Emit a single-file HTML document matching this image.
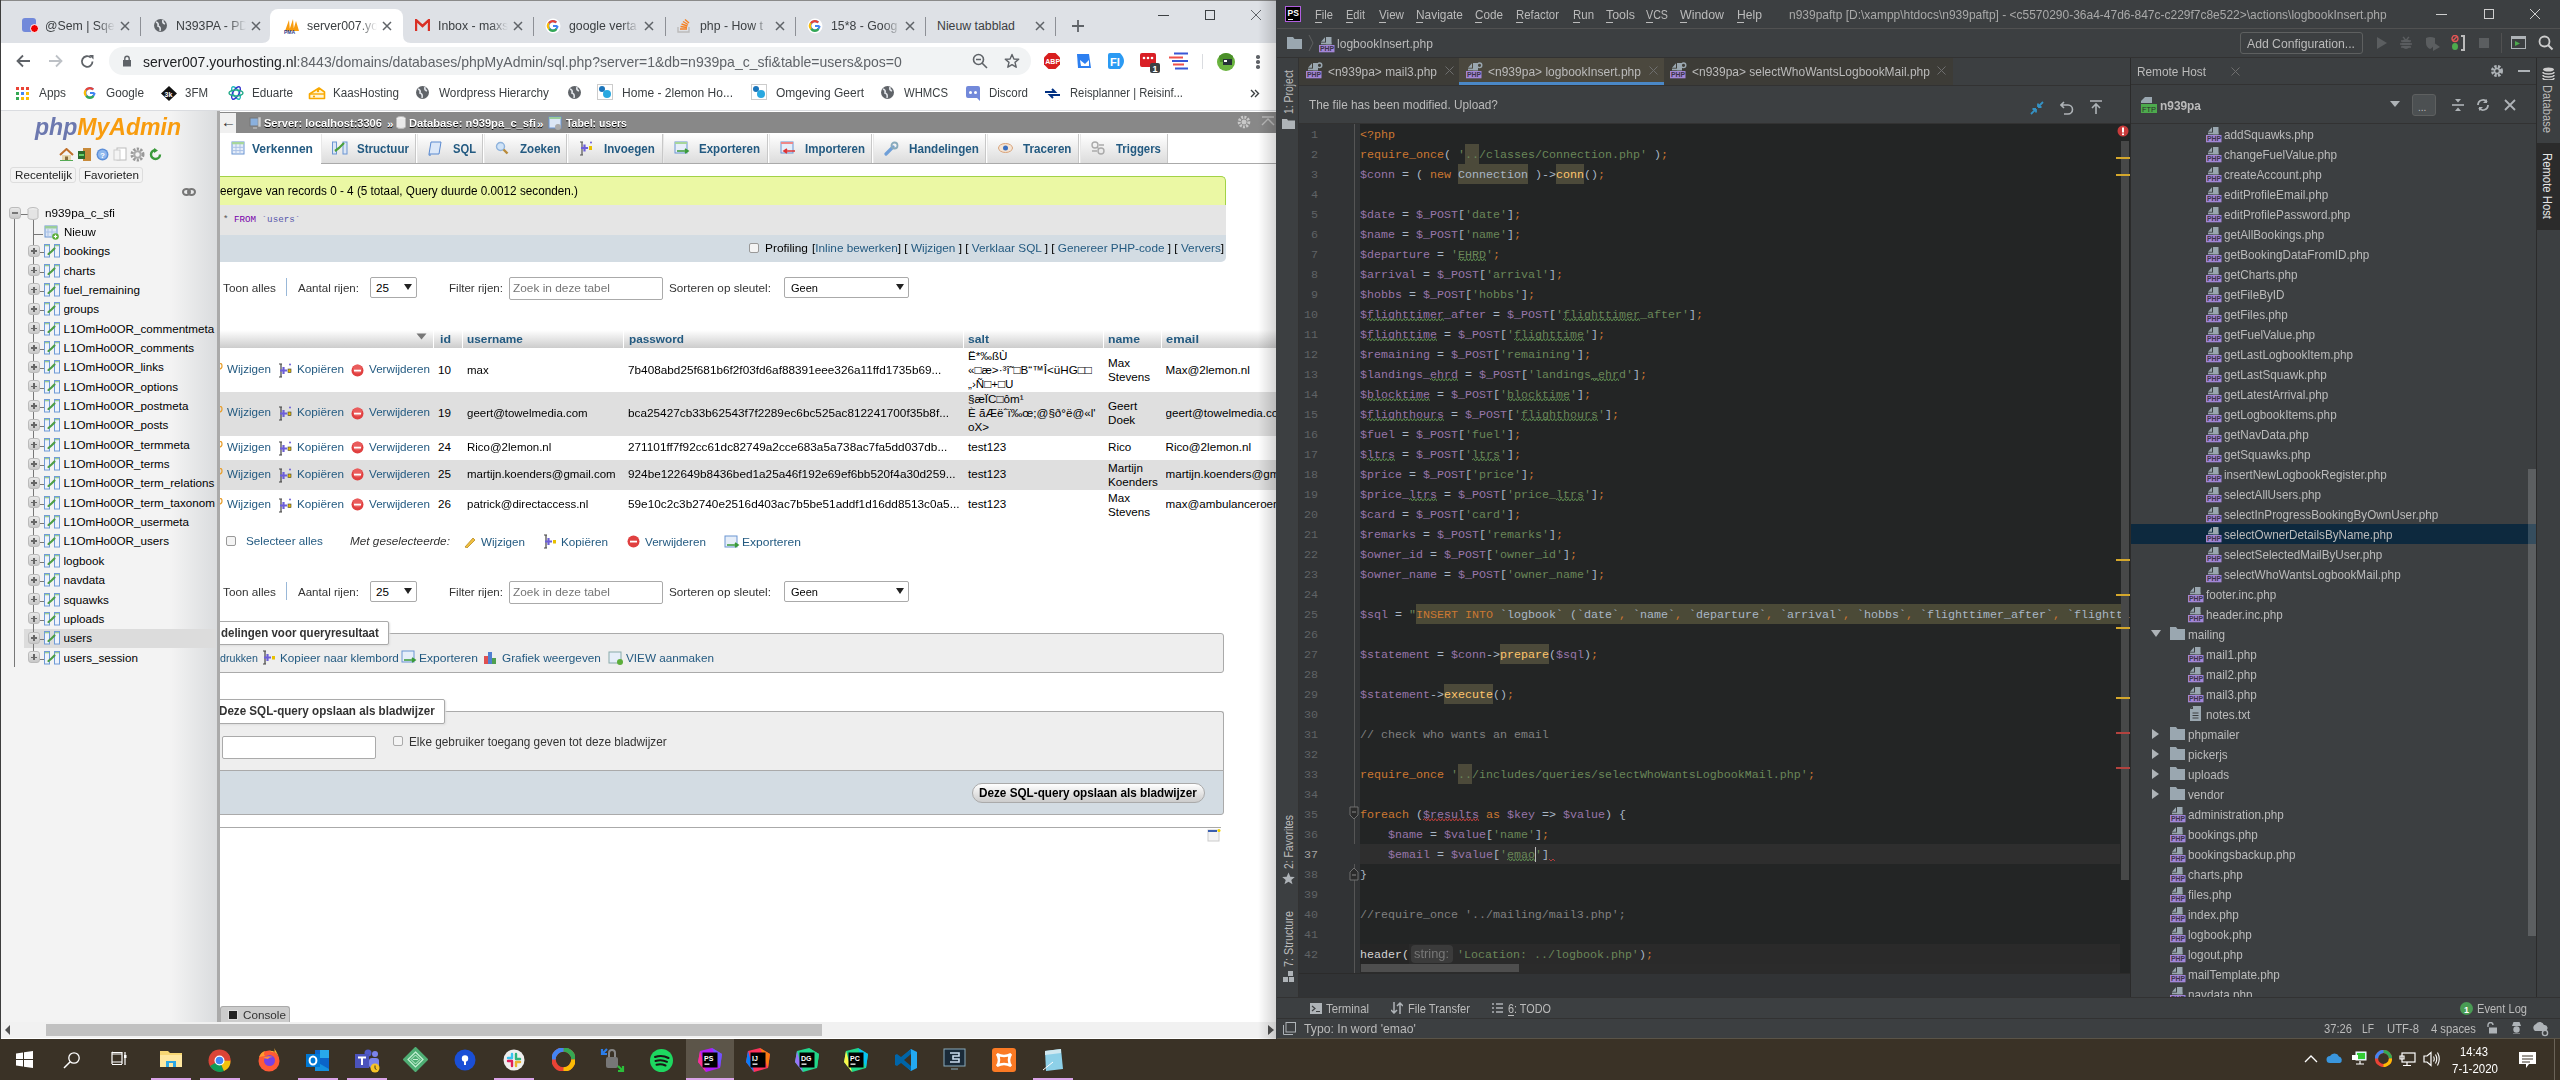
<!DOCTYPE html>
<html><head><meta charset="utf-8"><style>
html,body{margin:0;padding:0;width:2560px;height:1080px;overflow:hidden;background:#fff}
body>div,body>svg{position:absolute}
div>div,div>svg{position:absolute}
body{font-family:"Liberation Sans",sans-serif}
</style></head><body>
<div style="left:220px;top:111px;width:1057px;height:911px;background:#fff;"></div>
<div style="left:220px;top:112px;width:1057px;height:21px;background:#888;"></div>
<div style="left:220px;top:113px;width:16px;height:20px;background:#f0f0f0;"></div>
<div style="left:221px;top:113.00px;font-size:15px;line-height:18px;color:#333;font-family:'Liberation Sans',sans-serif;white-space:pre;">←</div>
<svg style="left:248px;top:116px;" width="14" height="14" viewBox="0 0 14 14"><rect x="2" y="2" width="10" height="8" fill="#8ab0dd" stroke="#777"/><rect x="10" y="1" width="3" height="10" fill="#ccc" stroke="#888" stroke-width="0.6"/><rect x="5" y="11" width="4" height="2" fill="#aaa"/></svg>
<div style="left:264px;top:115.00px;font-size:11.65px;line-height:16px;color:#fff;font-family:'Liberation Sans',sans-serif;white-space:pre;font-weight:700;transform:scaleX(0.9491);transform-origin:0 0;text-shadow:0 1px 0 #000;">Server: localhost:3306</div>
<div style="left:387px;top:116.00px;font-size:11.65px;line-height:16px;color:#fff;font-family:'Liberation Sans',sans-serif;white-space:pre;font-weight:700;text-shadow:0 1px 0 #000;">»</div>
<svg style="left:396px;top:116px;" width="10" height="13" viewBox="0 0 10 13"><ellipse cx="5" cy="2.5" rx="4.5" ry="2" fill="#f4f4f4" stroke="#bbb"/><path d="M0.5 2.5 V10.5 A4.5 2 0 0 0 9.5 10.5 V2.5" fill="#e9e9e9" stroke="#bbb"/></svg>
<div style="left:409px;top:115.00px;font-size:11.65px;line-height:16px;color:#fff;font-family:'Liberation Sans',sans-serif;white-space:pre;font-weight:700;transform:scaleX(0.9613);transform-origin:0 0;text-shadow:0 1px 0 #000;">Database: n939pa_c_sfi</div>
<div style="left:537px;top:116.00px;font-size:11.65px;line-height:16px;color:#fff;font-family:'Liberation Sans',sans-serif;white-space:pre;font-weight:700;text-shadow:0 1px 0 #000;">»</div>
<svg style="left:548px;top:116px;" width="14" height="14" viewBox="0 0 14 14"><rect x="1" y="1" width="12" height="11" fill="#dbe6f5" stroke="#6b95d2"/><rect x="1" y="1" width="12" height="2" fill="#9acd9a"/><circle cx="10" cy="11" r="3" fill="#aaa"/></svg>
<div style="left:566px;top:115.00px;font-size:11.65px;line-height:16px;color:#fff;font-family:'Liberation Sans',sans-serif;white-space:pre;font-weight:700;transform:scaleX(0.9001);transform-origin:0 0;text-shadow:0 1px 0 #000;">Tabel: users</div>
<svg style="left:1237px;top:115px;" width="14" height="14" viewBox="0 0 14 14"><circle cx="7" cy="7" r="4.8" fill="none" stroke="#c8c8c8" stroke-width="3" stroke-dasharray="2 1.2"/><circle cx="7" cy="7" r="2.5" fill="#c8c8c8"/></svg>
<svg style="left:1261px;top:116px;" width="14" height="12" viewBox="0 0 14 12"><path d="M1 1 H13 M1 9 L7 3 L13 9" stroke="#bbb" stroke-width="1.4" fill="none"/></svg>
<div style="left:220px;top:163px;width:1057px;height:1px;background:#aaa;"></div>
<div style="left:220px;top:133px;width:101px;height:31px;background:#fff;"></div>
<div style="left:252px;top:140.50px;font-size:12.2px;line-height:16px;color:#235a81;font-family:'Liberation Sans',sans-serif;white-space:pre;font-weight:700;transform:scaleX(0.9885);transform-origin:0 0;">Verkennen</div>
<svg style="left:231px;top:141px;" width="14" height="14" viewBox="0 0 14 14"><rect x="1" y="1" width="12" height="12" fill="#e6eef9" stroke="#6b95d2"/><rect x="1" y="1" width="12" height="2.3" fill="#a6d69a"/><path d="M5 3 V13 M9 3 V13 M1 6.3 H13 M1 9.6 H13" stroke="#a9c1e6"/></svg>
<div style="left:321px;top:134px;width:95px;height:29px;background:linear-gradient(#ffffff,#dcdcdc);border-right:1px solid #c8c8c8;border-left:1px solid #e8e8e8;box-sizing:border-box"></div>
<div style="left:357px;top:140.50px;font-size:12.2px;line-height:16px;color:#235a81;font-family:'Liberation Sans',sans-serif;white-space:pre;font-weight:700;transform:scaleX(0.9471);transform-origin:0 0;">Structuur</div>
<svg style="left:332px;top:141px;" width="16" height="14" viewBox="0 0 16 14"><rect x="0.5" y="1" width="4" height="12" fill="#dbe6f5" stroke="#6b95d2"/><rect x="11" y="1" width="4" height="12" fill="#dbe6f5" stroke="#6b95d2"/><path d="M3 10 L7 7 L12 2" stroke="#4aa03a" stroke-width="2.2" fill="none"/></svg>
<div style="left:417px;top:134px;width:66px;height:29px;background:linear-gradient(#ffffff,#dcdcdc);border-right:1px solid #c8c8c8;border-left:1px solid #e8e8e8;box-sizing:border-box"></div>
<div style="left:453px;top:140.50px;font-size:12.2px;line-height:16px;color:#235a81;font-family:'Liberation Sans',sans-serif;white-space:pre;font-weight:700;transform:scaleX(0.9171);transform-origin:0 0;">SQL</div>
<svg style="left:428px;top:141px;" width="14" height="15" viewBox="0 0 14 15"><path d="M3 1 H13 L11 13 H1Z" fill="#dce8f8" stroke="#5a8ad0"/><path d="M1 13 Q0 15 3 14" stroke="#5a8ad0" fill="none"/></svg>
<div style="left:484px;top:134px;width:83px;height:29px;background:linear-gradient(#ffffff,#dcdcdc);border-right:1px solid #c8c8c8;border-left:1px solid #e8e8e8;box-sizing:border-box"></div>
<div style="left:520px;top:140.50px;font-size:12.2px;line-height:16px;color:#235a81;font-family:'Liberation Sans',sans-serif;white-space:pre;font-weight:700;transform:scaleX(0.9500);transform-origin:0 0;">Zoeken</div>
<svg style="left:495px;top:141px;" width="14" height="14" viewBox="0 0 14 14"><circle cx="5.5" cy="5.5" r="4" fill="#cfe3f7" stroke="#8fb3dc" stroke-width="1.4"/><path d="M8.5 8.5 L12.5 12.5" stroke="#b88a3a" stroke-width="2.4"/></svg>
<div style="left:568px;top:134px;width:95px;height:29px;background:linear-gradient(#ffffff,#dcdcdc);border-right:1px solid #c8c8c8;border-left:1px solid #e8e8e8;box-sizing:border-box"></div>
<div style="left:604px;top:140.50px;font-size:12.2px;line-height:16px;color:#235a81;font-family:'Liberation Sans',sans-serif;white-space:pre;font-weight:700;transform:scaleX(0.9500);transform-origin:0 0;">Invoegen</div>
<svg style="left:579px;top:141px;" width="14" height="15" viewBox="0 0 14 15"><path d="M3 1 V14 M1 1 H4 M1 14 H4" stroke="#555" stroke-width="1.2"/><path d="M2 7 H9 M5.5 3.5 V10.5" stroke="#6d5fd8" stroke-width="2.2"/><rect x="10" y="5" width="3" height="4" fill="#e8c000"/><circle cx="12" cy="1.5" r="1" fill="#6d5fd8"/></svg>
<div style="left:663px;top:134px;width:105px;height:29px;background:linear-gradient(#ffffff,#dcdcdc);border-right:1px solid #c8c8c8;border-left:1px solid #e8e8e8;box-sizing:border-box"></div>
<div style="left:699px;top:140.50px;font-size:12.2px;line-height:16px;color:#235a81;font-family:'Liberation Sans',sans-serif;white-space:pre;font-weight:700;transform:scaleX(0.9471);transform-origin:0 0;">Exporteren</div>
<svg style="left:674px;top:141px;" width="16" height="14" viewBox="0 0 16 14"><rect x="1" y="1" width="12" height="11" fill="#e6eef9" stroke="#6b95d2"/><rect x="1" y="1" width="12" height="2" fill="#a6d69a"/><path d="M3 10 H13 M11 8 L14 10 L11 12" stroke="#3a9a3a" stroke-width="1.6" fill="none"/></svg>
<div style="left:769px;top:134px;width:103px;height:29px;background:linear-gradient(#ffffff,#dcdcdc);border-right:1px solid #c8c8c8;border-left:1px solid #e8e8e8;box-sizing:border-box"></div>
<div style="left:805px;top:140.50px;font-size:12.2px;line-height:16px;color:#235a81;font-family:'Liberation Sans',sans-serif;white-space:pre;font-weight:700;transform:scaleX(0.9416);transform-origin:0 0;">Importeren</div>
<svg style="left:780px;top:141px;" width="16" height="14" viewBox="0 0 16 14"><rect x="1" y="1" width="12" height="11" fill="#e6eef9" stroke="#6b95d2"/><rect x="1" y="1" width="12" height="2" fill="#e88"/><path d="M15 10 H5 M7 8 L4 10 L7 12" stroke="#d33" stroke-width="1.6" fill="none"/></svg>
<div style="left:873px;top:134px;width:113px;height:29px;background:linear-gradient(#ffffff,#dcdcdc);border-right:1px solid #c8c8c8;border-left:1px solid #e8e8e8;box-sizing:border-box"></div>
<div style="left:909px;top:140.50px;font-size:12.2px;line-height:16px;color:#235a81;font-family:'Liberation Sans',sans-serif;white-space:pre;font-weight:700;transform:scaleX(0.9562);transform-origin:0 0;">Handelingen</div>
<svg style="left:884px;top:141px;" width="15" height="15" viewBox="0 0 15 15"><path d="M2 13 L9 6" stroke="#6f9fd8" stroke-width="3.2" stroke-linecap="round"/><circle cx="10.5" cy="4.5" r="3" fill="none" stroke="#8ab" stroke-width="1.8"/></svg>
<div style="left:987px;top:134px;width:92px;height:29px;background:linear-gradient(#ffffff,#dcdcdc);border-right:1px solid #c8c8c8;border-left:1px solid #e8e8e8;box-sizing:border-box"></div>
<div style="left:1023px;top:140.50px;font-size:12.2px;line-height:16px;color:#235a81;font-family:'Liberation Sans',sans-serif;white-space:pre;font-weight:700;transform:scaleX(0.9534);transform-origin:0 0;">Traceren</div>
<svg style="left:998px;top:143px;" width="15" height="10" viewBox="0 0 15 10"><ellipse cx="7.5" cy="5" rx="7" ry="4.5" fill="#f4e4d4" stroke="#d9a37a"/><circle cx="7.5" cy="5" r="2.5" fill="#3a6fc0"/></svg>
<div style="left:1080px;top:134px;width:88px;height:29px;background:linear-gradient(#ffffff,#dcdcdc);border-right:1px solid #c8c8c8;border-left:1px solid #e8e8e8;box-sizing:border-box"></div>
<div style="left:1116px;top:140.50px;font-size:12.2px;line-height:16px;color:#235a81;font-family:'Liberation Sans',sans-serif;white-space:pre;font-weight:700;transform:scaleX(0.9348);transform-origin:0 0;">Triggers</div>
<svg style="left:1091px;top:141px;" width="14" height="14" viewBox="0 0 14 14"><circle cx="4" cy="4" r="3" fill="none" stroke="#aaa" stroke-width="1.4"/><circle cx="10" cy="10" r="3" fill="none" stroke="#aaa" stroke-width="1.4"/><path d="M6 6 L8 8 M1 10 H6 M8 4 H13" stroke="#aaa" stroke-width="1.4"/></svg>
<div style="left:220px;top:176px;width:1006px;height:29px;background:#ebf8a4;border-top:1px solid #a2d246;border-right:1px solid #a2d246;border-radius:0 5px 0 0;box-sizing:border-box"></div>
<div style="left:220px;top:183.00px;font-size:12.3px;line-height:16px;color:#000;font-family:'Liberation Sans',sans-serif;white-space:pre;transform:scaleX(0.9537);transform-origin:0 0;">eergave van records 0 - 4 (5 totaal, Query duurde 0.0012 seconden.)</div>
<div style="left:220px;top:205px;width:1006px;height:30px;background:#e5e5e5;"></div>
<div style="left:223px;top:214px;font-family:'Liberation Mono',monospace;font-size:9.2px;line-height:12px;white-space:pre"><span style="color:#555">*</span> <span style="color:#70a">FROM</span> <span style="color:#55a">`users`</span></div>
<div style="left:220px;top:235px;width:1006px;height:27px;background:#d3dce3;border-radius:0 0 5px 0"></div>
<div style="left:749px;top:243px;width:10px;height:10px;border:1px solid #999;border-radius:2px;background:#f4f4f4;box-sizing:border-box"></div>
<div style="left:765px;top:240.00px;font-size:11.65px;line-height:16px;color:#000;font-family:'Liberation Sans',sans-serif;white-space:pre;transform:scaleX(1.0216);transform-origin:0 0;">Profiling</div>
<div style="left:812px;top:240px;font-family:'Liberation Sans',sans-serif;font-size:11.65px;line-height:16px;white-space:pre;color:#000;transform:scaleX(1.012);transform-origin:0 0">[<span style="color:#235a81">Inline bewerken</span>] [ <span style="color:#235a81">Wijzigen</span> ] [ <span style="color:#235a81">Verklaar SQL</span> ] [ <span style="color:#235a81">Genereer PHP-code</span> ] [ <span style="color:#235a81">Ververs</span>]</div>
<div style="left:223px;top:280.00px;font-size:11.65px;line-height:16px;color:#333;font-family:'Liberation Sans',sans-serif;white-space:pre;transform:scaleX(1.0103);transform-origin:0 0;">Toon alles</div>
<div style="left:286px;top:278px;width:1px;height:18px;background:#99b8d8;"></div>
<div style="left:298px;top:280.00px;font-size:11.65px;line-height:16px;color:#333;font-family:'Liberation Sans',sans-serif;white-space:pre;transform:scaleX(0.9915);transform-origin:0 0;">Aantal rijen:</div>
<div style="left:370px;top:277px;width:47px;height:21px;border:1px solid #aaa;border-radius:2px;background:#fff;box-sizing:border-box"></div>
<div style="left:376px;top:280.00px;font-size:11.65px;line-height:16px;color:#000;font-family:'Liberation Sans',sans-serif;white-space:pre;">25</div>
<svg style="left:404px;top:284px;" width="8" height="7" viewBox="0 0 8 7"><path d="M0 0 H8 L4 6Z" fill="#222"/></svg>
<div style="left:449px;top:280.00px;font-size:11.65px;line-height:16px;color:#333;font-family:'Liberation Sans',sans-serif;white-space:pre;transform:scaleX(0.9930);transform-origin:0 0;">Filter rijen:</div>
<div style="left:509px;top:277px;width:154px;height:23px;border:1px solid #aaa;border-radius:2px;background:#fff;box-sizing:border-box"></div>
<div style="left:513px;top:280.00px;font-size:11.65px;line-height:16px;color:#757575;font-family:'Liberation Sans',sans-serif;white-space:pre;transform:scaleX(1.0189);transform-origin:0 0;">Zoek in deze tabel</div>
<div style="left:669px;top:280.00px;font-size:11.65px;line-height:16px;color:#333;font-family:'Liberation Sans',sans-serif;white-space:pre;transform:scaleX(1.0096);transform-origin:0 0;">Sorteren op sleutel:</div>
<div style="left:784px;top:277px;width:125px;height:21px;border:1px solid #aaa;border-radius:2px;background:#fff;box-sizing:border-box"></div>
<div style="left:791px;top:280.00px;font-size:11.65px;line-height:16px;color:#000;font-family:'Liberation Sans',sans-serif;white-space:pre;transform:scaleX(0.9474);transform-origin:0 0;">Geen</div>
<svg style="left:896px;top:284px;" width="8" height="7" viewBox="0 0 8 7"><path d="M0 0 H8 L4 6Z" fill="#222"/></svg>
<div style="left:223px;top:584.00px;font-size:11.65px;line-height:16px;color:#333;font-family:'Liberation Sans',sans-serif;white-space:pre;transform:scaleX(1.0103);transform-origin:0 0;">Toon alles</div>
<div style="left:286px;top:582px;width:1px;height:18px;background:#99b8d8;"></div>
<div style="left:298px;top:584.00px;font-size:11.65px;line-height:16px;color:#333;font-family:'Liberation Sans',sans-serif;white-space:pre;transform:scaleX(0.9915);transform-origin:0 0;">Aantal rijen:</div>
<div style="left:370px;top:581px;width:47px;height:21px;border:1px solid #aaa;border-radius:2px;background:#fff;box-sizing:border-box"></div>
<div style="left:376px;top:584.00px;font-size:11.65px;line-height:16px;color:#000;font-family:'Liberation Sans',sans-serif;white-space:pre;">25</div>
<svg style="left:404px;top:588px;" width="8" height="7" viewBox="0 0 8 7"><path d="M0 0 H8 L4 6Z" fill="#222"/></svg>
<div style="left:449px;top:584.00px;font-size:11.65px;line-height:16px;color:#333;font-family:'Liberation Sans',sans-serif;white-space:pre;transform:scaleX(0.9930);transform-origin:0 0;">Filter rijen:</div>
<div style="left:509px;top:581px;width:154px;height:23px;border:1px solid #aaa;border-radius:2px;background:#fff;box-sizing:border-box"></div>
<div style="left:513px;top:584.00px;font-size:11.65px;line-height:16px;color:#757575;font-family:'Liberation Sans',sans-serif;white-space:pre;transform:scaleX(1.0189);transform-origin:0 0;">Zoek in deze tabel</div>
<div style="left:669px;top:584.00px;font-size:11.65px;line-height:16px;color:#333;font-family:'Liberation Sans',sans-serif;white-space:pre;transform:scaleX(1.0096);transform-origin:0 0;">Sorteren op sleutel:</div>
<div style="left:784px;top:581px;width:125px;height:21px;border:1px solid #aaa;border-radius:2px;background:#fff;box-sizing:border-box"></div>
<div style="left:791px;top:584.00px;font-size:11.65px;line-height:16px;color:#000;font-family:'Liberation Sans',sans-serif;white-space:pre;transform:scaleX(0.9474);transform-origin:0 0;">Geen</div>
<svg style="left:896px;top:588px;" width="8" height="7" viewBox="0 0 8 7"><path d="M0 0 H8 L4 6Z" fill="#222"/></svg>
<div style="left:220px;top:330px;width:1057px;height:18px;background:linear-gradient(#ffffff,#cccccc)"></div>
<div style="left:433px;top:330px;width:1px;height:18px;background:#fff;"></div>
<div style="left:462px;top:330px;width:1px;height:18px;background:#fff;"></div>
<div style="left:623px;top:330px;width:1px;height:18px;background:#fff;"></div>
<div style="left:963px;top:330px;width:1px;height:18px;background:#fff;"></div>
<div style="left:1103px;top:330px;width:1px;height:18px;background:#fff;"></div>
<div style="left:1161px;top:330px;width:1px;height:18px;background:#fff;"></div>
<svg style="left:416px;top:333px;" width="11" height="8" viewBox="0 0 11 8"><path d="M0.5 0.5 H10.5 L5.5 6.5Z" fill="#777"/></svg>
<div style="left:440px;top:331.00px;font-size:11.65px;line-height:16px;color:#235a81;font-family:'Liberation Sans',sans-serif;white-space:pre;font-weight:700;transform:scaleX(1.0625);transform-origin:0 0;">id</div>
<div style="left:467px;top:331.00px;font-size:11.65px;line-height:16px;color:#235a81;font-family:'Liberation Sans',sans-serif;white-space:pre;font-weight:700;transform:scaleX(1.0174);transform-origin:0 0;">username</div>
<div style="left:629px;top:331.00px;font-size:11.65px;line-height:16px;color:#235a81;font-family:'Liberation Sans',sans-serif;white-space:pre;font-weight:700;transform:scaleX(1.0114);transform-origin:0 0;">password</div>
<div style="left:968px;top:331.00px;font-size:11.65px;line-height:16px;color:#235a81;font-family:'Liberation Sans',sans-serif;white-space:pre;font-weight:700;transform:scaleX(1.0461);transform-origin:0 0;">salt</div>
<div style="left:1108px;top:331.00px;font-size:11.65px;line-height:16px;color:#235a81;font-family:'Liberation Sans',sans-serif;white-space:pre;font-weight:700;transform:scaleX(1.0515);transform-origin:0 0;">name</div>
<div style="left:1166px;top:331.00px;font-size:11.65px;line-height:16px;color:#235a81;font-family:'Liberation Sans',sans-serif;white-space:pre;font-weight:700;transform:scaleX(1.1077);transform-origin:0 0;">email</div>
<div style="left:220px;top:348px;width:1057px;height:44px;background:#fff;"></div>
<svg style="left:218px;top:363px;" width="6" height="8" viewBox="0 0 6 8"><circle cx="1" cy="3" r="3" fill="none" stroke="#e8a030" stroke-width="1.3"/></svg>
<div style="left:227px;top:361.00px;font-size:11.65px;line-height:16px;color:#235a81;font-family:'Liberation Sans',sans-serif;white-space:pre;transform:scaleX(0.9994);transform-origin:0 0;">Wijzigen</div>
<svg style="left:278px;top:363px;" width="14" height="15" viewBox="0 0 14 15"><path d="M3 1 V14 M1 1 H4 M1 14 H4" stroke="#444" stroke-width="1.2"/><path d="M2 7.5 H9 M5.5 4 V11" stroke="#6d5fd8" stroke-width="2.2"/><rect x="10" y="6" width="3" height="3.5" fill="#e8c000" stroke="#333" stroke-width="0.6"/><circle cx="12" cy="1.5" r="1" fill="#6d5fd8"/></svg>
<div style="left:297px;top:361.00px;font-size:11.65px;line-height:16px;color:#235a81;font-family:'Liberation Sans',sans-serif;white-space:pre;transform:scaleX(1.0078);transform-origin:0 0;">Kopiëren</div>
<svg style="left:351px;top:363.5px;" width="13" height="13" viewBox="0 0 13 13"><circle cx="6.5" cy="6.5" r="6" fill="#e04040"/><circle cx="6.5" cy="5" r="4.5" fill="#f07070" opacity="0.6"/><rect x="3" y="5.7" width="7" height="1.8" fill="#fff"/></svg>
<div style="left:369px;top:361.00px;font-size:11.65px;line-height:16px;color:#235a81;font-family:'Liberation Sans',sans-serif;white-space:pre;transform:scaleX(1.0020);transform-origin:0 0;">Verwijderen</div>
<div style="left:438px;top:361.50px;font-size:11.65px;line-height:16px;color:#000;font-family:'Liberation Sans',sans-serif;white-space:pre;">10</div>
<div style="left:466.5px;top:361.50px;font-size:11.65px;line-height:16px;color:#000;font-family:'Liberation Sans',sans-serif;white-space:pre;transform:scaleX(0.9850);transform-origin:0 0;">max</div>
<div style="left:627.5px;top:361.50px;font-size:11.65px;line-height:16px;color:#000;font-family:'Liberation Sans',sans-serif;white-space:pre;transform:scaleX(1.0120);transform-origin:0 0;">7b408abd25f681b6f2f03fd6af88391eee326a11ffd1735b69...</div>
<div style="left:968px;top:349.00px;font-size:11.65px;line-height:14px;color:#000;font-family:'Liberation Sans',sans-serif;white-space:pre;">Ë*‰ßÙ</div>
<div style="left:968px;top:363.00px;font-size:11.65px;line-height:14px;color:#000;font-family:'Liberation Sans',sans-serif;white-space:pre;">«□æ&gt;·³î˜□B“™Î&lt;üHG□□</div>
<div style="left:968px;top:377.00px;font-size:11.65px;line-height:14px;color:#000;font-family:'Liberation Sans',sans-serif;white-space:pre;">„›Ñ□+□U</div>
<div style="left:1108px;top:356.00px;font-size:11.65px;line-height:14px;color:#000;font-family:'Liberation Sans',sans-serif;white-space:pre;">Max</div>
<div style="left:1108px;top:370.00px;font-size:11.65px;line-height:14px;color:#000;font-family:'Liberation Sans',sans-serif;white-space:pre;">Stevens</div>
<div style="left:1165.5px;top:361.5px;width:111px;overflow:hidden;font-family:'Liberation Sans',sans-serif;font-size:11.65px;line-height:16px;white-space:pre;color:#000">Max@2lemon.nl</div>
<div style="left:220px;top:392px;width:1057px;height:44px;background:#dfdfdf;"></div>
<svg style="left:218px;top:406px;" width="6" height="8" viewBox="0 0 6 8"><circle cx="1" cy="3" r="3" fill="none" stroke="#e8a030" stroke-width="1.3"/></svg>
<div style="left:227px;top:404.00px;font-size:11.65px;line-height:16px;color:#235a81;font-family:'Liberation Sans',sans-serif;white-space:pre;transform:scaleX(0.9994);transform-origin:0 0;">Wijzigen</div>
<svg style="left:278px;top:406px;" width="14" height="15" viewBox="0 0 14 15"><path d="M3 1 V14 M1 1 H4 M1 14 H4" stroke="#444" stroke-width="1.2"/><path d="M2 7.5 H9 M5.5 4 V11" stroke="#6d5fd8" stroke-width="2.2"/><rect x="10" y="6" width="3" height="3.5" fill="#e8c000" stroke="#333" stroke-width="0.6"/><circle cx="12" cy="1.5" r="1" fill="#6d5fd8"/></svg>
<div style="left:297px;top:404.00px;font-size:11.65px;line-height:16px;color:#235a81;font-family:'Liberation Sans',sans-serif;white-space:pre;transform:scaleX(1.0078);transform-origin:0 0;">Kopiëren</div>
<svg style="left:351px;top:406.5px;" width="13" height="13" viewBox="0 0 13 13"><circle cx="6.5" cy="6.5" r="6" fill="#e04040"/><circle cx="6.5" cy="5" r="4.5" fill="#f07070" opacity="0.6"/><rect x="3" y="5.7" width="7" height="1.8" fill="#fff"/></svg>
<div style="left:369px;top:404.00px;font-size:11.65px;line-height:16px;color:#235a81;font-family:'Liberation Sans',sans-serif;white-space:pre;transform:scaleX(1.0020);transform-origin:0 0;">Verwijderen</div>
<div style="left:438px;top:404.50px;font-size:11.65px;line-height:16px;color:#000;font-family:'Liberation Sans',sans-serif;white-space:pre;">19</div>
<div style="left:466.5px;top:404.50px;font-size:11.65px;line-height:16px;color:#000;font-family:'Liberation Sans',sans-serif;white-space:pre;transform:scaleX(0.9850);transform-origin:0 0;">geert@towelmedia.com</div>
<div style="left:627.5px;top:404.50px;font-size:11.65px;line-height:16px;color:#000;font-family:'Liberation Sans',sans-serif;white-space:pre;transform:scaleX(1.0120);transform-origin:0 0;">bca25427cb33b62543f7f2289ec6bc525ac812241700f35b8f...</div>
<div style="left:968px;top:392.00px;font-size:11.65px;line-height:14px;color:#000;font-family:'Liberation Sans',sans-serif;white-space:pre;">§æÏC□ôm¹</div>
<div style="left:968px;top:406.00px;font-size:11.65px;line-height:14px;color:#000;font-family:'Liberation Sans',sans-serif;white-space:pre;">È ãÆëˆï‰œ;@§ð°ë@«l'</div>
<div style="left:968px;top:420.00px;font-size:11.65px;line-height:14px;color:#000;font-family:'Liberation Sans',sans-serif;white-space:pre;">oX&gt;</div>
<div style="left:1108px;top:399.00px;font-size:11.65px;line-height:14px;color:#000;font-family:'Liberation Sans',sans-serif;white-space:pre;">Geert</div>
<div style="left:1108px;top:413.00px;font-size:11.65px;line-height:14px;color:#000;font-family:'Liberation Sans',sans-serif;white-space:pre;">Doek</div>
<div style="left:1165.5px;top:404.5px;width:111px;overflow:hidden;font-family:'Liberation Sans',sans-serif;font-size:11.65px;line-height:16px;white-space:pre;color:#000">geert@towelmedia.com</div>
<div style="left:220px;top:436px;width:1057px;height:24px;background:#fff;"></div>
<svg style="left:218px;top:440.5px;" width="6" height="8" viewBox="0 0 6 8"><circle cx="1" cy="3" r="3" fill="none" stroke="#e8a030" stroke-width="1.3"/></svg>
<div style="left:227px;top:438.50px;font-size:11.65px;line-height:16px;color:#235a81;font-family:'Liberation Sans',sans-serif;white-space:pre;transform:scaleX(0.9994);transform-origin:0 0;">Wijzigen</div>
<svg style="left:278px;top:440.5px;" width="14" height="15" viewBox="0 0 14 15"><path d="M3 1 V14 M1 1 H4 M1 14 H4" stroke="#444" stroke-width="1.2"/><path d="M2 7.5 H9 M5.5 4 V11" stroke="#6d5fd8" stroke-width="2.2"/><rect x="10" y="6" width="3" height="3.5" fill="#e8c000" stroke="#333" stroke-width="0.6"/><circle cx="12" cy="1.5" r="1" fill="#6d5fd8"/></svg>
<div style="left:297px;top:438.50px;font-size:11.65px;line-height:16px;color:#235a81;font-family:'Liberation Sans',sans-serif;white-space:pre;transform:scaleX(1.0078);transform-origin:0 0;">Kopiëren</div>
<svg style="left:351px;top:441.0px;" width="13" height="13" viewBox="0 0 13 13"><circle cx="6.5" cy="6.5" r="6" fill="#e04040"/><circle cx="6.5" cy="5" r="4.5" fill="#f07070" opacity="0.6"/><rect x="3" y="5.7" width="7" height="1.8" fill="#fff"/></svg>
<div style="left:369px;top:438.50px;font-size:11.65px;line-height:16px;color:#235a81;font-family:'Liberation Sans',sans-serif;white-space:pre;transform:scaleX(1.0020);transform-origin:0 0;">Verwijderen</div>
<div style="left:438px;top:439.00px;font-size:11.65px;line-height:16px;color:#000;font-family:'Liberation Sans',sans-serif;white-space:pre;">24</div>
<div style="left:466.5px;top:439.00px;font-size:11.65px;line-height:16px;color:#000;font-family:'Liberation Sans',sans-serif;white-space:pre;transform:scaleX(0.9850);transform-origin:0 0;">Rico@2lemon.nl</div>
<div style="left:627.5px;top:439.00px;font-size:11.65px;line-height:16px;color:#000;font-family:'Liberation Sans',sans-serif;white-space:pre;transform:scaleX(1.0120);transform-origin:0 0;">271101ff7f92cc61dc82749a2cce683a5a738ac7fa5dd037db...</div>
<div style="left:968px;top:439.00px;font-size:11.65px;line-height:16px;color:#000;font-family:'Liberation Sans',sans-serif;white-space:pre;">test123</div>
<div style="left:1108px;top:439.00px;font-size:11.65px;line-height:16px;color:#000;font-family:'Liberation Sans',sans-serif;white-space:pre;">Rico</div>
<div style="left:1165.5px;top:439.0px;width:111px;overflow:hidden;font-family:'Liberation Sans',sans-serif;font-size:11.65px;line-height:16px;white-space:pre;color:#000">Rico@2lemon.nl</div>
<div style="left:220px;top:460px;width:1057px;height:30px;background:#dfdfdf;"></div>
<svg style="left:218px;top:467.5px;" width="6" height="8" viewBox="0 0 6 8"><circle cx="1" cy="3" r="3" fill="none" stroke="#e8a030" stroke-width="1.3"/></svg>
<div style="left:227px;top:465.50px;font-size:11.65px;line-height:16px;color:#235a81;font-family:'Liberation Sans',sans-serif;white-space:pre;transform:scaleX(0.9994);transform-origin:0 0;">Wijzigen</div>
<svg style="left:278px;top:467.5px;" width="14" height="15" viewBox="0 0 14 15"><path d="M3 1 V14 M1 1 H4 M1 14 H4" stroke="#444" stroke-width="1.2"/><path d="M2 7.5 H9 M5.5 4 V11" stroke="#6d5fd8" stroke-width="2.2"/><rect x="10" y="6" width="3" height="3.5" fill="#e8c000" stroke="#333" stroke-width="0.6"/><circle cx="12" cy="1.5" r="1" fill="#6d5fd8"/></svg>
<div style="left:297px;top:465.50px;font-size:11.65px;line-height:16px;color:#235a81;font-family:'Liberation Sans',sans-serif;white-space:pre;transform:scaleX(1.0078);transform-origin:0 0;">Kopiëren</div>
<svg style="left:351px;top:468.0px;" width="13" height="13" viewBox="0 0 13 13"><circle cx="6.5" cy="6.5" r="6" fill="#e04040"/><circle cx="6.5" cy="5" r="4.5" fill="#f07070" opacity="0.6"/><rect x="3" y="5.7" width="7" height="1.8" fill="#fff"/></svg>
<div style="left:369px;top:465.50px;font-size:11.65px;line-height:16px;color:#235a81;font-family:'Liberation Sans',sans-serif;white-space:pre;transform:scaleX(1.0020);transform-origin:0 0;">Verwijderen</div>
<div style="left:438px;top:466.00px;font-size:11.65px;line-height:16px;color:#000;font-family:'Liberation Sans',sans-serif;white-space:pre;">25</div>
<div style="left:466.5px;top:466.00px;font-size:11.65px;line-height:16px;color:#000;font-family:'Liberation Sans',sans-serif;white-space:pre;transform:scaleX(0.9850);transform-origin:0 0;">martijn.koenders@gmail.com</div>
<div style="left:627.5px;top:466.00px;font-size:11.65px;line-height:16px;color:#000;font-family:'Liberation Sans',sans-serif;white-space:pre;transform:scaleX(1.0120);transform-origin:0 0;">924be122649b8436bed1a25a46f192e69ef6bb520f4a30d259...</div>
<div style="left:968px;top:466.00px;font-size:11.65px;line-height:16px;color:#000;font-family:'Liberation Sans',sans-serif;white-space:pre;">test123</div>
<div style="left:1108px;top:460.50px;font-size:11.65px;line-height:14px;color:#000;font-family:'Liberation Sans',sans-serif;white-space:pre;">Martijn</div>
<div style="left:1108px;top:474.50px;font-size:11.65px;line-height:14px;color:#000;font-family:'Liberation Sans',sans-serif;white-space:pre;">Koenders</div>
<div style="left:1165.5px;top:466.0px;width:111px;overflow:hidden;font-family:'Liberation Sans',sans-serif;font-size:11.65px;line-height:16px;white-space:pre;color:#000">martijn.koenders@gmail.com</div>
<div style="left:220px;top:490px;width:1057px;height:29px;background:#fff;"></div>
<svg style="left:218px;top:497.5px;" width="6" height="8" viewBox="0 0 6 8"><circle cx="1" cy="3" r="3" fill="none" stroke="#e8a030" stroke-width="1.3"/></svg>
<div style="left:227px;top:495.50px;font-size:11.65px;line-height:16px;color:#235a81;font-family:'Liberation Sans',sans-serif;white-space:pre;transform:scaleX(0.9994);transform-origin:0 0;">Wijzigen</div>
<svg style="left:278px;top:497.5px;" width="14" height="15" viewBox="0 0 14 15"><path d="M3 1 V14 M1 1 H4 M1 14 H4" stroke="#444" stroke-width="1.2"/><path d="M2 7.5 H9 M5.5 4 V11" stroke="#6d5fd8" stroke-width="2.2"/><rect x="10" y="6" width="3" height="3.5" fill="#e8c000" stroke="#333" stroke-width="0.6"/><circle cx="12" cy="1.5" r="1" fill="#6d5fd8"/></svg>
<div style="left:297px;top:495.50px;font-size:11.65px;line-height:16px;color:#235a81;font-family:'Liberation Sans',sans-serif;white-space:pre;transform:scaleX(1.0078);transform-origin:0 0;">Kopiëren</div>
<svg style="left:351px;top:498.0px;" width="13" height="13" viewBox="0 0 13 13"><circle cx="6.5" cy="6.5" r="6" fill="#e04040"/><circle cx="6.5" cy="5" r="4.5" fill="#f07070" opacity="0.6"/><rect x="3" y="5.7" width="7" height="1.8" fill="#fff"/></svg>
<div style="left:369px;top:495.50px;font-size:11.65px;line-height:16px;color:#235a81;font-family:'Liberation Sans',sans-serif;white-space:pre;transform:scaleX(1.0020);transform-origin:0 0;">Verwijderen</div>
<div style="left:438px;top:496.00px;font-size:11.65px;line-height:16px;color:#000;font-family:'Liberation Sans',sans-serif;white-space:pre;">26</div>
<div style="left:466.5px;top:496.00px;font-size:11.65px;line-height:16px;color:#000;font-family:'Liberation Sans',sans-serif;white-space:pre;transform:scaleX(0.9850);transform-origin:0 0;">patrick@directaccess.nl</div>
<div style="left:627.5px;top:496.00px;font-size:11.65px;line-height:16px;color:#000;font-family:'Liberation Sans',sans-serif;white-space:pre;transform:scaleX(1.0120);transform-origin:0 0;">59e10c2c3b2740e2516d403ac7b5be51addf1d16dd8513c0a5...</div>
<div style="left:968px;top:496.00px;font-size:11.65px;line-height:16px;color:#000;font-family:'Liberation Sans',sans-serif;white-space:pre;">test123</div>
<div style="left:1108px;top:490.50px;font-size:11.65px;line-height:14px;color:#000;font-family:'Liberation Sans',sans-serif;white-space:pre;">Max</div>
<div style="left:1108px;top:504.50px;font-size:11.65px;line-height:14px;color:#000;font-family:'Liberation Sans',sans-serif;white-space:pre;">Stevens</div>
<div style="left:1165.5px;top:496.0px;width:111px;overflow:hidden;font-family:'Liberation Sans',sans-serif;font-size:11.65px;line-height:16px;white-space:pre;color:#000">max@ambulanceroemer.nl</div>
<div style="left:226px;top:536px;width:10px;height:10px;border:1px solid #999;border-radius:2px;background:#f4f4f4;box-sizing:border-box"></div>
<div style="left:246px;top:533.00px;font-size:11.65px;line-height:16px;color:#235a81;font-family:'Liberation Sans',sans-serif;white-space:pre;transform:scaleX(1.0076);transform-origin:0 0;">Selecteer alles</div>
<div style="left:350px;top:533.00px;font-size:11.65px;line-height:16px;color:#333;font-family:'Liberation Sans',sans-serif;white-space:pre;font-style:italic;transform:scaleX(1.0092);transform-origin:0 0;">Met geselecteerde:</div>
<svg style="left:463px;top:535px;" width="14" height="13" viewBox="0 0 14 13"><path d="M2 12 L10 3 L12 5 L4 13Z" fill="#f0c040" stroke="#b88a20" stroke-width="0.8"/></svg>
<div style="left:481px;top:533.50px;font-size:11.65px;line-height:16px;color:#235a81;font-family:'Liberation Sans',sans-serif;white-space:pre;transform:scaleX(0.9994);transform-origin:0 0;">Wijzigen</div>
<svg style="left:543px;top:534px;" width="14" height="15" viewBox="0 0 14 15"><path d="M3 1 V14 M1 1 H4 M1 14 H4" stroke="#444" stroke-width="1.2"/><path d="M2 7.5 H9 M5.5 4 V11" stroke="#6d5fd8" stroke-width="2.2"/><rect x="10" y="6" width="3" height="3.5" fill="#e8c000"/></svg>
<div style="left:561px;top:533.50px;font-size:11.65px;line-height:16px;color:#235a81;font-family:'Liberation Sans',sans-serif;white-space:pre;transform:scaleX(1.0078);transform-origin:0 0;">Kopiëren</div>
<svg style="left:627px;top:535px;" width="13" height="13" viewBox="0 0 13 13"><circle cx="6.5" cy="6.5" r="6" fill="#e04040"/><rect x="3" y="5.7" width="7" height="1.8" fill="#fff"/></svg>
<div style="left:645px;top:533.50px;font-size:11.65px;line-height:16px;color:#235a81;font-family:'Liberation Sans',sans-serif;white-space:pre;transform:scaleX(1.0020);transform-origin:0 0;">Verwijderen</div>
<svg style="left:724px;top:535px;" width="16" height="14" viewBox="0 0 16 14"><rect x="1" y="1" width="12" height="11" fill="#e6eef9" stroke="#6b95d2"/><path d="M3 10 H13 M11 8 L14 10 L11 12" stroke="#3a9a3a" stroke-width="1.6" fill="none"/></svg>
<div style="left:742px;top:533.50px;font-size:11.65px;line-height:16px;color:#235a81;font-family:'Liberation Sans',sans-serif;white-space:pre;transform:scaleX(1.0353);transform-origin:0 0;">Exporteren</div>
<div style="left:214px;top:633px;width:1010px;height:40px;background:#eee;border:1px solid #aaa;border-radius:3px;box-sizing:border-box"></div>
<div style="left:210px;top:621px;width:179px;height:24px;background:#fff;border:1px solid #aaa;border-radius:2px;box-shadow:1px 1px 2px #ddd;box-sizing:border-box"></div>
<div style="left:221px;top:625.00px;font-size:12.2px;line-height:16px;color:#333;font-family:'Liberation Sans',sans-serif;white-space:pre;font-weight:700;transform:scaleX(0.9435);transform-origin:0 0;">delingen voor queryresultaat</div>
<div style="left:220px;top:649.50px;font-size:11.65px;line-height:16px;color:#235a81;font-family:'Liberation Sans',sans-serif;white-space:pre;transform:scaleX(0.9168);transform-origin:0 0;">drukken</div>
<svg style="left:262px;top:650px;" width="14" height="15" viewBox="0 0 14 15"><path d="M3 1 V14 M1 1 H4 M1 14 H4" stroke="#444" stroke-width="1.2"/><path d="M2 7.5 H9 M5.5 4 V11" stroke="#6d5fd8" stroke-width="2.2"/><rect x="10" y="6" width="3" height="3.5" fill="#e8c000"/></svg>
<div style="left:280px;top:649.50px;font-size:11.65px;line-height:16px;color:#235a81;font-family:'Liberation Sans',sans-serif;white-space:pre;transform:scaleX(1.0096);transform-origin:0 0;">Kopieer naar klembord</div>
<svg style="left:401px;top:650px;" width="16" height="14" viewBox="0 0 16 14"><rect x="1" y="1" width="12" height="11" fill="#e6eef9" stroke="#6b95d2"/><path d="M3 10 H13 M11 8 L14 10 L11 12" stroke="#3a9a3a" stroke-width="1.6" fill="none"/></svg>
<div style="left:419px;top:649.50px;font-size:11.65px;line-height:16px;color:#235a81;font-family:'Liberation Sans',sans-serif;white-space:pre;transform:scaleX(1.0353);transform-origin:0 0;">Exporteren</div>
<svg style="left:483px;top:650px;" width="16" height="15" viewBox="0 0 16 15"><rect x="1" y="6" width="4" height="8" fill="#e05050"/><rect x="5" y="2" width="4" height="12" fill="#5080d0"/><rect x="9" y="8" width="4" height="6" fill="#50a050"/></svg>
<div style="left:502px;top:649.50px;font-size:11.65px;line-height:16px;color:#235a81;font-family:'Liberation Sans',sans-serif;white-space:pre;transform:scaleX(1.0125);transform-origin:0 0;">Grafiek weergeven</div>
<svg style="left:608px;top:650px;" width="16" height="15" viewBox="0 0 16 15"><rect x="1" y="2" width="12" height="11" fill="#e6eef9" stroke="#8aa"/><circle cx="12" cy="12" r="3" fill="#5cae3a"/></svg>
<div style="left:626px;top:649.50px;font-size:11.65px;line-height:16px;color:#235a81;font-family:'Liberation Sans',sans-serif;white-space:pre;transform:scaleX(1.0067);transform-origin:0 0;">VIEW aanmaken</div>
<div style="left:214px;top:711px;width:1010px;height:60px;background:#eee;border:1px solid #aaa;border-bottom:none;border-radius:3px 3px 0 0;box-sizing:border-box"></div>
<div style="left:210px;top:699px;width:235px;height:25px;background:#fff;border:1px solid #aaa;border-radius:2px;box-shadow:1px 1px 2px #ddd;box-sizing:border-box"></div>
<div style="left:219px;top:703.00px;font-size:12.2px;line-height:16px;color:#333;font-family:'Liberation Sans',sans-serif;white-space:pre;font-weight:700;transform:scaleX(0.9539);transform-origin:0 0;">Deze SQL-query opslaan als bladwijzer</div>
<div style="left:222px;top:736px;width:154px;height:23px;background:#fff;border:1px solid #aaa;border-radius:2px;box-sizing:border-box"></div>
<div style="left:393px;top:736px;width:10px;height:10px;border:1px solid #aaa;border-radius:2px;background:#f4f4f4;box-sizing:border-box"></div>
<div style="left:409px;top:734.00px;font-size:12.2px;line-height:16px;color:#333;font-family:'Liberation Sans',sans-serif;white-space:pre;transform:scaleX(0.9680);transform-origin:0 0;">Elke gebruiker toegang geven tot deze bladwijzer</div>
<div style="left:214px;top:770px;width:1010px;height:45px;background:#d3dce3;border:1px solid #aaa;border-top:1px solid #aaa;border-radius:0 0 3px 3px;box-sizing:border-box"></div>
<div style="left:972px;top:783px;width:233px;height:20px;background:linear-gradient(#ffffff,#cccccc);border:1px solid #aaa;border-radius:10px;box-sizing:border-box"></div>
<div style="left:979px;top:785.00px;font-size:12.2px;line-height:16px;color:#000;font-family:'Liberation Sans',sans-serif;white-space:pre;font-weight:700;transform:scaleX(0.9627);transform-origin:0 0;">Deze SQL-query opslaan als bladwijzer</div>
<div style="left:220px;top:827px;width:1001px;height:1px;background:#aaa;"></div>
<svg style="left:1207px;top:829px;" width="14" height="13" viewBox="0 0 14 13"><rect x="1" y="1" width="11" height="11" fill="#f4f4f4" stroke="#ccc"/><rect x="1" y="1" width="9" height="2" fill="#3a5fb0"/><circle cx="12" cy="1.5" r="1.5" fill="#f0d000"/></svg>
<div style="left:220px;top:1006px;width:70px;height:16px;background:#ccc;border:1px solid #aaa;border-bottom:none;border-radius:3px 3px 0 0;box-sizing:border-box"></div>
<div style="left:228px;top:1010px;width:10px;height:10px;background:#222;border:1px solid #ddd;box-sizing:border-box"></div>
<div style="left:243px;top:1007.50px;font-size:11.65px;line-height:14px;color:#333;font-family:'Liberation Sans',sans-serif;white-space:pre;transform:scaleX(1.0060);transform-origin:0 0;">Console</div>
<div style="left:1px;top:1022px;width:1276px;height:16px;background:#f1f1f1;"></div>
<div style="left:46px;top:1024px;width:776px;height:12px;background:#c1c1c1;"></div>
<svg style="left:5px;top:1025px;" width="6" height="10" viewBox="0 0 6 10"><path d="M5 0 V10 L0 5Z" fill="#505050"/></svg>
<svg style="left:1268px;top:1025px;" width="6" height="10" viewBox="0 0 6 10"><path d="M0 0 V10 L6 5Z" fill="#505050"/></svg>
<div style="left:1px;top:1038px;width:1276px;height:1px;background:#fff;"></div>
<div style="left:1px;top:111px;width:216px;height:911px;background:linear-gradient(to right,#f3f3f3 0,#f3f3f3 170px,#dadcde 216px)"></div>
<div style="left:217px;top:111px;width:3px;height:911px;background:#aaaaaa;"></div>
<div style="left:35px;top:113px;font-family:'Liberation Sans',sans-serif;font-weight:700;font-style:italic;font-size:24px;line-height:28px;white-space:pre;transform:scaleX(0.9606);transform-origin:0 0"><span style="color:#6c78af">php</span><span style="color:#f89c0e">MyAdmin</span></div>
<svg style="left:59px;top:148px;" width="15" height="13" viewBox="0 0 15 13"><path d="M1 7 L7.5 1 L14 7" stroke="#c0702a" stroke-width="2" fill="none"/><rect x="3" y="7" width="9" height="5" fill="#e8d8b0"/><rect x="6" y="8.5" width="3" height="3.5" fill="#8a6d3b"/><rect x="1" y="12" width="13" height="1" fill="#5a5"/></svg>
<svg style="left:77px;top:147px;" width="15" height="15" viewBox="0 0 15 15"><rect x="6" y="1" width="8" height="13" fill="#c88a3a"/><rect x="1" y="4" width="7" height="8" fill="#2d6b2d"/><path d="M2 8 H7" stroke="#6c6" stroke-width="2"/></svg>
<svg style="left:96px;top:148px;" width="13" height="13" viewBox="0 0 13 13"><circle cx="6.5" cy="6.5" r="6" fill="#5d8fd8"/><circle cx="6.5" cy="6.5" r="4.5" fill="#8fb8ee"/><text x="4" y="10" font-size="8" font-weight="700" font-family="Liberation Sans" fill="#fff">?</text></svg>
<svg style="left:113px;top:147px;" width="14" height="14" viewBox="0 0 14 14"><rect x="4" y="1" width="9" height="12" fill="#fff" stroke="#bbb"/><rect x="1" y="3" width="6" height="10" fill="#f4f4f4" stroke="#ccc"/></svg>
<svg style="left:130px;top:147px;" width="15" height="15" viewBox="0 0 15 15"><circle cx="7.5" cy="7.5" r="5.5" fill="none" stroke="#999" stroke-width="3" stroke-dasharray="2.2 1.3"/><circle cx="7.5" cy="7.5" r="3.2" fill="none" stroke="#aaa" stroke-width="2"/></svg>
<svg style="left:149px;top:148px;" width="13" height="13" viewBox="0 0 13 13"><path d="M11 6.5 A4.5 4.5 0 1 1 6.5 2" stroke="#3a9a3a" stroke-width="2.4" fill="none"/><path d="M5 0 L9 2.5 L5 5Z" fill="#3a9a3a"/></svg>
<div style="left:10px;top:167px;width:66px;height:16px;border:1px solid #ddd;border-radius:3px;box-sizing:border-box;background:#f3f3f3"></div>
<div style="left:15px;top:167.50px;font-size:11.65px;line-height:14px;color:#222;font-family:'Liberation Sans',sans-serif;white-space:pre;transform:scaleX(1.0003);transform-origin:0 0;">Recentelijk</div>
<div style="left:79px;top:167px;width:64px;height:16px;border:1px solid #ddd;border-radius:3px;box-sizing:border-box;background:#f3f3f3"></div>
<div style="left:84px;top:167.50px;font-size:11.65px;line-height:14px;color:#222;font-family:'Liberation Sans',sans-serif;white-space:pre;transform:scaleX(0.9992);transform-origin:0 0;">Favorieten</div>
<svg style="left:182px;top:188px;" width="14" height="8" viewBox="0 0 14 8"><ellipse cx="4.5" cy="4" rx="3.5" ry="3" stroke="#777" stroke-width="2" fill="none"/><ellipse cx="9.5" cy="4" rx="3.5" ry="3" stroke="#777" stroke-width="2" fill="none"/></svg>
<div style="left:24px;top:629px;width:192px;height:19px;background:#dcdcdc;"></div>
<div style="left:14px;top:218px;width:1px;height:449px;background:#777;"></div>
<div style="left:33px;top:218px;width:1px;height:438px;background:#777;"></div>
<div style="left:9px;top:206.5px;width:12px;height:12px;border-radius:3px;background:linear-gradient(#e8e8e8,#c8c8c8);border:1px solid #bbb;box-sizing:border-box"></div>
<div style="left:12px;top:212.0px;width:6px;height:2px;background:#777;"></div>
<div style="left:21px;top:213.5px;width:7px;height:1px;background:#777;"></div>
<svg style="left:27px;top:206.5px;" width="12" height="13" viewBox="0 0 12 13"><ellipse cx="6" cy="2.5" rx="5" ry="2" fill="#eee" stroke="#bbb"/><path d="M1 2.5 V10.5 A5 2 0 0 0 11 10.5 V2.5" fill="#e4e4e4" stroke="#bbb"/></svg>
<div style="left:44.5px;top:204.50px;font-size:11.65px;line-height:16px;color:#000;font-family:'Liberation Sans',sans-serif;white-space:pre;transform:scaleX(1.0100);transform-origin:0 0;">n939pa_c_sfi</div>
<div style="left:34px;top:233.85px;width:9px;height:1px;background:#777;"></div>
<svg style="left:44px;top:224.85px;" width="15" height="15" viewBox="0 0 15 15"><rect x="1" y="1" width="12" height="11" fill="#dbe6f5" stroke="#6b95d2"/><rect x="1" y="1" width="12" height="2.5" fill="#9acd9a"/><path d="M4 4 V12 M8 4 V12 M1 7 H13" stroke="#a9c1e6" stroke-width="1"/><circle cx="11.5" cy="11.5" r="3.3" fill="#5cae3a"/><path d="M11.5 9.8 V13.2 M9.8 11.5 H13.2" stroke="#fff" stroke-width="1.2"/></svg>
<div style="left:63.5px;top:223.85px;font-size:11.65px;line-height:16px;color:#000;font-family:'Liberation Sans',sans-serif;white-space:pre;transform:scaleX(0.9850);transform-origin:0 0;">Nieuw</div>
<div style="left:28px;top:244.7px;width:12px;height:12px;border-radius:3px;background:linear-gradient(#e8e8e8,#c8c8c8);border:1px solid #bbb;box-sizing:border-box"></div>
<div style="left:31px;top:250.2px;width:6px;height:1.6px;background:#666;"></div>
<div style="left:33.2px;top:248.0px;width:1.6px;height:6px;background:#666;"></div>
<div style="left:40px;top:252.2px;width:4px;height:1px;background:#777;"></div>
<svg style="left:44px;top:243.2px;" width="16" height="15" viewBox="0 0 16 15"><rect x="0.5" y="1.5" width="5" height="12.5" fill="#eef3fb" stroke="#6f9ad6" stroke-width="1"/><rect x="10.5" y="1.5" width="5" height="12.5" fill="#eef3fb" stroke="#6f9ad6" stroke-width="1"/><rect x="1" y="2" width="4" height="1.3" fill="#9bd08f"/><rect x="11" y="2" width="4" height="1.3" fill="#9bd08f"/><path d="M4.5 11 L7.5 8.5 L10.5 5.5" stroke="#4e9e45" stroke-width="2.2" fill="none" stroke-linecap="round"/></svg>
<div style="left:63.5px;top:243.20px;width:153px;height:16px;overflow:hidden;font-family:'Liberation Sans',sans-serif;font-size:11.65px;line-height:16px;color:#000;white-space:pre">bookings</div>
<div style="left:28px;top:264.1px;width:12px;height:12px;border-radius:3px;background:linear-gradient(#e8e8e8,#c8c8c8);border:1px solid #bbb;box-sizing:border-box"></div>
<div style="left:31px;top:269.55px;width:6px;height:1.6px;background:#666;"></div>
<div style="left:33.2px;top:267.35px;width:1.6px;height:6px;background:#666;"></div>
<div style="left:40px;top:271.55px;width:4px;height:1px;background:#777;"></div>
<svg style="left:44px;top:262.55px;" width="16" height="15" viewBox="0 0 16 15"><rect x="0.5" y="1.5" width="5" height="12.5" fill="#eef3fb" stroke="#6f9ad6" stroke-width="1"/><rect x="10.5" y="1.5" width="5" height="12.5" fill="#eef3fb" stroke="#6f9ad6" stroke-width="1"/><rect x="1" y="2" width="4" height="1.3" fill="#9bd08f"/><rect x="11" y="2" width="4" height="1.3" fill="#9bd08f"/><path d="M4.5 11 L7.5 8.5 L10.5 5.5" stroke="#4e9e45" stroke-width="2.2" fill="none" stroke-linecap="round"/></svg>
<div style="left:63.5px;top:262.55px;width:153px;height:16px;overflow:hidden;font-family:'Liberation Sans',sans-serif;font-size:11.65px;line-height:16px;color:#000;white-space:pre">charts</div>
<div style="left:28px;top:283.4px;width:12px;height:12px;border-radius:3px;background:linear-gradient(#e8e8e8,#c8c8c8);border:1px solid #bbb;box-sizing:border-box"></div>
<div style="left:31px;top:288.9px;width:6px;height:1.6px;background:#666;"></div>
<div style="left:33.2px;top:286.7px;width:1.6px;height:6px;background:#666;"></div>
<div style="left:40px;top:290.9px;width:4px;height:1px;background:#777;"></div>
<svg style="left:44px;top:281.9px;" width="16" height="15" viewBox="0 0 16 15"><rect x="0.5" y="1.5" width="5" height="12.5" fill="#eef3fb" stroke="#6f9ad6" stroke-width="1"/><rect x="10.5" y="1.5" width="5" height="12.5" fill="#eef3fb" stroke="#6f9ad6" stroke-width="1"/><rect x="1" y="2" width="4" height="1.3" fill="#9bd08f"/><rect x="11" y="2" width="4" height="1.3" fill="#9bd08f"/><path d="M4.5 11 L7.5 8.5 L10.5 5.5" stroke="#4e9e45" stroke-width="2.2" fill="none" stroke-linecap="round"/></svg>
<div style="left:63.5px;top:281.90px;width:153px;height:16px;overflow:hidden;font-family:'Liberation Sans',sans-serif;font-size:11.65px;line-height:16px;color:#000;white-space:pre">fuel_remaining</div>
<div style="left:28px;top:302.8px;width:12px;height:12px;border-radius:3px;background:linear-gradient(#e8e8e8,#c8c8c8);border:1px solid #bbb;box-sizing:border-box"></div>
<div style="left:31px;top:308.25px;width:6px;height:1.6px;background:#666;"></div>
<div style="left:33.2px;top:306.05px;width:1.6px;height:6px;background:#666;"></div>
<div style="left:40px;top:310.25px;width:4px;height:1px;background:#777;"></div>
<svg style="left:44px;top:301.25px;" width="16" height="15" viewBox="0 0 16 15"><rect x="0.5" y="1.5" width="5" height="12.5" fill="#eef3fb" stroke="#6f9ad6" stroke-width="1"/><rect x="10.5" y="1.5" width="5" height="12.5" fill="#eef3fb" stroke="#6f9ad6" stroke-width="1"/><rect x="1" y="2" width="4" height="1.3" fill="#9bd08f"/><rect x="11" y="2" width="4" height="1.3" fill="#9bd08f"/><path d="M4.5 11 L7.5 8.5 L10.5 5.5" stroke="#4e9e45" stroke-width="2.2" fill="none" stroke-linecap="round"/></svg>
<div style="left:63.5px;top:301.25px;width:153px;height:16px;overflow:hidden;font-family:'Liberation Sans',sans-serif;font-size:11.65px;line-height:16px;color:#000;white-space:pre">groups</div>
<div style="left:28px;top:322.1px;width:12px;height:12px;border-radius:3px;background:linear-gradient(#e8e8e8,#c8c8c8);border:1px solid #bbb;box-sizing:border-box"></div>
<div style="left:31px;top:327.6px;width:6px;height:1.6px;background:#666;"></div>
<div style="left:33.2px;top:325.40000000000003px;width:1.6px;height:6px;background:#666;"></div>
<div style="left:40px;top:329.6px;width:4px;height:1px;background:#777;"></div>
<svg style="left:44px;top:320.6px;" width="16" height="15" viewBox="0 0 16 15"><rect x="0.5" y="1.5" width="5" height="12.5" fill="#eef3fb" stroke="#6f9ad6" stroke-width="1"/><rect x="10.5" y="1.5" width="5" height="12.5" fill="#eef3fb" stroke="#6f9ad6" stroke-width="1"/><rect x="1" y="2" width="4" height="1.3" fill="#9bd08f"/><rect x="11" y="2" width="4" height="1.3" fill="#9bd08f"/><path d="M4.5 11 L7.5 8.5 L10.5 5.5" stroke="#4e9e45" stroke-width="2.2" fill="none" stroke-linecap="round"/></svg>
<div style="left:63.5px;top:320.60px;width:153px;height:16px;overflow:hidden;font-family:'Liberation Sans',sans-serif;font-size:11.65px;line-height:16px;color:#000;white-space:pre">L1OmHo0OR_commentmeta</div>
<div style="left:28px;top:341.5px;width:12px;height:12px;border-radius:3px;background:linear-gradient(#e8e8e8,#c8c8c8);border:1px solid #bbb;box-sizing:border-box"></div>
<div style="left:31px;top:346.95000000000005px;width:6px;height:1.6px;background:#666;"></div>
<div style="left:33.2px;top:344.75000000000006px;width:1.6px;height:6px;background:#666;"></div>
<div style="left:40px;top:348.95000000000005px;width:4px;height:1px;background:#777;"></div>
<svg style="left:44px;top:339.95000000000005px;" width="16" height="15" viewBox="0 0 16 15"><rect x="0.5" y="1.5" width="5" height="12.5" fill="#eef3fb" stroke="#6f9ad6" stroke-width="1"/><rect x="10.5" y="1.5" width="5" height="12.5" fill="#eef3fb" stroke="#6f9ad6" stroke-width="1"/><rect x="1" y="2" width="4" height="1.3" fill="#9bd08f"/><rect x="11" y="2" width="4" height="1.3" fill="#9bd08f"/><path d="M4.5 11 L7.5 8.5 L10.5 5.5" stroke="#4e9e45" stroke-width="2.2" fill="none" stroke-linecap="round"/></svg>
<div style="left:63.5px;top:339.95px;width:153px;height:16px;overflow:hidden;font-family:'Liberation Sans',sans-serif;font-size:11.65px;line-height:16px;color:#000;white-space:pre">L1OmHo0OR_comments</div>
<div style="left:28px;top:360.8px;width:12px;height:12px;border-radius:3px;background:linear-gradient(#e8e8e8,#c8c8c8);border:1px solid #bbb;box-sizing:border-box"></div>
<div style="left:31px;top:366.3px;width:6px;height:1.6px;background:#666;"></div>
<div style="left:33.2px;top:364.1px;width:1.6px;height:6px;background:#666;"></div>
<div style="left:40px;top:368.3px;width:4px;height:1px;background:#777;"></div>
<svg style="left:44px;top:359.3px;" width="16" height="15" viewBox="0 0 16 15"><rect x="0.5" y="1.5" width="5" height="12.5" fill="#eef3fb" stroke="#6f9ad6" stroke-width="1"/><rect x="10.5" y="1.5" width="5" height="12.5" fill="#eef3fb" stroke="#6f9ad6" stroke-width="1"/><rect x="1" y="2" width="4" height="1.3" fill="#9bd08f"/><rect x="11" y="2" width="4" height="1.3" fill="#9bd08f"/><path d="M4.5 11 L7.5 8.5 L10.5 5.5" stroke="#4e9e45" stroke-width="2.2" fill="none" stroke-linecap="round"/></svg>
<div style="left:63.5px;top:359.30px;width:153px;height:16px;overflow:hidden;font-family:'Liberation Sans',sans-serif;font-size:11.65px;line-height:16px;color:#000;white-space:pre">L1OmHo0OR_links</div>
<div style="left:28px;top:380.1px;width:12px;height:12px;border-radius:3px;background:linear-gradient(#e8e8e8,#c8c8c8);border:1px solid #bbb;box-sizing:border-box"></div>
<div style="left:31px;top:385.65px;width:6px;height:1.6px;background:#666;"></div>
<div style="left:33.2px;top:383.45px;width:1.6px;height:6px;background:#666;"></div>
<div style="left:40px;top:387.65px;width:4px;height:1px;background:#777;"></div>
<svg style="left:44px;top:378.65px;" width="16" height="15" viewBox="0 0 16 15"><rect x="0.5" y="1.5" width="5" height="12.5" fill="#eef3fb" stroke="#6f9ad6" stroke-width="1"/><rect x="10.5" y="1.5" width="5" height="12.5" fill="#eef3fb" stroke="#6f9ad6" stroke-width="1"/><rect x="1" y="2" width="4" height="1.3" fill="#9bd08f"/><rect x="11" y="2" width="4" height="1.3" fill="#9bd08f"/><path d="M4.5 11 L7.5 8.5 L10.5 5.5" stroke="#4e9e45" stroke-width="2.2" fill="none" stroke-linecap="round"/></svg>
<div style="left:63.5px;top:378.65px;width:153px;height:16px;overflow:hidden;font-family:'Liberation Sans',sans-serif;font-size:11.65px;line-height:16px;color:#000;white-space:pre">L1OmHo0OR_options</div>
<div style="left:28px;top:399.5px;width:12px;height:12px;border-radius:3px;background:linear-gradient(#e8e8e8,#c8c8c8);border:1px solid #bbb;box-sizing:border-box"></div>
<div style="left:31px;top:405.0px;width:6px;height:1.6px;background:#666;"></div>
<div style="left:33.2px;top:402.8px;width:1.6px;height:6px;background:#666;"></div>
<div style="left:40px;top:407.0px;width:4px;height:1px;background:#777;"></div>
<svg style="left:44px;top:398.0px;" width="16" height="15" viewBox="0 0 16 15"><rect x="0.5" y="1.5" width="5" height="12.5" fill="#eef3fb" stroke="#6f9ad6" stroke-width="1"/><rect x="10.5" y="1.5" width="5" height="12.5" fill="#eef3fb" stroke="#6f9ad6" stroke-width="1"/><rect x="1" y="2" width="4" height="1.3" fill="#9bd08f"/><rect x="11" y="2" width="4" height="1.3" fill="#9bd08f"/><path d="M4.5 11 L7.5 8.5 L10.5 5.5" stroke="#4e9e45" stroke-width="2.2" fill="none" stroke-linecap="round"/></svg>
<div style="left:63.5px;top:398.00px;width:153px;height:16px;overflow:hidden;font-family:'Liberation Sans',sans-serif;font-size:11.65px;line-height:16px;color:#000;white-space:pre">L1OmHo0OR_postmeta</div>
<div style="left:28px;top:418.9px;width:12px;height:12px;border-radius:3px;background:linear-gradient(#e8e8e8,#c8c8c8);border:1px solid #bbb;box-sizing:border-box"></div>
<div style="left:31px;top:424.35px;width:6px;height:1.6px;background:#666;"></div>
<div style="left:33.2px;top:422.15000000000003px;width:1.6px;height:6px;background:#666;"></div>
<div style="left:40px;top:426.35px;width:4px;height:1px;background:#777;"></div>
<svg style="left:44px;top:417.35px;" width="16" height="15" viewBox="0 0 16 15"><rect x="0.5" y="1.5" width="5" height="12.5" fill="#eef3fb" stroke="#6f9ad6" stroke-width="1"/><rect x="10.5" y="1.5" width="5" height="12.5" fill="#eef3fb" stroke="#6f9ad6" stroke-width="1"/><rect x="1" y="2" width="4" height="1.3" fill="#9bd08f"/><rect x="11" y="2" width="4" height="1.3" fill="#9bd08f"/><path d="M4.5 11 L7.5 8.5 L10.5 5.5" stroke="#4e9e45" stroke-width="2.2" fill="none" stroke-linecap="round"/></svg>
<div style="left:63.5px;top:417.35px;width:153px;height:16px;overflow:hidden;font-family:'Liberation Sans',sans-serif;font-size:11.65px;line-height:16px;color:#000;white-space:pre">L1OmHo0OR_posts</div>
<div style="left:28px;top:438.2px;width:12px;height:12px;border-radius:3px;background:linear-gradient(#e8e8e8,#c8c8c8);border:1px solid #bbb;box-sizing:border-box"></div>
<div style="left:31px;top:443.70000000000005px;width:6px;height:1.6px;background:#666;"></div>
<div style="left:33.2px;top:441.50000000000006px;width:1.6px;height:6px;background:#666;"></div>
<div style="left:40px;top:445.70000000000005px;width:4px;height:1px;background:#777;"></div>
<svg style="left:44px;top:436.70000000000005px;" width="16" height="15" viewBox="0 0 16 15"><rect x="0.5" y="1.5" width="5" height="12.5" fill="#eef3fb" stroke="#6f9ad6" stroke-width="1"/><rect x="10.5" y="1.5" width="5" height="12.5" fill="#eef3fb" stroke="#6f9ad6" stroke-width="1"/><rect x="1" y="2" width="4" height="1.3" fill="#9bd08f"/><rect x="11" y="2" width="4" height="1.3" fill="#9bd08f"/><path d="M4.5 11 L7.5 8.5 L10.5 5.5" stroke="#4e9e45" stroke-width="2.2" fill="none" stroke-linecap="round"/></svg>
<div style="left:63.5px;top:436.70px;width:153px;height:16px;overflow:hidden;font-family:'Liberation Sans',sans-serif;font-size:11.65px;line-height:16px;color:#000;white-space:pre">L1OmHo0OR_termmeta</div>
<div style="left:28px;top:457.6px;width:12px;height:12px;border-radius:3px;background:linear-gradient(#e8e8e8,#c8c8c8);border:1px solid #bbb;box-sizing:border-box"></div>
<div style="left:31px;top:463.05px;width:6px;height:1.6px;background:#666;"></div>
<div style="left:33.2px;top:460.85px;width:1.6px;height:6px;background:#666;"></div>
<div style="left:40px;top:465.05px;width:4px;height:1px;background:#777;"></div>
<svg style="left:44px;top:456.05px;" width="16" height="15" viewBox="0 0 16 15"><rect x="0.5" y="1.5" width="5" height="12.5" fill="#eef3fb" stroke="#6f9ad6" stroke-width="1"/><rect x="10.5" y="1.5" width="5" height="12.5" fill="#eef3fb" stroke="#6f9ad6" stroke-width="1"/><rect x="1" y="2" width="4" height="1.3" fill="#9bd08f"/><rect x="11" y="2" width="4" height="1.3" fill="#9bd08f"/><path d="M4.5 11 L7.5 8.5 L10.5 5.5" stroke="#4e9e45" stroke-width="2.2" fill="none" stroke-linecap="round"/></svg>
<div style="left:63.5px;top:456.05px;width:153px;height:16px;overflow:hidden;font-family:'Liberation Sans',sans-serif;font-size:11.65px;line-height:16px;color:#000;white-space:pre">L1OmHo0OR_terms</div>
<div style="left:28px;top:476.9px;width:12px;height:12px;border-radius:3px;background:linear-gradient(#e8e8e8,#c8c8c8);border:1px solid #bbb;box-sizing:border-box"></div>
<div style="left:31px;top:482.40000000000003px;width:6px;height:1.6px;background:#666;"></div>
<div style="left:33.2px;top:480.20000000000005px;width:1.6px;height:6px;background:#666;"></div>
<div style="left:40px;top:484.40000000000003px;width:4px;height:1px;background:#777;"></div>
<svg style="left:44px;top:475.40000000000003px;" width="16" height="15" viewBox="0 0 16 15"><rect x="0.5" y="1.5" width="5" height="12.5" fill="#eef3fb" stroke="#6f9ad6" stroke-width="1"/><rect x="10.5" y="1.5" width="5" height="12.5" fill="#eef3fb" stroke="#6f9ad6" stroke-width="1"/><rect x="1" y="2" width="4" height="1.3" fill="#9bd08f"/><rect x="11" y="2" width="4" height="1.3" fill="#9bd08f"/><path d="M4.5 11 L7.5 8.5 L10.5 5.5" stroke="#4e9e45" stroke-width="2.2" fill="none" stroke-linecap="round"/></svg>
<div style="left:63.5px;top:475.40px;width:153px;height:16px;overflow:hidden;font-family:'Liberation Sans',sans-serif;font-size:11.65px;line-height:16px;color:#000;white-space:pre">L1OmHo0OR_term_relations</div>
<div style="left:28px;top:496.2px;width:12px;height:12px;border-radius:3px;background:linear-gradient(#e8e8e8,#c8c8c8);border:1px solid #bbb;box-sizing:border-box"></div>
<div style="left:31px;top:501.75px;width:6px;height:1.6px;background:#666;"></div>
<div style="left:33.2px;top:499.55px;width:1.6px;height:6px;background:#666;"></div>
<div style="left:40px;top:503.75px;width:4px;height:1px;background:#777;"></div>
<svg style="left:44px;top:494.75px;" width="16" height="15" viewBox="0 0 16 15"><rect x="0.5" y="1.5" width="5" height="12.5" fill="#eef3fb" stroke="#6f9ad6" stroke-width="1"/><rect x="10.5" y="1.5" width="5" height="12.5" fill="#eef3fb" stroke="#6f9ad6" stroke-width="1"/><rect x="1" y="2" width="4" height="1.3" fill="#9bd08f"/><rect x="11" y="2" width="4" height="1.3" fill="#9bd08f"/><path d="M4.5 11 L7.5 8.5 L10.5 5.5" stroke="#4e9e45" stroke-width="2.2" fill="none" stroke-linecap="round"/></svg>
<div style="left:63.5px;top:494.75px;width:153px;height:16px;overflow:hidden;font-family:'Liberation Sans',sans-serif;font-size:11.65px;line-height:16px;color:#000;white-space:pre">L1OmHo0OR_term_taxonom</div>
<div style="left:28px;top:515.6px;width:12px;height:12px;border-radius:3px;background:linear-gradient(#e8e8e8,#c8c8c8);border:1px solid #bbb;box-sizing:border-box"></div>
<div style="left:31px;top:521.1px;width:6px;height:1.6px;background:#666;"></div>
<div style="left:33.2px;top:518.9px;width:1.6px;height:6px;background:#666;"></div>
<div style="left:40px;top:523.1px;width:4px;height:1px;background:#777;"></div>
<svg style="left:44px;top:514.1px;" width="16" height="15" viewBox="0 0 16 15"><rect x="0.5" y="1.5" width="5" height="12.5" fill="#eef3fb" stroke="#6f9ad6" stroke-width="1"/><rect x="10.5" y="1.5" width="5" height="12.5" fill="#eef3fb" stroke="#6f9ad6" stroke-width="1"/><rect x="1" y="2" width="4" height="1.3" fill="#9bd08f"/><rect x="11" y="2" width="4" height="1.3" fill="#9bd08f"/><path d="M4.5 11 L7.5 8.5 L10.5 5.5" stroke="#4e9e45" stroke-width="2.2" fill="none" stroke-linecap="round"/></svg>
<div style="left:63.5px;top:514.10px;width:153px;height:16px;overflow:hidden;font-family:'Liberation Sans',sans-serif;font-size:11.65px;line-height:16px;color:#000;white-space:pre">L1OmHo0OR_usermeta</div>
<div style="left:28px;top:535.0px;width:12px;height:12px;border-radius:3px;background:linear-gradient(#e8e8e8,#c8c8c8);border:1px solid #bbb;box-sizing:border-box"></div>
<div style="left:31px;top:540.45px;width:6px;height:1.6px;background:#666;"></div>
<div style="left:33.2px;top:538.25px;width:1.6px;height:6px;background:#666;"></div>
<div style="left:40px;top:542.45px;width:4px;height:1px;background:#777;"></div>
<svg style="left:44px;top:533.45px;" width="16" height="15" viewBox="0 0 16 15"><rect x="0.5" y="1.5" width="5" height="12.5" fill="#eef3fb" stroke="#6f9ad6" stroke-width="1"/><rect x="10.5" y="1.5" width="5" height="12.5" fill="#eef3fb" stroke="#6f9ad6" stroke-width="1"/><rect x="1" y="2" width="4" height="1.3" fill="#9bd08f"/><rect x="11" y="2" width="4" height="1.3" fill="#9bd08f"/><path d="M4.5 11 L7.5 8.5 L10.5 5.5" stroke="#4e9e45" stroke-width="2.2" fill="none" stroke-linecap="round"/></svg>
<div style="left:63.5px;top:533.45px;width:153px;height:16px;overflow:hidden;font-family:'Liberation Sans',sans-serif;font-size:11.65px;line-height:16px;color:#000;white-space:pre">L1OmHo0OR_users</div>
<div style="left:28px;top:554.3px;width:12px;height:12px;border-radius:3px;background:linear-gradient(#e8e8e8,#c8c8c8);border:1px solid #bbb;box-sizing:border-box"></div>
<div style="left:31px;top:559.8px;width:6px;height:1.6px;background:#666;"></div>
<div style="left:33.2px;top:557.5999999999999px;width:1.6px;height:6px;background:#666;"></div>
<div style="left:40px;top:561.8px;width:4px;height:1px;background:#777;"></div>
<svg style="left:44px;top:552.8px;" width="16" height="15" viewBox="0 0 16 15"><rect x="0.5" y="1.5" width="5" height="12.5" fill="#eef3fb" stroke="#6f9ad6" stroke-width="1"/><rect x="10.5" y="1.5" width="5" height="12.5" fill="#eef3fb" stroke="#6f9ad6" stroke-width="1"/><rect x="1" y="2" width="4" height="1.3" fill="#9bd08f"/><rect x="11" y="2" width="4" height="1.3" fill="#9bd08f"/><path d="M4.5 11 L7.5 8.5 L10.5 5.5" stroke="#4e9e45" stroke-width="2.2" fill="none" stroke-linecap="round"/></svg>
<div style="left:63.5px;top:552.80px;width:153px;height:16px;overflow:hidden;font-family:'Liberation Sans',sans-serif;font-size:11.65px;line-height:16px;color:#000;white-space:pre">logbook</div>
<div style="left:28px;top:573.7px;width:12px;height:12px;border-radius:3px;background:linear-gradient(#e8e8e8,#c8c8c8);border:1px solid #bbb;box-sizing:border-box"></div>
<div style="left:31px;top:579.1500000000001px;width:6px;height:1.6px;background:#666;"></div>
<div style="left:33.2px;top:576.95px;width:1.6px;height:6px;background:#666;"></div>
<div style="left:40px;top:581.1500000000001px;width:4px;height:1px;background:#777;"></div>
<svg style="left:44px;top:572.1500000000001px;" width="16" height="15" viewBox="0 0 16 15"><rect x="0.5" y="1.5" width="5" height="12.5" fill="#eef3fb" stroke="#6f9ad6" stroke-width="1"/><rect x="10.5" y="1.5" width="5" height="12.5" fill="#eef3fb" stroke="#6f9ad6" stroke-width="1"/><rect x="1" y="2" width="4" height="1.3" fill="#9bd08f"/><rect x="11" y="2" width="4" height="1.3" fill="#9bd08f"/><path d="M4.5 11 L7.5 8.5 L10.5 5.5" stroke="#4e9e45" stroke-width="2.2" fill="none" stroke-linecap="round"/></svg>
<div style="left:63.5px;top:572.15px;width:153px;height:16px;overflow:hidden;font-family:'Liberation Sans',sans-serif;font-size:11.65px;line-height:16px;color:#000;white-space:pre">navdata</div>
<div style="left:28px;top:593.0px;width:12px;height:12px;border-radius:3px;background:linear-gradient(#e8e8e8,#c8c8c8);border:1px solid #bbb;box-sizing:border-box"></div>
<div style="left:31px;top:598.5px;width:6px;height:1.6px;background:#666;"></div>
<div style="left:33.2px;top:596.3px;width:1.6px;height:6px;background:#666;"></div>
<div style="left:40px;top:600.5px;width:4px;height:1px;background:#777;"></div>
<svg style="left:44px;top:591.5px;" width="16" height="15" viewBox="0 0 16 15"><rect x="0.5" y="1.5" width="5" height="12.5" fill="#eef3fb" stroke="#6f9ad6" stroke-width="1"/><rect x="10.5" y="1.5" width="5" height="12.5" fill="#eef3fb" stroke="#6f9ad6" stroke-width="1"/><rect x="1" y="2" width="4" height="1.3" fill="#9bd08f"/><rect x="11" y="2" width="4" height="1.3" fill="#9bd08f"/><path d="M4.5 11 L7.5 8.5 L10.5 5.5" stroke="#4e9e45" stroke-width="2.2" fill="none" stroke-linecap="round"/></svg>
<div style="left:63.5px;top:591.50px;width:153px;height:16px;overflow:hidden;font-family:'Liberation Sans',sans-serif;font-size:11.65px;line-height:16px;color:#000;white-space:pre">squawks</div>
<div style="left:28px;top:612.4px;width:12px;height:12px;border-radius:3px;background:linear-gradient(#e8e8e8,#c8c8c8);border:1px solid #bbb;box-sizing:border-box"></div>
<div style="left:31px;top:617.85px;width:6px;height:1.6px;background:#666;"></div>
<div style="left:33.2px;top:615.65px;width:1.6px;height:6px;background:#666;"></div>
<div style="left:40px;top:619.85px;width:4px;height:1px;background:#777;"></div>
<svg style="left:44px;top:610.85px;" width="16" height="15" viewBox="0 0 16 15"><rect x="0.5" y="1.5" width="5" height="12.5" fill="#eef3fb" stroke="#6f9ad6" stroke-width="1"/><rect x="10.5" y="1.5" width="5" height="12.5" fill="#eef3fb" stroke="#6f9ad6" stroke-width="1"/><rect x="1" y="2" width="4" height="1.3" fill="#9bd08f"/><rect x="11" y="2" width="4" height="1.3" fill="#9bd08f"/><path d="M4.5 11 L7.5 8.5 L10.5 5.5" stroke="#4e9e45" stroke-width="2.2" fill="none" stroke-linecap="round"/></svg>
<div style="left:63.5px;top:610.85px;width:153px;height:16px;overflow:hidden;font-family:'Liberation Sans',sans-serif;font-size:11.65px;line-height:16px;color:#000;white-space:pre">uploads</div>
<div style="left:28px;top:631.7px;width:12px;height:12px;border-radius:3px;background:linear-gradient(#e8e8e8,#c8c8c8);border:1px solid #bbb;box-sizing:border-box"></div>
<div style="left:31px;top:637.2px;width:6px;height:1.6px;background:#666;"></div>
<div style="left:33.2px;top:635.0px;width:1.6px;height:6px;background:#666;"></div>
<div style="left:40px;top:639.2px;width:4px;height:1px;background:#777;"></div>
<svg style="left:44px;top:630.2px;" width="16" height="15" viewBox="0 0 16 15"><rect x="0.5" y="1.5" width="5" height="12.5" fill="#eef3fb" stroke="#6f9ad6" stroke-width="1"/><rect x="10.5" y="1.5" width="5" height="12.5" fill="#eef3fb" stroke="#6f9ad6" stroke-width="1"/><rect x="1" y="2" width="4" height="1.3" fill="#9bd08f"/><rect x="11" y="2" width="4" height="1.3" fill="#9bd08f"/><path d="M4.5 11 L7.5 8.5 L10.5 5.5" stroke="#4e9e45" stroke-width="2.2" fill="none" stroke-linecap="round"/></svg>
<div style="left:63.5px;top:630.20px;width:153px;height:16px;overflow:hidden;font-family:'Liberation Sans',sans-serif;font-size:11.65px;line-height:16px;color:#000;white-space:pre">users</div>
<div style="left:28px;top:651.0px;width:12px;height:12px;border-radius:3px;background:linear-gradient(#e8e8e8,#c8c8c8);border:1px solid #bbb;box-sizing:border-box"></div>
<div style="left:31px;top:656.55px;width:6px;height:1.6px;background:#666;"></div>
<div style="left:33.2px;top:654.3499999999999px;width:1.6px;height:6px;background:#666;"></div>
<div style="left:40px;top:658.55px;width:4px;height:1px;background:#777;"></div>
<svg style="left:44px;top:649.55px;" width="16" height="15" viewBox="0 0 16 15"><rect x="0.5" y="1.5" width="5" height="12.5" fill="#eef3fb" stroke="#6f9ad6" stroke-width="1"/><rect x="10.5" y="1.5" width="5" height="12.5" fill="#eef3fb" stroke="#6f9ad6" stroke-width="1"/><rect x="1" y="2" width="4" height="1.3" fill="#9bd08f"/><rect x="11" y="2" width="4" height="1.3" fill="#9bd08f"/><path d="M4.5 11 L7.5 8.5 L10.5 5.5" stroke="#4e9e45" stroke-width="2.2" fill="none" stroke-linecap="round"/></svg>
<div style="left:63.5px;top:649.55px;width:153px;height:16px;overflow:hidden;font-family:'Liberation Sans',sans-serif;font-size:11.65px;line-height:16px;color:#000;white-space:pre">users_session</div>
<div style="left:0px;top:0px;width:1277px;height:43px;background:#dee1e6;"></div>
<div style="left:0px;top:0px;width:1277px;height:1px;background:#8a8a8a;"></div>
<div style="left:0px;top:0px;width:1px;height:1040px;background:#3d3d3d;"></div>
<div style="left:270px;top:9px;width:133px;height:34px;background:#fff;border-radius:8px 8px 0 0"></div>
<svg style="left:262px;top:35px;" width="8" height="8" viewBox="0 0 8 8"><path d="M0 8 Q8 8 8 0 L8 8 Z" fill="#fff"/></svg>
<svg style="left:403px;top:35px;" width="8" height="8" viewBox="0 0 8 8"><path d="M8 8 Q0 8 0 0 L0 8 Z" fill="#fff"/></svg>
<div style="left:22px;top:18px;width:14px;height:14px;background:#7289da;border-radius:3px"></div>
<div style="left:30px;top:24px;width:9px;height:9px;border-radius:50%;background:#e00;border:1px solid #fff;box-sizing:border-box"></div>
<div style="left:45px;top:17px;width:70px;height:18px;overflow:hidden;font-family:'Liberation Sans',sans-serif;font-size:12.3px;line-height:18px;color:#3c4043;white-space:pre;-webkit-mask-image:linear-gradient(to right,#000 75%,transparent 100%)">@Sem | Sqe</div>
<svg style="left:119px;top:20px;" width="12" height="12" viewBox="0 0 12 12"><path d="M2 2 L10 10 M10 2 L2 10" stroke="#5f6368" stroke-width="1.5"/></svg>
<div style="left:140px;top:17px;width:1px;height:19px;background:#8d9096;"></div>
<svg style="left:153px;top:18px;" width="15" height="15" viewBox="0 0 15 15"><circle cx="7.5" cy="7.5" r="6.5" fill="#5f6368"/><path d="M3 4 Q6 5 5 8 Q8 9 7 13 M10 2 Q9 5 12 6" stroke="#dee1e6" stroke-width="1.6" fill="none"/></svg>
<div style="left:176px;top:17px;width:70px;height:18px;overflow:hidden;font-family:'Liberation Sans',sans-serif;font-size:12.3px;line-height:18px;color:#3c4043;white-space:pre;-webkit-mask-image:linear-gradient(to right,#000 75%,transparent 100%)">N393PA - PD</div>
<svg style="left:250px;top:20px;" width="12" height="12" viewBox="0 0 12 12"><path d="M2 2 L10 10 M10 2 L2 10" stroke="#5f6368" stroke-width="1.5"/></svg>
<svg style="left:283px;top:18px;" width="17" height="16" viewBox="0 0 17 16"><path d="M2 13 L6 2 L7 13 Z M6 13 L10 1 L11 13Z M10 13 L13 3 L16 13Z" fill="#f89c0e"/><text x="1" y="15.5" font-size="5" font-family="Liberation Sans" font-weight="700" fill="#2d3a8c">PMA</text></svg>
<div style="left:307px;top:17px;width:70px;height:18px;overflow:hidden;font-family:'Liberation Sans',sans-serif;font-size:12.3px;line-height:18px;color:#3c4043;white-space:pre;-webkit-mask-image:linear-gradient(to right,#000 75%,transparent 100%)">server007.yo</div>
<svg style="left:381px;top:20px;" width="12" height="12" viewBox="0 0 12 12"><path d="M2 2 L10 10 M10 2 L2 10" stroke="#5f6368" stroke-width="1.5"/></svg>
<svg style="left:415px;top:19px;" width="15" height="12" viewBox="0 0 15 12"><path d="M1 12 V1 L7.5 7 L14 1 V12" stroke="#d93025" stroke-width="2.4" fill="none"/></svg>
<div style="left:438px;top:17px;width:70px;height:18px;overflow:hidden;font-family:'Liberation Sans',sans-serif;font-size:12.3px;line-height:18px;color:#3c4043;white-space:pre;-webkit-mask-image:linear-gradient(to right,#000 75%,transparent 100%)">Inbox - maxs</div>
<svg style="left:512px;top:20px;" width="12" height="12" viewBox="0 0 12 12"><path d="M2 2 L10 10 M10 2 L2 10" stroke="#5f6368" stroke-width="1.5"/></svg>
<div style="left:533px;top:17px;width:1px;height:19px;background:#8d9096;"></div>
<svg style="left:545px;top:18px;" width="16" height="16" viewBox="0 0 16 16"><circle cx="8" cy="8" r="7.5" fill="#fff"/><path d="M12.5 8 H8 M12.5 8 A4.6 4.6 0 1 1 11.2 4.6" stroke="#4285f4" stroke-width="2.2" fill="none"/><path d="M4 5 A4.6 4.6 0 0 0 4.2 11" stroke="#fbbc05" stroke-width="2.2" fill="none"/><path d="M4.2 11 A4.6 4.6 0 0 0 11.5 11" stroke="#34a853" stroke-width="2.2" fill="none"/><path d="M4 5 A4.6 4.6 0 0 1 11.2 4.6" stroke="#ea4335" stroke-width="2.2" fill="none"/></svg>
<div style="left:569px;top:17px;width:70px;height:18px;overflow:hidden;font-family:'Liberation Sans',sans-serif;font-size:12.3px;line-height:18px;color:#3c4043;white-space:pre;-webkit-mask-image:linear-gradient(to right,#000 75%,transparent 100%)">google verta</div>
<svg style="left:643px;top:20px;" width="12" height="12" viewBox="0 0 12 12"><path d="M2 2 L10 10 M10 2 L2 10" stroke="#5f6368" stroke-width="1.5"/></svg>
<div style="left:665px;top:17px;width:1px;height:19px;background:#8d9096;"></div>
<svg style="left:677px;top:18px;" width="14" height="15" viewBox="0 0 14 15"><path d="M1 9 V14 H12 V9" stroke="#bcbbbb" stroke-width="1.4" fill="none"/><path d="M3 11 H10 M3.5 8.5 L10 9.5 M4.5 6 L10.5 8 M6 3.5 L11 6.5 M8 1.5 L12 5" stroke="#f48024" stroke-width="1.4"/></svg>
<div style="left:700px;top:17px;width:70px;height:18px;overflow:hidden;font-family:'Liberation Sans',sans-serif;font-size:12.3px;line-height:18px;color:#3c4043;white-space:pre;-webkit-mask-image:linear-gradient(to right,#000 75%,transparent 100%)">php - How t</div>
<svg style="left:774px;top:20px;" width="12" height="12" viewBox="0 0 12 12"><path d="M2 2 L10 10 M10 2 L2 10" stroke="#5f6368" stroke-width="1.5"/></svg>
<div style="left:795px;top:17px;width:1px;height:19px;background:#8d9096;"></div>
<svg style="left:807px;top:18px;" width="16" height="16" viewBox="0 0 16 16"><circle cx="8" cy="8" r="7.5" fill="#fff"/><path d="M12.5 8 H8 M12.5 8 A4.6 4.6 0 1 1 11.2 4.6" stroke="#4285f4" stroke-width="2.2" fill="none"/><path d="M4 5 A4.6 4.6 0 0 0 4.2 11" stroke="#fbbc05" stroke-width="2.2" fill="none"/><path d="M4.2 11 A4.6 4.6 0 0 0 11.5 11" stroke="#34a853" stroke-width="2.2" fill="none"/><path d="M4 5 A4.6 4.6 0 0 1 11.2 4.6" stroke="#ea4335" stroke-width="2.2" fill="none"/></svg>
<div style="left:831px;top:17px;width:70px;height:18px;overflow:hidden;font-family:'Liberation Sans',sans-serif;font-size:12.3px;line-height:18px;color:#3c4043;white-space:pre;-webkit-mask-image:linear-gradient(to right,#000 75%,transparent 100%)">15*8 - Goog</div>
<svg style="left:904px;top:20px;" width="12" height="12" viewBox="0 0 12 12"><path d="M2 2 L10 10 M10 2 L2 10" stroke="#5f6368" stroke-width="1.5"/></svg>
<div style="left:925px;top:17px;width:1px;height:19px;background:#8d9096;"></div>
<div style="left:937px;top:17.00px;font-size:12.3px;line-height:18px;color:#3c4043;font-family:'Liberation Sans',sans-serif;white-space:pre;">Nieuw tabblad</div>
<svg style="left:1034px;top:20px;" width="12" height="12" viewBox="0 0 12 12"><path d="M2 2 L10 10 M10 2 L2 10" stroke="#5f6368" stroke-width="1.5"/></svg>
<div style="left:1055px;top:17px;width:1px;height:19px;background:#8d9096;"></div>
<div style="left:140px;top:17px;width:1px;height:19px;background:#8d9096;"></div>
<svg style="left:1071px;top:19px;" width="14" height="14" viewBox="0 0 14 14"><path d="M7 1 V13 M1 7 H13" stroke="#5f6368" stroke-width="1.8"/></svg>
<div style="left:1158px;top:15px;width:11px;height:1px;background:#3c4043;"></div>
<div style="left:1205px;top:10px;width:10px;height:10px;background:transparent;border:1px solid #3c4043;box-sizing:border-box"></div>
<svg style="left:1250px;top:9px;" width="12" height="12" viewBox="0 0 12 12"><path d="M1 1 L11 11 M11 1 L1 11" stroke="#5f6368" stroke-width="1"/></svg>
<div style="left:1px;top:43px;width:1276px;height:68px;background:#fff;"></div>
<svg style="left:16px;top:54px;" width="15" height="14" viewBox="0 0 15 14"><path d="M14 7 H2 M7 1.5 L1.5 7 L7 12.5" stroke="#5f6368" stroke-width="1.8" fill="none"/></svg>
<svg style="left:48px;top:54px;" width="15" height="14" viewBox="0 0 15 14"><path d="M1 7 H13 M8 1.5 L13.5 7 L8 12.5" stroke="#bdc1c6" stroke-width="1.8" fill="none"/></svg>
<svg style="left:80px;top:54px;" width="15" height="15" viewBox="0 0 15 15"><path d="M12.5 7.5 A5.3 5.3 0 1 1 10.8 3.6" stroke="#5f6368" stroke-width="1.8" fill="none"/><path d="M9 1 H13.5 V5.5 Z" fill="#5f6368"/></svg>
<div style="left:109px;top:47px;width:922px;height:28px;background:#f1f3f4;border-radius:14px"></div>
<svg style="left:122px;top:55px;" width="10" height="12" viewBox="0 0 10 12"><rect x="1" y="5" width="8" height="6.5" fill="#5f6368"/><path d="M2.8 5 V3.5 A2.2 2.2 0 0 1 7.2 3.5 V5" stroke="#5f6368" stroke-width="1.4" fill="none"/></svg>
<div style="left:143px;top:53px;font-family:'Liberation Sans',sans-serif;font-size:14.3px;line-height:18px;white-space:pre;transform:scaleX(0.9812);transform-origin:0 0"><span style="color:#202124">server007.yourhosting.nl</span><span style="color:#5f6368">:8443/domains/databases/phpMyAdmin/sql.php?server=1&amp;db=n939pa_c_sfi&amp;table=users&amp;pos=0</span></div>
<svg style="left:972px;top:53px;" width="16" height="16" viewBox="0 0 16 16"><circle cx="6.5" cy="6.5" r="5" stroke="#5f6368" stroke-width="1.6" fill="none"/><path d="M10 10 L15 15 M4 6.5 H9" stroke="#5f6368" stroke-width="1.6"/></svg>
<svg style="left:1004px;top:53px;" width="16" height="16" viewBox="0 0 16 16"><path d="M8 1.5 L9.9 6 L14.7 6.3 L11 9.4 L12.2 14.2 L8 11.6 L3.8 14.2 L5 9.4 L1.3 6.3 L6.1 6 Z" stroke="#5f6368" stroke-width="1.4" fill="none" stroke-linejoin="round"/></svg>
<svg style="left:1043px;top:52px;" width="18" height="18" viewBox="0 0 18 18"><path d="M5.5 1 H12.5 L17 5.5 V12.5 L12.5 17 H5.5 L1 12.5 V5.5 Z" fill="#d81e1e"/><text x="2.3" y="12" font-size="7" font-weight="700" font-family="Liberation Sans" fill="#fff">ABP</text></svg>
<svg style="left:1075px;top:52px;" width="18" height="18" viewBox="0 0 18 18"><path d="M2 2 H14 L16 16 H3 Z" fill="#2d7ff0"/><path d="M5 8 L10 12 L14 8 V14 H6" fill="#fff"/></svg>
<svg style="left:1107px;top:52px;" width="18" height="18" viewBox="0 0 18 18"><path d="M1 3 Q1 1 3 1 H13 Q17 5 17 9 Q17 13 13 17 H3 Q1 17 1 15Z" fill="#2b9af3"/><text x="3" y="14" font-size="11" font-weight="700" font-family="Liberation Sans" fill="#fff">FI</text></svg>
<svg style="left:1139px;top:51px;" width="22" height="22" viewBox="0 0 22 22"><rect x="1" y="2" width="16" height="14" rx="2" fill="#d91f26"/><circle cx="5" cy="7" r="1.3" fill="#fff"/><circle cx="9" cy="7" r="1.3" fill="#fff"/><circle cx="13" cy="7" r="1.3" fill="#fff"/><rect x="11" y="12" width="10" height="10" rx="2" fill="#3c4043"/><text x="13.5" y="20.5" font-size="9" font-weight="700" font-family="Liberation Sans" fill="#fff">1</text></svg>
<svg style="left:1168px;top:52px;" width="22" height="18" viewBox="0 0 22 18"><path d="M6 1.5 H20 M4 9 H20 M7 16.5 H20" stroke="#3a57d6" stroke-width="1.8"/><path d="M1 5.5 H15 M5 12.5 H16" stroke="#f0504a" stroke-width="1.8"/></svg>
<div style="left:1202px;top:54px;width:1px;height:15px;background:#dadce0;"></div>
<svg style="left:1215px;top:50px;" width="22" height="22" viewBox="0 0 22 22"><circle cx="11" cy="12" r="9" fill="#6ab33f"/><path d="M4 6 Q11 0 18 6 L17 12 H5Z" fill="#4b8f2a"/><rect x="8" y="9" width="9" height="6" fill="#263238"/><rect x="9" y="10" width="3" height="2" fill="#fff"/></svg>
<div style="left:1256px;top:55px;width:3.5px;height:3.5px;border-radius:50%;background:#5f6368"></div>
<div style="left:1256px;top:60px;width:3.5px;height:3.5px;border-radius:50%;background:#5f6368"></div>
<div style="left:1256px;top:65px;width:3.5px;height:3.5px;border-radius:50%;background:#5f6368"></div>
<div style="left:16px;top:87px;width:3px;height:3px;background:#ea4335;"></div>
<div style="left:21px;top:87px;width:3px;height:3px;background:#ea4335;"></div>
<div style="left:26px;top:87px;width:3px;height:3px;background:#ea4335;"></div>
<div style="left:16px;top:92px;width:3px;height:3px;background:#34a853;"></div>
<div style="left:21px;top:92px;width:3px;height:3px;background:#4285f4;"></div>
<div style="left:26px;top:92px;width:3px;height:3px;background:#fbbc05;"></div>
<div style="left:16px;top:97px;width:3px;height:3px;background:#34a853;"></div>
<div style="left:21px;top:97px;width:3px;height:3px;background:#fbbc05;"></div>
<div style="left:26px;top:97px;width:3px;height:3px;background:#fbbc05;"></div>
<div style="left:39px;top:84.00px;font-size:12.3px;line-height:18px;color:#3c4043;font-family:'Liberation Sans',sans-serif;white-space:pre;transform:scaleX(0.9630);transform-origin:0 0;">Apps</div>
<div style="left:106px;top:84.00px;font-size:12.3px;line-height:18px;color:#3c4043;font-family:'Liberation Sans',sans-serif;white-space:pre;transform:scaleX(0.9581);transform-origin:0 0;">Google</div>
<div style="left:185px;top:84.00px;font-size:12.3px;line-height:18px;color:#3c4043;font-family:'Liberation Sans',sans-serif;white-space:pre;transform:scaleX(0.9349);transform-origin:0 0;">3FM</div>
<div style="left:252px;top:84.00px;font-size:12.3px;line-height:18px;color:#3c4043;font-family:'Liberation Sans',sans-serif;white-space:pre;transform:scaleX(0.9517);transform-origin:0 0;">Eduarte</div>
<div style="left:333px;top:84.00px;font-size:12.3px;line-height:18px;color:#3c4043;font-family:'Liberation Sans',sans-serif;white-space:pre;transform:scaleX(0.9463);transform-origin:0 0;">KaasHosting</div>
<div style="left:439px;top:84.00px;font-size:12.3px;line-height:18px;color:#3c4043;font-family:'Liberation Sans',sans-serif;white-space:pre;transform:scaleX(0.9541);transform-origin:0 0;">Wordpress Hierarchy</div>
<div style="left:622px;top:84.00px;font-size:12.3px;line-height:18px;color:#3c4043;font-family:'Liberation Sans',sans-serif;white-space:pre;transform:scaleX(0.9782);transform-origin:0 0;">Home - 2lemon Ho...</div>
<div style="left:776px;top:84.00px;font-size:12.3px;line-height:18px;color:#3c4043;font-family:'Liberation Sans',sans-serif;white-space:pre;transform:scaleX(0.9752);transform-origin:0 0;">Omgeving Geert</div>
<div style="left:904px;top:84.00px;font-size:12.3px;line-height:18px;color:#3c4043;font-family:'Liberation Sans',sans-serif;white-space:pre;transform:scaleX(0.9200);transform-origin:0 0;">WHMCS</div>
<div style="left:989px;top:84.00px;font-size:12.3px;line-height:18px;color:#3c4043;font-family:'Liberation Sans',sans-serif;white-space:pre;transform:scaleX(0.9354);transform-origin:0 0;">Discord</div>
<div style="left:1070px;top:84.00px;font-size:12.3px;line-height:18px;color:#3c4043;font-family:'Liberation Sans',sans-serif;white-space:pre;transform:scaleX(0.9148);transform-origin:0 0;">Reisplanner | Reisinf...</div>
<svg style="left:82px;top:85px;" width="16" height="16" viewBox="0 0 16 16"><circle cx="8" cy="8" r="7.5" fill="#fff"/><path d="M12.5 8 H8 M12.5 8 A4.6 4.6 0 1 1 11.2 4.6" stroke="#4285f4" stroke-width="2.2" fill="none"/><path d="M4 5 A4.6 4.6 0 0 0 4.2 11" stroke="#fbbc05" stroke-width="2.2" fill="none"/><path d="M4.2 11 A4.6 4.6 0 0 0 11.5 11" stroke="#34a853" stroke-width="2.2" fill="none"/><path d="M4 5 A4.6 4.6 0 0 1 11.2 4.6" stroke="#ea4335" stroke-width="2.2" fill="none"/></svg>
<svg style="left:160px;top:85px;" width="18" height="17" viewBox="0 0 18 17"><path d="M9 1 L17 8.5 L9 16 L1 8.5Z" fill="#111"/><text x="4.5" y="11.5" font-size="7" font-weight="700" font-family="Liberation Sans" fill="#fff">3k</text></svg>
<svg style="left:228px;top:85px;" width="16" height="16" viewBox="0 0 16 16"><ellipse cx="8" cy="8" rx="7" ry="3" stroke="#2bb" stroke-width="1.4" fill="none" transform="rotate(60 8 8)"/><ellipse cx="8" cy="8" rx="7" ry="3" stroke="#33c" stroke-width="1.4" fill="none" transform="rotate(-60 8 8)"/><ellipse cx="8" cy="8" rx="7" ry="3" stroke="#2a8" stroke-width="1.4" fill="none"/></svg>
<svg style="left:308px;top:86px;" width="18" height="14" viewBox="0 0 18 14"><path d="M1.5 8 L11 2 L16.5 6 V12.5 H1.5Z" fill="#fff5d6" stroke="#f8a800" stroke-width="1.6" stroke-linejoin="round"/><path d="M1.5 8 H16.5" stroke="#f8a800" stroke-width="1.4"/><circle cx="10" cy="5" r="1.2" fill="#f8a800"/><circle cx="6" cy="10.5" r="1.1" fill="#f8a800"/></svg>
<svg style="left:415px;top:85px;" width="15" height="15" viewBox="0 0 15 15"><circle cx="7.5" cy="7.5" r="6.5" fill="#5f6368"/><path d="M3 4 Q6 5 5 8 Q8 9 7 13 M10 2 Q9 5 12 6" stroke="#dee1e6" stroke-width="1.6" fill="none"/></svg>
<svg style="left:567px;top:85px;" width="15" height="15" viewBox="0 0 15 15"><circle cx="7.5" cy="7.5" r="6.5" fill="#5f6368"/><path d="M3 4 Q6 5 5 8 Q8 9 7 13 M10 2 Q9 5 12 6" stroke="#dee1e6" stroke-width="1.6" fill="none"/></svg>
<svg style="left:597px;top:84px;" width="16" height="16" viewBox="0 0 16 16"><rect x="0.5" y="0.5" width="15" height="15" fill="#fff" stroke="#ccc"/><circle cx="5" cy="5" r="3" fill="#1b75bb"/><circle cx="10" cy="10" r="4" fill="#29a8e0"/></svg>
<svg style="left:751px;top:84px;" width="16" height="16" viewBox="0 0 16 16"><rect x="0.5" y="0.5" width="15" height="15" fill="#fff" stroke="#ccc"/><circle cx="5" cy="5" r="3" fill="#1b75bb"/><circle cx="10" cy="10" r="4" fill="#29a8e0"/></svg>
<svg style="left:880px;top:85px;" width="15" height="15" viewBox="0 0 15 15"><circle cx="7.5" cy="7.5" r="6.5" fill="#5f6368"/><path d="M3 4 Q6 5 5 8 Q8 9 7 13 M10 2 Q9 5 12 6" stroke="#dee1e6" stroke-width="1.6" fill="none"/></svg>
<svg style="left:965px;top:86px;" width="16" height="15" viewBox="0 0 16 15"><path d="M1 2 Q1 0 3 0 H13 Q15 0 15 2 V15 L12 12 H3 Q1 12 1 10Z" fill="#7289da"/><circle cx="5.5" cy="6.5" r="1.5" fill="#fff"/><circle cx="10.5" cy="6.5" r="1.5" fill="#fff"/></svg>
<svg style="left:1044px;top:88px;" width="17" height="11" viewBox="0 0 17 11"><path d="M1 4 H11 L8 1 M16 7 H6 L9 10" stroke="#003082" stroke-width="2" fill="none"/></svg>
<svg style="left:1250px;top:89px;" width="10" height="9" viewBox="0 0 10 9"><path d="M1 1 L4.5 4.5 L1 8 M5 1 L8.5 4.5 L5 8" stroke="#3c4043" stroke-width="1.4" fill="none"/></svg>
<div style="left:1px;top:110px;width:1276px;height:1px;background:#dadce0;"></div>
<div style="left:1258px;top:0px;width:18px;height:1039px;background:linear-gradient(to right,rgba(0,0,0,0),rgba(0,0,0,0.16))"></div>
<div style="left:1276px;top:0px;width:1284px;height:1039px;background:#3c3f41;"></div>
<div style="left:1285px;top:6px;width:16px;height:16px;background:#000;border:1px solid #b05ee0;box-sizing:border-box"></div>
<div style="left:1287.5px;top:8.00px;font-size:8.5px;line-height:10px;color:#fff;font-family:'Liberation Sans',sans-serif;white-space:pre;font-weight:700;">PS</div>
<div style="left:1288px;top:18.5px;width:5px;height:1.2px;background:#fff;"></div>
<div style="left:1315px;top:6.00px;font-size:12.6px;line-height:18px;color:#bbbbbb;font-family:'Liberation Sans',sans-serif;white-space:pre;transform:scaleX(0.8865);transform-origin:0 0;">File</div>
<div style="left:1315px;top:21.5px;width:7px;height:1px;background:#bbbbbb;"></div>
<div style="left:1346px;top:6.00px;font-size:12.6px;line-height:18px;color:#bbbbbb;font-family:'Liberation Sans',sans-serif;white-space:pre;transform:scaleX(0.8751);transform-origin:0 0;">Edit</div>
<div style="left:1346px;top:21.5px;width:7px;height:1px;background:#bbbbbb;"></div>
<div style="left:1379px;top:6.00px;font-size:12.6px;line-height:18px;color:#bbbbbb;font-family:'Liberation Sans',sans-serif;white-space:pre;transform:scaleX(0.9231);transform-origin:0 0;">View</div>
<div style="left:1379px;top:21.5px;width:7px;height:1px;background:#bbbbbb;"></div>
<div style="left:1416px;top:6.00px;font-size:12.6px;line-height:18px;color:#bbbbbb;font-family:'Liberation Sans',sans-serif;white-space:pre;transform:scaleX(0.9451);transform-origin:0 0;">Navigate</div>
<div style="left:1416px;top:21.5px;width:7px;height:1px;background:#bbbbbb;"></div>
<div style="left:1475px;top:6.00px;font-size:12.6px;line-height:18px;color:#bbbbbb;font-family:'Liberation Sans',sans-serif;white-space:pre;transform:scaleX(0.9295);transform-origin:0 0;">Code</div>
<div style="left:1475px;top:21.5px;width:7px;height:1px;background:#bbbbbb;"></div>
<div style="left:1516px;top:6.00px;font-size:12.6px;line-height:18px;color:#bbbbbb;font-family:'Liberation Sans',sans-serif;white-space:pre;transform:scaleX(0.9030);transform-origin:0 0;">Refactor</div>
<div style="left:1516px;top:21.5px;width:7px;height:1px;background:#bbbbbb;"></div>
<div style="left:1573px;top:6.00px;font-size:12.6px;line-height:18px;color:#bbbbbb;font-family:'Liberation Sans',sans-serif;white-space:pre;transform:scaleX(0.9085);transform-origin:0 0;">Run</div>
<div style="left:1573px;top:21.5px;width:7px;height:1px;background:#bbbbbb;"></div>
<div style="left:1606px;top:6.00px;font-size:12.6px;line-height:18px;color:#bbbbbb;font-family:'Liberation Sans',sans-serif;white-space:pre;transform:scaleX(0.9859);transform-origin:0 0;">Tools</div>
<div style="left:1606px;top:21.5px;width:7px;height:1px;background:#bbbbbb;"></div>
<div style="left:1646px;top:6.00px;font-size:12.6px;line-height:18px;color:#bbbbbb;font-family:'Liberation Sans',sans-serif;white-space:pre;transform:scaleX(0.8491);transform-origin:0 0;">VCS</div>
<div style="left:1646px;top:21.5px;width:7px;height:1px;background:#bbbbbb;"></div>
<div style="left:1680px;top:6.00px;font-size:12.6px;line-height:18px;color:#bbbbbb;font-family:'Liberation Sans',sans-serif;white-space:pre;transform:scaleX(0.9818);transform-origin:0 0;">Window</div>
<div style="left:1680px;top:21.5px;width:7px;height:1px;background:#bbbbbb;"></div>
<div style="left:1737px;top:6.00px;font-size:12.6px;line-height:18px;color:#bbbbbb;font-family:'Liberation Sans',sans-serif;white-space:pre;transform:scaleX(0.9647);transform-origin:0 0;">Help</div>
<div style="left:1737px;top:21.5px;width:7px;height:1px;background:#bbbbbb;"></div>
<div style="left:1789px;top:6.00px;font-size:12.6px;line-height:18px;color:#a9a9a9;font-family:'Liberation Sans',sans-serif;white-space:pre;transform:scaleX(0.9517);transform-origin:0 0;">n939paftp [D:\xampp\htdocs\n939paftp] - &lt;c5570290-36a4-47d6-847c-c229f7c8e522&gt;\actions\logbookInsert.php</div>
<div style="left:2436px;top:14px;width:11px;height:1px;background:#cfcfcf;"></div>
<div style="left:2484px;top:9px;width:10px;height:10px;background:transparent;border:1px solid #cfcfcf;box-sizing:border-box"></div>
<svg style="left:2529px;top:8px;" width="12" height="12" viewBox="0 0 12 12"><path d="M1 1 L11 11 M11 1 L1 11" stroke="#cfcfcf" stroke-width="1"/></svg>
<div style="left:1277px;top:28px;width:1283px;height:1px;background:#515151;"></div>
<svg style="left:1287px;top:37px;" width="15" height="12" viewBox="0 0 15 12"><path d="M0 0 H6 L7.5 2 H15 V12 H0Z" fill="#9aa7b0"/></svg>
<svg style="left:1308px;top:34px;" width="6" height="18" viewBox="0 0 6 18"><path d="M1 1 L5 9 L1 17" stroke="#5e6060" stroke-width="1" fill="none"/></svg>
<svg style="left:1319px;top:36px;" width="16" height="17" viewBox="0 0 16 17"><path d="M2 5.8 L6 1.2 V5.8Z" fill="#9aa7b0"/><rect x="7" y="1" width="5.5" height="7.3" fill="#9aa7b0"/><rect x="2" y="6.6" width="10.5" height="1.7" fill="#9aa7b0"/><rect x="0" y="9" width="15.5" height="7.3" fill="#a386d6"/><text x="1" y="15.3" font-size="7" font-family="Liberation Sans" font-weight="700" fill="#3b3348" textLength="14" lengthAdjust="spacingAndGlyphs">PHP</text></svg>
<div style="left:1337px;top:35.00px;font-size:12.6px;line-height:18px;color:#bbbbbb;font-family:'Liberation Sans',sans-serif;white-space:pre;transform:scaleX(0.9583);transform-origin:0 0;">logbookInsert.php</div>
<div style="left:1277px;top:57px;width:1283px;height:1px;background:#323232;"></div>
<div style="left:2240px;top:32px;width:123px;height:22px;border:1px solid #5e6060;border-radius:3px;box-sizing:border-box"></div>
<div style="left:2247px;top:34.50px;font-size:12.6px;line-height:18px;color:#bbbbbb;font-family:'Liberation Sans',sans-serif;white-space:pre;transform:scaleX(0.9697);transform-origin:0 0;">Add Configuration...</div>
<svg style="left:2377px;top:37px;" width="10" height="12" viewBox="0 0 10 12"><path d="M0 0 L10 6 L0 12Z" fill="#5b5e60"/></svg>
<svg style="left:2400px;top:36px;" width="12" height="14" viewBox="0 0 12 14"><ellipse cx="6" cy="8" rx="4.5" ry="5" fill="#5b5e60"/><path d="M1 5 H11 M0 8 H12 M1 11 H11 M3 1 L5 3 M9 1 L7 3" stroke="#5b5e60" stroke-width="1.4"/><path d="M1 6.5 H11 M1 9.5 H11" stroke="#3c3f41" stroke-width="0.8"/></svg>
<svg style="left:2425px;top:36px;" width="16" height="15" viewBox="0 0 16 15"><path d="M1 2 Q5 0 10 2 V7 Q8 12 5 13 Q1 11 1 7Z" fill="#5b5e60"/><path d="M8 6 L15 11 L8 15Z" fill="#5b5e60"/></svg>
<svg style="left:2451px;top:35px;" width="16" height="16" viewBox="0 0 16 16"><circle cx="4" cy="3.5" r="3" fill="none" stroke="#e05555" stroke-width="1.4"/><path d="M2 5.5 L6 1.5" stroke="#e05555" stroke-width="1.2"/><ellipse cx="4" cy="11.5" rx="3" ry="3.5" fill="#4daa4d"/><path d="M10 1 H13 V15 H10" stroke="#bbb" stroke-width="2" fill="none"/></svg>
<div style="left:2479px;top:38px;width:10px;height:10px;background:#5b5e60;"></div>
<div style="left:2501px;top:33px;width:1px;height:20px;background:#515151;"></div>
<svg style="left:2511px;top:36px;" width="15" height="13" viewBox="0 0 15 13"><rect x="0.5" y="0.5" width="14" height="12" fill="none" stroke="#aeb3b7"/><rect x="0.5" y="0.5" width="14" height="2.5" fill="#aeb3b7"/><path d="M4 5 L9 7.5 L4 10Z" fill="#4daa4d"/></svg>
<svg style="left:2538px;top:35px;" width="16" height="16" viewBox="0 0 16 16"><circle cx="6.5" cy="6.5" r="5" fill="none" stroke="#cdcdcd" stroke-width="1.8"/><path d="M10 10 L14.5 14.5" stroke="#cdcdcd" stroke-width="2"/></svg>
<div style="left:1276px;top:58px;width:22px;height:939px;background:#3c3f41;"></div>
<div style="left:1298px;top:58px;width:1px;height:939px;background:#323232;"></div>
<div style="left:1280px;top:114px;font-family:'Liberation Sans',sans-serif;font-size:12.6px;line-height:18px;color:#bbbbbb;white-space:pre;transform:rotate(-90deg) scaleX(0.8267);transform-origin:0 0">1: Project</div>
<svg style="left:1282px;top:119px;" width="13" height="10" viewBox="0 0 13 10"><path d="M0 0 H5 L6 1.5 H13 V10 H0Z" fill="#aeb3b7"/></svg>
<div style="left:1280px;top:869px;font-family:'Liberation Sans',sans-serif;font-size:12.6px;line-height:18px;color:#bbbbbb;white-space:pre;transform:rotate(-90deg) scaleX(0.8204);transform-origin:0 0">2: Favorites</div>
<svg style="left:1282px;top:872px;" width="13" height="13" viewBox="0 0 13 13"><path d="M6.5 0.5 L8.3 4.7 L12.8 5 L9.3 7.9 L10.5 12.3 L6.5 9.8 L2.5 12.3 L3.7 7.9 L0.2 5 L4.7 4.7Z" fill="#aeb3b7"/></svg>
<div style="left:1280px;top:967px;font-family:'Liberation Sans',sans-serif;font-size:12.6px;line-height:18px;color:#bbbbbb;white-space:pre;transform:rotate(-90deg) scaleX(0.8598);transform-origin:0 0">7: Structure</div>
<svg style="left:1283px;top:971px;" width="11" height="11" viewBox="0 0 11 11"><rect x="5" y="0" width="5" height="5" fill="#aeb3b7"/><rect x="0" y="6" width="5" height="5" fill="#aeb3b7"/><rect x="6" y="6" width="5" height="5" fill="#aeb3b7"/></svg>
<div style="left:2537px;top:58px;width:23px;height:939px;background:#3c3f41;"></div>
<div style="left:2536px;top:58px;width:1px;height:939px;background:#323232;"></div>
<svg style="left:2542px;top:67px;" width="13" height="13" viewBox="0 0 13 13"><ellipse cx="6.5" cy="2.5" rx="5.5" ry="2" fill="#cdcdcd"/><path d="M1 5 A5.5 2 0 0 0 12 5 M1 8 A5.5 2 0 0 0 12 8 M1 11 A5.5 2 0 0 0 12 11" stroke="#cdcdcd" stroke-width="1.6" fill="none"/></svg>
<div style="left:2556px;top:85px;font-family:'Liberation Sans',sans-serif;font-size:12.6px;line-height:18px;color:#bbbbbb;white-space:pre;transform:rotate(90deg) scaleX(0.8899);transform-origin:0 0">Database</div>
<div style="left:2537px;top:143px;width:23px;height:87px;background:#2b2b2b;"></div>
<div style="left:2556px;top:153px;font-family:'Liberation Sans',sans-serif;font-size:12.6px;line-height:18px;color:#e6e6e6;white-space:pre;transform:rotate(90deg) scaleX(0.8976);transform-origin:0 0">Remote Host</div>
<div style="left:1299px;top:58px;width:831px;height:27px;background:#3c3f41;"></div>
<div style="left:1299px;top:58px;width:160px;height:27px;background:#3d3c37;"></div>
<div style="left:1459px;top:58px;width:205px;height:27px;background:#4b483e;"></div>
<div style="left:1459px;top:82px;width:205px;height:3px;background:#4a88c7;"></div>
<div style="left:1664px;top:58px;width:289px;height:27px;background:#3d3c37;"></div>
<div style="left:1299px;top:85px;width:831px;height:1px;background:#323232;"></div>
<svg style="left:1306px;top:62px;" width="17" height="17" viewBox="0 0 17 17"><path d="M2 5.8 L6 1.2 V5.8Z" fill="#9aa7b0"/><rect x="7" y="1" width="5" height="7.3" fill="#9aa7b0"/><rect x="2" y="6.6" width="10" height="1.7" fill="#9aa7b0"/><circle cx="13.5" cy="3.3" r="2.3" fill="none" stroke="#9aa7b0" stroke-width="1.4"/><rect x="0" y="9" width="15.5" height="7.3" fill="#a386d6"/><text x="1" y="15.3" font-size="7" font-family="Liberation Sans" font-weight="700" fill="#3b3348" textLength="14" lengthAdjust="spacingAndGlyphs">PHP</text></svg>
<div style="left:1328px;top:62.50px;font-size:12.6px;line-height:18px;color:#bbbbbb;font-family:'Liberation Sans',sans-serif;white-space:pre;transform:scaleX(0.9487);transform-origin:0 0;">&lt;n939pa&gt; mail3.php</div>
<svg style="left:1445px;top:66px;" width="9" height="9" viewBox="0 0 9 9"><path d="M0.5 0.5 L8.5 8.5 M8.5 0.5 L0.5 8.5" stroke="#6e6e6e" stroke-width="1"/></svg>
<svg style="left:1466px;top:62px;" width="17" height="17" viewBox="0 0 17 17"><path d="M2 5.8 L6 1.2 V5.8Z" fill="#9aa7b0"/><rect x="7" y="1" width="5" height="7.3" fill="#9aa7b0"/><rect x="2" y="6.6" width="10" height="1.7" fill="#9aa7b0"/><circle cx="13.5" cy="3.3" r="2.3" fill="none" stroke="#9aa7b0" stroke-width="1.4"/><rect x="0" y="9" width="15.5" height="7.3" fill="#a386d6"/><text x="1" y="15.3" font-size="7" font-family="Liberation Sans" font-weight="700" fill="#3b3348" textLength="14" lengthAdjust="spacingAndGlyphs">PHP</text></svg>
<div style="left:1488px;top:62.50px;font-size:12.6px;line-height:18px;color:#bbbbbb;font-family:'Liberation Sans',sans-serif;white-space:pre;transform:scaleX(0.9536);transform-origin:0 0;">&lt;n939pa&gt; logbookInsert.php</div>
<svg style="left:1649px;top:66px;" width="9" height="9" viewBox="0 0 9 9"><path d="M0.5 0.5 L8.5 8.5 M8.5 0.5 L0.5 8.5" stroke="#6e6e6e" stroke-width="1"/></svg>
<svg style="left:1670px;top:62px;" width="17" height="17" viewBox="0 0 17 17"><path d="M2 5.8 L6 1.2 V5.8Z" fill="#9aa7b0"/><rect x="7" y="1" width="5" height="7.3" fill="#9aa7b0"/><rect x="2" y="6.6" width="10" height="1.7" fill="#9aa7b0"/><circle cx="13.5" cy="3.3" r="2.3" fill="none" stroke="#9aa7b0" stroke-width="1.4"/><rect x="0" y="9" width="15.5" height="7.3" fill="#a386d6"/><text x="1" y="15.3" font-size="7" font-family="Liberation Sans" font-weight="700" fill="#3b3348" textLength="14" lengthAdjust="spacingAndGlyphs">PHP</text></svg>
<div style="left:1692px;top:62.50px;font-size:12.6px;line-height:18px;color:#bbbbbb;font-family:'Liberation Sans',sans-serif;white-space:pre;transform:scaleX(0.9509);transform-origin:0 0;">&lt;n939pa&gt; selectWhoWantsLogbookMail.php</div>
<svg style="left:1937px;top:66px;" width="9" height="9" viewBox="0 0 9 9"><path d="M0.5 0.5 L8.5 8.5 M8.5 0.5 L0.5 8.5" stroke="#6e6e6e" stroke-width="1"/></svg>
<div style="left:1299px;top:86px;width:831px;height:38px;background:#3c3f41;"></div>
<div style="left:1309px;top:96.00px;font-size:12.6px;line-height:18px;color:#bbbbbb;font-family:'Liberation Sans',sans-serif;white-space:pre;transform:scaleX(0.9369);transform-origin:0 0;">The file has been modified. Upload?</div>
<svg style="left:2030px;top:101px;" width="14" height="14" viewBox="0 0 14 14"><path d="M1 13 L6 8 M13 1 L8 6 M6 8 H2.5 M6 8 V11.5 M8 6 H11.5 M8 6 V2.5" stroke="#3592c4" stroke-width="1.8" fill="none"/></svg>
<svg style="left:2060px;top:101px;" width="14" height="14" viewBox="0 0 14 14"><path d="M4 1 L1 4 L4 7 M1 4 H8 A4.5 4.5 0 0 1 8 13 H4" stroke="#aeb3b7" stroke-width="1.6" fill="none"/></svg>
<svg style="left:2089px;top:100px;" width="14" height="15" viewBox="0 0 14 15"><path d="M1 1 H13 M7 14 V4 M3 8 L7 4 L11 8" stroke="#aeb3b7" stroke-width="1.6" fill="none"/></svg>
<div style="left:1299px;top:123px;width:831px;height:1px;background:#323232;"></div>
<div style="left:1299px;top:124px;width:61px;height:849px;background:#313335;"></div>
<div style="left:1354px;top:124px;width:1px;height:849px;background:#555555;"></div>
<div style="left:1360px;top:124px;width:770px;height:849px;background:#232525;"></div>
<div style="left:1360px;top:844px;width:760px;height:20px;background:#2e2e2e;"></div>
<div style="left:1299px;top:844px;width:56px;height:20px;background:#313335;"></div>
<div style="left:1300px;top:124.5px;width:18px;text-align:right;font-family:'Liberation Mono',monospace;font-size:11.67px;line-height:20px;color:#606366">1</div>
<div style="left:1300px;top:144.5px;width:18px;text-align:right;font-family:'Liberation Mono',monospace;font-size:11.67px;line-height:20px;color:#606366">2</div>
<div style="left:1300px;top:164.5px;width:18px;text-align:right;font-family:'Liberation Mono',monospace;font-size:11.67px;line-height:20px;color:#606366">3</div>
<div style="left:1300px;top:184.5px;width:18px;text-align:right;font-family:'Liberation Mono',monospace;font-size:11.67px;line-height:20px;color:#606366">4</div>
<div style="left:1300px;top:204.5px;width:18px;text-align:right;font-family:'Liberation Mono',monospace;font-size:11.67px;line-height:20px;color:#606366">5</div>
<div style="left:1300px;top:224.5px;width:18px;text-align:right;font-family:'Liberation Mono',monospace;font-size:11.67px;line-height:20px;color:#606366">6</div>
<div style="left:1300px;top:244.5px;width:18px;text-align:right;font-family:'Liberation Mono',monospace;font-size:11.67px;line-height:20px;color:#606366">7</div>
<div style="left:1300px;top:264.5px;width:18px;text-align:right;font-family:'Liberation Mono',monospace;font-size:11.67px;line-height:20px;color:#606366">8</div>
<div style="left:1300px;top:284.5px;width:18px;text-align:right;font-family:'Liberation Mono',monospace;font-size:11.67px;line-height:20px;color:#606366">9</div>
<div style="left:1300px;top:304.5px;width:18px;text-align:right;font-family:'Liberation Mono',monospace;font-size:11.67px;line-height:20px;color:#606366">10</div>
<div style="left:1300px;top:324.5px;width:18px;text-align:right;font-family:'Liberation Mono',monospace;font-size:11.67px;line-height:20px;color:#606366">11</div>
<div style="left:1300px;top:344.5px;width:18px;text-align:right;font-family:'Liberation Mono',monospace;font-size:11.67px;line-height:20px;color:#606366">12</div>
<div style="left:1300px;top:364.5px;width:18px;text-align:right;font-family:'Liberation Mono',monospace;font-size:11.67px;line-height:20px;color:#606366">13</div>
<div style="left:1300px;top:384.5px;width:18px;text-align:right;font-family:'Liberation Mono',monospace;font-size:11.67px;line-height:20px;color:#606366">14</div>
<div style="left:1300px;top:404.5px;width:18px;text-align:right;font-family:'Liberation Mono',monospace;font-size:11.67px;line-height:20px;color:#606366">15</div>
<div style="left:1300px;top:424.5px;width:18px;text-align:right;font-family:'Liberation Mono',monospace;font-size:11.67px;line-height:20px;color:#606366">16</div>
<div style="left:1300px;top:444.5px;width:18px;text-align:right;font-family:'Liberation Mono',monospace;font-size:11.67px;line-height:20px;color:#606366">17</div>
<div style="left:1300px;top:464.5px;width:18px;text-align:right;font-family:'Liberation Mono',monospace;font-size:11.67px;line-height:20px;color:#606366">18</div>
<div style="left:1300px;top:484.5px;width:18px;text-align:right;font-family:'Liberation Mono',monospace;font-size:11.67px;line-height:20px;color:#606366">19</div>
<div style="left:1300px;top:504.5px;width:18px;text-align:right;font-family:'Liberation Mono',monospace;font-size:11.67px;line-height:20px;color:#606366">20</div>
<div style="left:1300px;top:524.5px;width:18px;text-align:right;font-family:'Liberation Mono',monospace;font-size:11.67px;line-height:20px;color:#606366">21</div>
<div style="left:1300px;top:544.5px;width:18px;text-align:right;font-family:'Liberation Mono',monospace;font-size:11.67px;line-height:20px;color:#606366">22</div>
<div style="left:1300px;top:564.5px;width:18px;text-align:right;font-family:'Liberation Mono',monospace;font-size:11.67px;line-height:20px;color:#606366">23</div>
<div style="left:1300px;top:584.5px;width:18px;text-align:right;font-family:'Liberation Mono',monospace;font-size:11.67px;line-height:20px;color:#606366">24</div>
<div style="left:1300px;top:604.5px;width:18px;text-align:right;font-family:'Liberation Mono',monospace;font-size:11.67px;line-height:20px;color:#606366">25</div>
<div style="left:1300px;top:624.5px;width:18px;text-align:right;font-family:'Liberation Mono',monospace;font-size:11.67px;line-height:20px;color:#606366">26</div>
<div style="left:1300px;top:644.5px;width:18px;text-align:right;font-family:'Liberation Mono',monospace;font-size:11.67px;line-height:20px;color:#606366">27</div>
<div style="left:1300px;top:664.5px;width:18px;text-align:right;font-family:'Liberation Mono',monospace;font-size:11.67px;line-height:20px;color:#606366">28</div>
<div style="left:1300px;top:684.5px;width:18px;text-align:right;font-family:'Liberation Mono',monospace;font-size:11.67px;line-height:20px;color:#606366">29</div>
<div style="left:1300px;top:704.5px;width:18px;text-align:right;font-family:'Liberation Mono',monospace;font-size:11.67px;line-height:20px;color:#606366">30</div>
<div style="left:1300px;top:724.5px;width:18px;text-align:right;font-family:'Liberation Mono',monospace;font-size:11.67px;line-height:20px;color:#606366">31</div>
<div style="left:1300px;top:744.5px;width:18px;text-align:right;font-family:'Liberation Mono',monospace;font-size:11.67px;line-height:20px;color:#606366">32</div>
<div style="left:1300px;top:764.5px;width:18px;text-align:right;font-family:'Liberation Mono',monospace;font-size:11.67px;line-height:20px;color:#606366">33</div>
<div style="left:1300px;top:784.5px;width:18px;text-align:right;font-family:'Liberation Mono',monospace;font-size:11.67px;line-height:20px;color:#606366">34</div>
<div style="left:1300px;top:804.5px;width:18px;text-align:right;font-family:'Liberation Mono',monospace;font-size:11.67px;line-height:20px;color:#606366">35</div>
<div style="left:1300px;top:824.5px;width:18px;text-align:right;font-family:'Liberation Mono',monospace;font-size:11.67px;line-height:20px;color:#606366">36</div>
<div style="left:1300px;top:844.5px;width:18px;text-align:right;font-family:'Liberation Mono',monospace;font-size:11.67px;line-height:20px;color:#a4a3a3">37</div>
<div style="left:1300px;top:864.5px;width:18px;text-align:right;font-family:'Liberation Mono',monospace;font-size:11.67px;line-height:20px;color:#606366">38</div>
<div style="left:1300px;top:884.5px;width:18px;text-align:right;font-family:'Liberation Mono',monospace;font-size:11.67px;line-height:20px;color:#606366">39</div>
<div style="left:1300px;top:904.5px;width:18px;text-align:right;font-family:'Liberation Mono',monospace;font-size:11.67px;line-height:20px;color:#606366">40</div>
<div style="left:1300px;top:924.5px;width:18px;text-align:right;font-family:'Liberation Mono',monospace;font-size:11.67px;line-height:20px;color:#606366">41</div>
<div style="left:1300px;top:944.5px;width:18px;text-align:right;font-family:'Liberation Mono',monospace;font-size:11.67px;line-height:20px;color:#606366">42</div>
<div style="left:1416px;top:604px;width:712px;height:20px;background:#4b4a37;"></div>
<div style="left:1360px;top:125px;font-family:'Liberation Mono',monospace;font-size:11.67px;line-height:20px;color:#cc7832;white-space:pre">&lt;?php</div>
<div style="left:1360px;top:145px;font-family:'Liberation Mono',monospace;font-size:11.67px;line-height:20px;color:#cc7832;white-space:pre">require_once</div>
<div style="left:1444.0px;top:145px;font-family:'Liberation Mono',monospace;font-size:11.67px;line-height:20px;color:#a9b7c6;white-space:pre">( </div>
<div style="left:1458.0px;top:145px;font-family:'Liberation Mono',monospace;font-size:11.67px;line-height:20px;color:#6a8759;white-space:pre">'</div>
<div style="left:1465.0px;top:144px;width:14.0px;height:20px;background:#4c4a3a;"></div>
<div style="left:1465.0px;top:145px;font-family:'Liberation Mono',monospace;font-size:11.67px;line-height:20px;color:#6a8759;white-space:pre">..</div>
<div style="left:1479.0px;top:145px;font-family:'Liberation Mono',monospace;font-size:11.67px;line-height:20px;color:#6a8759;white-space:pre">/classes/Connection.php'</div>
<div style="left:1647.0px;top:145px;font-family:'Liberation Mono',monospace;font-size:11.67px;line-height:20px;color:#a9b7c6;white-space:pre"> )</div>
<div style="left:1661.0px;top:145px;font-family:'Liberation Mono',monospace;font-size:11.67px;line-height:20px;color:#cc7832;white-space:pre">;</div>
<div style="left:1360px;top:165px;font-family:'Liberation Mono',monospace;font-size:11.67px;line-height:20px;color:#9876aa;white-space:pre">$conn</div>
<div style="left:1395.0px;top:165px;font-family:'Liberation Mono',monospace;font-size:11.67px;line-height:20px;color:#a9b7c6;white-space:pre"> = ( </div>
<div style="left:1430.0px;top:165px;font-family:'Liberation Mono',monospace;font-size:11.67px;line-height:20px;color:#cc7832;white-space:pre">new </div>
<div style="left:1458.0px;top:164px;width:70.0px;height:20px;background:#4c4a3a;"></div>
<div style="left:1458.0px;top:165px;font-family:'Liberation Mono',monospace;font-size:11.67px;line-height:20px;color:#a9b7c6;white-space:pre">Connection</div>
<div style="left:1528.0px;top:165px;font-family:'Liberation Mono',monospace;font-size:11.67px;line-height:20px;color:#a9b7c6;white-space:pre"> )-&gt;</div>
<div style="left:1556.0px;top:164px;width:28.0px;height:20px;background:#4c4a3a;"></div>
<div style="left:1556.0px;top:165px;font-family:'Liberation Mono',monospace;font-size:11.67px;line-height:20px;color:#ffc66d;white-space:pre">conn</div>
<div style="left:1584.0px;top:165px;font-family:'Liberation Mono',monospace;font-size:11.67px;line-height:20px;color:#a9b7c6;white-space:pre">()</div>
<div style="left:1598.0px;top:165px;font-family:'Liberation Mono',monospace;font-size:11.67px;line-height:20px;color:#cc7832;white-space:pre">;</div>
<div style="left:1360px;top:905px;font-family:'Liberation Mono',monospace;font-size:11.67px;line-height:20px;color:#808080;white-space:pre">//require_once '../mailing/mail3.php';</div>
<div style="left:1360px;top:725px;font-family:'Liberation Mono',monospace;font-size:11.67px;line-height:20px;color:#808080;white-space:pre">// check who wants an email</div>
<div style="left:1360px;top:645px;font-family:'Liberation Mono',monospace;font-size:11.67px;line-height:20px;color:#9876aa;white-space:pre">$statement</div>
<div style="left:1430.0px;top:645px;font-family:'Liberation Mono',monospace;font-size:11.67px;line-height:20px;color:#a9b7c6;white-space:pre"> = </div>
<div style="left:1451.0px;top:645px;font-family:'Liberation Mono',monospace;font-size:11.67px;line-height:20px;color:#9876aa;white-space:pre">$conn</div>
<div style="left:1486.0px;top:645px;font-family:'Liberation Mono',monospace;font-size:11.67px;line-height:20px;color:#a9b7c6;white-space:pre">-&gt;</div>
<div style="left:1500.0px;top:644px;width:49.0px;height:20px;background:#4c4a3a;"></div>
<div style="left:1500.0px;top:645px;font-family:'Liberation Mono',monospace;font-size:11.67px;line-height:20px;color:#ffc66d;white-space:pre">prepare</div>
<div style="left:1549.0px;top:645px;font-family:'Liberation Mono',monospace;font-size:11.67px;line-height:20px;color:#a9b7c6;white-space:pre">(</div>
<div style="left:1556.0px;top:645px;font-family:'Liberation Mono',monospace;font-size:11.67px;line-height:20px;color:#9876aa;white-space:pre">$sql</div>
<div style="left:1584.0px;top:645px;font-family:'Liberation Mono',monospace;font-size:11.67px;line-height:20px;color:#a9b7c6;white-space:pre">)</div>
<div style="left:1591.0px;top:645px;font-family:'Liberation Mono',monospace;font-size:11.67px;line-height:20px;color:#cc7832;white-space:pre">;</div>
<div style="left:1360px;top:685px;font-family:'Liberation Mono',monospace;font-size:11.67px;line-height:20px;color:#9876aa;white-space:pre">$statement</div>
<div style="left:1430.0px;top:685px;font-family:'Liberation Mono',monospace;font-size:11.67px;line-height:20px;color:#a9b7c6;white-space:pre">-&gt;</div>
<div style="left:1444.0px;top:684px;width:49.0px;height:20px;background:#4c4a3a;"></div>
<div style="left:1444.0px;top:685px;font-family:'Liberation Mono',monospace;font-size:11.67px;line-height:20px;color:#ffc66d;white-space:pre">execute</div>
<div style="left:1493.0px;top:685px;font-family:'Liberation Mono',monospace;font-size:11.67px;line-height:20px;color:#a9b7c6;white-space:pre">()</div>
<div style="left:1507.0px;top:685px;font-family:'Liberation Mono',monospace;font-size:11.67px;line-height:20px;color:#cc7832;white-space:pre">;</div>
<div style="left:1360px;top:765px;font-family:'Liberation Mono',monospace;font-size:11.67px;line-height:20px;color:#cc7832;white-space:pre">require_once </div>
<div style="left:1451.0px;top:765px;font-family:'Liberation Mono',monospace;font-size:11.67px;line-height:20px;color:#6a8759;white-space:pre">'</div>
<div style="left:1458.0px;top:764px;width:14.0px;height:20px;background:#4c4a3a;"></div>
<div style="left:1458.0px;top:765px;font-family:'Liberation Mono',monospace;font-size:11.67px;line-height:20px;color:#6a8759;white-space:pre">..</div>
<div style="left:1472.0px;top:765px;font-family:'Liberation Mono',monospace;font-size:11.67px;line-height:20px;color:#6a8759;white-space:pre">/includes/queries/selectWhoWantsLogbookMail.php'</div>
<div style="left:1808.0px;top:765px;font-family:'Liberation Mono',monospace;font-size:11.67px;line-height:20px;color:#cc7832;white-space:pre">;</div>
<div style="left:1360px;top:805px;font-family:'Liberation Mono',monospace;font-size:11.67px;line-height:20px;color:#cc7832;white-space:pre">foreach</div>
<div style="left:1409.0px;top:805px;font-family:'Liberation Mono',monospace;font-size:11.67px;line-height:20px;color:#a9b7c6;white-space:pre"> (</div>
<div style="left:1423.0px;top:805px;font-family:'Liberation Mono',monospace;font-size:11.67px;line-height:20px;color:#9876aa;white-space:pre">$results</div>
<div style="left:1479.0px;top:805px;font-family:'Liberation Mono',monospace;font-size:11.67px;line-height:20px;color:#cc7832;white-space:pre"> as </div>
<div style="left:1507.0px;top:805px;font-family:'Liberation Mono',monospace;font-size:11.67px;line-height:20px;color:#9876aa;white-space:pre">$key</div>
<div style="left:1535.0px;top:805px;font-family:'Liberation Mono',monospace;font-size:11.67px;line-height:20px;color:#a9b7c6;white-space:pre"> =&gt; </div>
<div style="left:1563.0px;top:805px;font-family:'Liberation Mono',monospace;font-size:11.67px;line-height:20px;color:#9876aa;white-space:pre">$value</div>
<div style="left:1605.0px;top:805px;font-family:'Liberation Mono',monospace;font-size:11.67px;line-height:20px;color:#a9b7c6;white-space:pre">) {</div>
<div style="left:1360px;top:825px;font-family:'Liberation Mono',monospace;font-size:11.67px;line-height:20px;color:#a9b7c6;white-space:pre">    </div>
<div style="left:1388.0px;top:825px;font-family:'Liberation Mono',monospace;font-size:11.67px;line-height:20px;color:#9876aa;white-space:pre">$name</div>
<div style="left:1423.0px;top:825px;font-family:'Liberation Mono',monospace;font-size:11.67px;line-height:20px;color:#a9b7c6;white-space:pre"> = </div>
<div style="left:1444.0px;top:825px;font-family:'Liberation Mono',monospace;font-size:11.67px;line-height:20px;color:#9876aa;white-space:pre">$value</div>
<div style="left:1486.0px;top:825px;font-family:'Liberation Mono',monospace;font-size:11.67px;line-height:20px;color:#a9b7c6;white-space:pre">[</div>
<div style="left:1493.0px;top:825px;font-family:'Liberation Mono',monospace;font-size:11.67px;line-height:20px;color:#6a8759;white-space:pre">'name'</div>
<div style="left:1535.0px;top:825px;font-family:'Liberation Mono',monospace;font-size:11.67px;line-height:20px;color:#a9b7c6;white-space:pre">]</div>
<div style="left:1542.0px;top:825px;font-family:'Liberation Mono',monospace;font-size:11.67px;line-height:20px;color:#cc7832;white-space:pre">;</div>
<div style="left:1360px;top:845px;font-family:'Liberation Mono',monospace;font-size:11.67px;line-height:20px;color:#a9b7c6;white-space:pre">    </div>
<div style="left:1388.0px;top:845px;font-family:'Liberation Mono',monospace;font-size:11.67px;line-height:20px;color:#9876aa;white-space:pre">$email</div>
<div style="left:1430.0px;top:845px;font-family:'Liberation Mono',monospace;font-size:11.67px;line-height:20px;color:#a9b7c6;white-space:pre"> = </div>
<div style="left:1451.0px;top:845px;font-family:'Liberation Mono',monospace;font-size:11.67px;line-height:20px;color:#9876aa;white-space:pre">$value</div>
<div style="left:1493.0px;top:845px;font-family:'Liberation Mono',monospace;font-size:11.67px;line-height:20px;color:#a9b7c6;white-space:pre">[</div>
<div style="left:1500.0px;top:845px;font-family:'Liberation Mono',monospace;font-size:11.67px;line-height:20px;color:#6a8759;white-space:pre">'emao'</div>
<div style="left:1542.0px;top:845px;font-family:'Liberation Mono',monospace;font-size:11.67px;line-height:20px;color:#a9b7c6;white-space:pre">]</div>
<div style="left:1360px;top:865px;font-family:'Liberation Mono',monospace;font-size:11.67px;line-height:20px;color:#a9b7c6;white-space:pre">}</div>
<div style="left:1360px;top:245px;font-family:'Liberation Mono',monospace;font-size:11.67px;line-height:20px;color:#9876aa;white-space:pre">$departure</div>
<div style="left:1430.0px;top:245px;font-family:'Liberation Mono',monospace;font-size:11.67px;line-height:20px;color:#a9b7c6;white-space:pre"> = </div>
<div style="left:1451.0px;top:245px;font-family:'Liberation Mono',monospace;font-size:11.67px;line-height:20px;color:#6a8759;white-space:pre">'EHRD'</div>
<div style="left:1493.0px;top:245px;font-family:'Liberation Mono',monospace;font-size:11.67px;line-height:20px;color:#cc7832;white-space:pre">;</div>
<div style="left:1360px;top:205px;font-family:'Liberation Mono',monospace;font-size:11.67px;line-height:20px;color:#9876aa;white-space:pre">$date</div>
<div style="left:1395.0px;top:205px;font-family:'Liberation Mono',monospace;font-size:11.67px;line-height:20px;color:#a9b7c6;white-space:pre"> = </div>
<div style="left:1416.0px;top:205px;font-family:'Liberation Mono',monospace;font-size:11.67px;line-height:20px;color:#9876aa;white-space:pre">$_POST</div>
<div style="left:1458.0px;top:205px;font-family:'Liberation Mono',monospace;font-size:11.67px;line-height:20px;color:#a9b7c6;white-space:pre">[</div>
<div style="left:1465.0px;top:205px;font-family:'Liberation Mono',monospace;font-size:11.67px;line-height:20px;color:#6a8759;white-space:pre">'date'</div>
<div style="left:1507.0px;top:205px;font-family:'Liberation Mono',monospace;font-size:11.67px;line-height:20px;color:#a9b7c6;white-space:pre">]</div>
<div style="left:1514.0px;top:205px;font-family:'Liberation Mono',monospace;font-size:11.67px;line-height:20px;color:#cc7832;white-space:pre">;</div>
<div style="left:1360px;top:225px;font-family:'Liberation Mono',monospace;font-size:11.67px;line-height:20px;color:#9876aa;white-space:pre">$name</div>
<div style="left:1395.0px;top:225px;font-family:'Liberation Mono',monospace;font-size:11.67px;line-height:20px;color:#a9b7c6;white-space:pre"> = </div>
<div style="left:1416.0px;top:225px;font-family:'Liberation Mono',monospace;font-size:11.67px;line-height:20px;color:#9876aa;white-space:pre">$_POST</div>
<div style="left:1458.0px;top:225px;font-family:'Liberation Mono',monospace;font-size:11.67px;line-height:20px;color:#a9b7c6;white-space:pre">[</div>
<div style="left:1465.0px;top:225px;font-family:'Liberation Mono',monospace;font-size:11.67px;line-height:20px;color:#6a8759;white-space:pre">'name'</div>
<div style="left:1507.0px;top:225px;font-family:'Liberation Mono',monospace;font-size:11.67px;line-height:20px;color:#a9b7c6;white-space:pre">]</div>
<div style="left:1514.0px;top:225px;font-family:'Liberation Mono',monospace;font-size:11.67px;line-height:20px;color:#cc7832;white-space:pre">;</div>
<div style="left:1360px;top:265px;font-family:'Liberation Mono',monospace;font-size:11.67px;line-height:20px;color:#9876aa;white-space:pre">$arrival</div>
<div style="left:1416.0px;top:265px;font-family:'Liberation Mono',monospace;font-size:11.67px;line-height:20px;color:#a9b7c6;white-space:pre"> = </div>
<div style="left:1437.0px;top:265px;font-family:'Liberation Mono',monospace;font-size:11.67px;line-height:20px;color:#9876aa;white-space:pre">$_POST</div>
<div style="left:1479.0px;top:265px;font-family:'Liberation Mono',monospace;font-size:11.67px;line-height:20px;color:#a9b7c6;white-space:pre">[</div>
<div style="left:1486.0px;top:265px;font-family:'Liberation Mono',monospace;font-size:11.67px;line-height:20px;color:#6a8759;white-space:pre">'arrival'</div>
<div style="left:1549.0px;top:265px;font-family:'Liberation Mono',monospace;font-size:11.67px;line-height:20px;color:#a9b7c6;white-space:pre">]</div>
<div style="left:1556.0px;top:265px;font-family:'Liberation Mono',monospace;font-size:11.67px;line-height:20px;color:#cc7832;white-space:pre">;</div>
<div style="left:1360px;top:285px;font-family:'Liberation Mono',monospace;font-size:11.67px;line-height:20px;color:#9876aa;white-space:pre">$hobbs</div>
<div style="left:1402.0px;top:285px;font-family:'Liberation Mono',monospace;font-size:11.67px;line-height:20px;color:#a9b7c6;white-space:pre"> = </div>
<div style="left:1423.0px;top:285px;font-family:'Liberation Mono',monospace;font-size:11.67px;line-height:20px;color:#9876aa;white-space:pre">$_POST</div>
<div style="left:1465.0px;top:285px;font-family:'Liberation Mono',monospace;font-size:11.67px;line-height:20px;color:#a9b7c6;white-space:pre">[</div>
<div style="left:1472.0px;top:285px;font-family:'Liberation Mono',monospace;font-size:11.67px;line-height:20px;color:#6a8759;white-space:pre">'hobbs'</div>
<div style="left:1521.0px;top:285px;font-family:'Liberation Mono',monospace;font-size:11.67px;line-height:20px;color:#a9b7c6;white-space:pre">]</div>
<div style="left:1528.0px;top:285px;font-family:'Liberation Mono',monospace;font-size:11.67px;line-height:20px;color:#cc7832;white-space:pre">;</div>
<div style="left:1360px;top:305px;font-family:'Liberation Mono',monospace;font-size:11.67px;line-height:20px;color:#9876aa;white-space:pre">$flighttimer_after</div>
<div style="left:1486.0px;top:305px;font-family:'Liberation Mono',monospace;font-size:11.67px;line-height:20px;color:#a9b7c6;white-space:pre"> = </div>
<div style="left:1507.0px;top:305px;font-family:'Liberation Mono',monospace;font-size:11.67px;line-height:20px;color:#9876aa;white-space:pre">$_POST</div>
<div style="left:1549.0px;top:305px;font-family:'Liberation Mono',monospace;font-size:11.67px;line-height:20px;color:#a9b7c6;white-space:pre">[</div>
<div style="left:1556.0px;top:305px;font-family:'Liberation Mono',monospace;font-size:11.67px;line-height:20px;color:#6a8759;white-space:pre">'flighttimer_after'</div>
<div style="left:1689.0px;top:305px;font-family:'Liberation Mono',monospace;font-size:11.67px;line-height:20px;color:#a9b7c6;white-space:pre">]</div>
<div style="left:1696.0px;top:305px;font-family:'Liberation Mono',monospace;font-size:11.67px;line-height:20px;color:#cc7832;white-space:pre">;</div>
<div style="left:1360px;top:325px;font-family:'Liberation Mono',monospace;font-size:11.67px;line-height:20px;color:#9876aa;white-space:pre">$flighttime</div>
<div style="left:1437.0px;top:325px;font-family:'Liberation Mono',monospace;font-size:11.67px;line-height:20px;color:#a9b7c6;white-space:pre"> = </div>
<div style="left:1458.0px;top:325px;font-family:'Liberation Mono',monospace;font-size:11.67px;line-height:20px;color:#9876aa;white-space:pre">$_POST</div>
<div style="left:1500.0px;top:325px;font-family:'Liberation Mono',monospace;font-size:11.67px;line-height:20px;color:#a9b7c6;white-space:pre">[</div>
<div style="left:1507.0px;top:325px;font-family:'Liberation Mono',monospace;font-size:11.67px;line-height:20px;color:#6a8759;white-space:pre">'flighttime'</div>
<div style="left:1591.0px;top:325px;font-family:'Liberation Mono',monospace;font-size:11.67px;line-height:20px;color:#a9b7c6;white-space:pre">]</div>
<div style="left:1598.0px;top:325px;font-family:'Liberation Mono',monospace;font-size:11.67px;line-height:20px;color:#cc7832;white-space:pre">;</div>
<div style="left:1360px;top:345px;font-family:'Liberation Mono',monospace;font-size:11.67px;line-height:20px;color:#9876aa;white-space:pre">$remaining</div>
<div style="left:1430.0px;top:345px;font-family:'Liberation Mono',monospace;font-size:11.67px;line-height:20px;color:#a9b7c6;white-space:pre"> = </div>
<div style="left:1451.0px;top:345px;font-family:'Liberation Mono',monospace;font-size:11.67px;line-height:20px;color:#9876aa;white-space:pre">$_POST</div>
<div style="left:1493.0px;top:345px;font-family:'Liberation Mono',monospace;font-size:11.67px;line-height:20px;color:#a9b7c6;white-space:pre">[</div>
<div style="left:1500.0px;top:345px;font-family:'Liberation Mono',monospace;font-size:11.67px;line-height:20px;color:#6a8759;white-space:pre">'remaining'</div>
<div style="left:1577.0px;top:345px;font-family:'Liberation Mono',monospace;font-size:11.67px;line-height:20px;color:#a9b7c6;white-space:pre">]</div>
<div style="left:1584.0px;top:345px;font-family:'Liberation Mono',monospace;font-size:11.67px;line-height:20px;color:#cc7832;white-space:pre">;</div>
<div style="left:1360px;top:365px;font-family:'Liberation Mono',monospace;font-size:11.67px;line-height:20px;color:#9876aa;white-space:pre">$landings_ehrd</div>
<div style="left:1458.0px;top:365px;font-family:'Liberation Mono',monospace;font-size:11.67px;line-height:20px;color:#a9b7c6;white-space:pre"> = </div>
<div style="left:1479.0px;top:365px;font-family:'Liberation Mono',monospace;font-size:11.67px;line-height:20px;color:#9876aa;white-space:pre">$_POST</div>
<div style="left:1521.0px;top:365px;font-family:'Liberation Mono',monospace;font-size:11.67px;line-height:20px;color:#a9b7c6;white-space:pre">[</div>
<div style="left:1528.0px;top:365px;font-family:'Liberation Mono',monospace;font-size:11.67px;line-height:20px;color:#6a8759;white-space:pre">'landings_ehrd'</div>
<div style="left:1633.0px;top:365px;font-family:'Liberation Mono',monospace;font-size:11.67px;line-height:20px;color:#a9b7c6;white-space:pre">]</div>
<div style="left:1640.0px;top:365px;font-family:'Liberation Mono',monospace;font-size:11.67px;line-height:20px;color:#cc7832;white-space:pre">;</div>
<div style="left:1360px;top:385px;font-family:'Liberation Mono',monospace;font-size:11.67px;line-height:20px;color:#9876aa;white-space:pre">$blocktime</div>
<div style="left:1430.0px;top:385px;font-family:'Liberation Mono',monospace;font-size:11.67px;line-height:20px;color:#a9b7c6;white-space:pre"> = </div>
<div style="left:1451.0px;top:385px;font-family:'Liberation Mono',monospace;font-size:11.67px;line-height:20px;color:#9876aa;white-space:pre">$_POST</div>
<div style="left:1493.0px;top:385px;font-family:'Liberation Mono',monospace;font-size:11.67px;line-height:20px;color:#a9b7c6;white-space:pre">[</div>
<div style="left:1500.0px;top:385px;font-family:'Liberation Mono',monospace;font-size:11.67px;line-height:20px;color:#6a8759;white-space:pre">'blocktime'</div>
<div style="left:1577.0px;top:385px;font-family:'Liberation Mono',monospace;font-size:11.67px;line-height:20px;color:#a9b7c6;white-space:pre">]</div>
<div style="left:1584.0px;top:385px;font-family:'Liberation Mono',monospace;font-size:11.67px;line-height:20px;color:#cc7832;white-space:pre">;</div>
<div style="left:1360px;top:405px;font-family:'Liberation Mono',monospace;font-size:11.67px;line-height:20px;color:#9876aa;white-space:pre">$flighthours</div>
<div style="left:1444.0px;top:405px;font-family:'Liberation Mono',monospace;font-size:11.67px;line-height:20px;color:#a9b7c6;white-space:pre"> = </div>
<div style="left:1465.0px;top:405px;font-family:'Liberation Mono',monospace;font-size:11.67px;line-height:20px;color:#9876aa;white-space:pre">$_POST</div>
<div style="left:1507.0px;top:405px;font-family:'Liberation Mono',monospace;font-size:11.67px;line-height:20px;color:#a9b7c6;white-space:pre">[</div>
<div style="left:1514.0px;top:405px;font-family:'Liberation Mono',monospace;font-size:11.67px;line-height:20px;color:#6a8759;white-space:pre">'flighthours'</div>
<div style="left:1605.0px;top:405px;font-family:'Liberation Mono',monospace;font-size:11.67px;line-height:20px;color:#a9b7c6;white-space:pre">]</div>
<div style="left:1612.0px;top:405px;font-family:'Liberation Mono',monospace;font-size:11.67px;line-height:20px;color:#cc7832;white-space:pre">;</div>
<div style="left:1360px;top:425px;font-family:'Liberation Mono',monospace;font-size:11.67px;line-height:20px;color:#9876aa;white-space:pre">$fuel</div>
<div style="left:1395.0px;top:425px;font-family:'Liberation Mono',monospace;font-size:11.67px;line-height:20px;color:#a9b7c6;white-space:pre"> = </div>
<div style="left:1416.0px;top:425px;font-family:'Liberation Mono',monospace;font-size:11.67px;line-height:20px;color:#9876aa;white-space:pre">$_POST</div>
<div style="left:1458.0px;top:425px;font-family:'Liberation Mono',monospace;font-size:11.67px;line-height:20px;color:#a9b7c6;white-space:pre">[</div>
<div style="left:1465.0px;top:425px;font-family:'Liberation Mono',monospace;font-size:11.67px;line-height:20px;color:#6a8759;white-space:pre">'fuel'</div>
<div style="left:1507.0px;top:425px;font-family:'Liberation Mono',monospace;font-size:11.67px;line-height:20px;color:#a9b7c6;white-space:pre">]</div>
<div style="left:1514.0px;top:425px;font-family:'Liberation Mono',monospace;font-size:11.67px;line-height:20px;color:#cc7832;white-space:pre">;</div>
<div style="left:1360px;top:445px;font-family:'Liberation Mono',monospace;font-size:11.67px;line-height:20px;color:#9876aa;white-space:pre">$ltrs</div>
<div style="left:1395.0px;top:445px;font-family:'Liberation Mono',monospace;font-size:11.67px;line-height:20px;color:#a9b7c6;white-space:pre"> = </div>
<div style="left:1416.0px;top:445px;font-family:'Liberation Mono',monospace;font-size:11.67px;line-height:20px;color:#9876aa;white-space:pre">$_POST</div>
<div style="left:1458.0px;top:445px;font-family:'Liberation Mono',monospace;font-size:11.67px;line-height:20px;color:#a9b7c6;white-space:pre">[</div>
<div style="left:1465.0px;top:445px;font-family:'Liberation Mono',monospace;font-size:11.67px;line-height:20px;color:#6a8759;white-space:pre">'ltrs'</div>
<div style="left:1507.0px;top:445px;font-family:'Liberation Mono',monospace;font-size:11.67px;line-height:20px;color:#a9b7c6;white-space:pre">]</div>
<div style="left:1514.0px;top:445px;font-family:'Liberation Mono',monospace;font-size:11.67px;line-height:20px;color:#cc7832;white-space:pre">;</div>
<div style="left:1360px;top:465px;font-family:'Liberation Mono',monospace;font-size:11.67px;line-height:20px;color:#9876aa;white-space:pre">$price</div>
<div style="left:1402.0px;top:465px;font-family:'Liberation Mono',monospace;font-size:11.67px;line-height:20px;color:#a9b7c6;white-space:pre"> = </div>
<div style="left:1423.0px;top:465px;font-family:'Liberation Mono',monospace;font-size:11.67px;line-height:20px;color:#9876aa;white-space:pre">$_POST</div>
<div style="left:1465.0px;top:465px;font-family:'Liberation Mono',monospace;font-size:11.67px;line-height:20px;color:#a9b7c6;white-space:pre">[</div>
<div style="left:1472.0px;top:465px;font-family:'Liberation Mono',monospace;font-size:11.67px;line-height:20px;color:#6a8759;white-space:pre">'price'</div>
<div style="left:1521.0px;top:465px;font-family:'Liberation Mono',monospace;font-size:11.67px;line-height:20px;color:#a9b7c6;white-space:pre">]</div>
<div style="left:1528.0px;top:465px;font-family:'Liberation Mono',monospace;font-size:11.67px;line-height:20px;color:#cc7832;white-space:pre">;</div>
<div style="left:1360px;top:485px;font-family:'Liberation Mono',monospace;font-size:11.67px;line-height:20px;color:#9876aa;white-space:pre">$price_ltrs</div>
<div style="left:1437.0px;top:485px;font-family:'Liberation Mono',monospace;font-size:11.67px;line-height:20px;color:#a9b7c6;white-space:pre"> = </div>
<div style="left:1458.0px;top:485px;font-family:'Liberation Mono',monospace;font-size:11.67px;line-height:20px;color:#9876aa;white-space:pre">$_POST</div>
<div style="left:1500.0px;top:485px;font-family:'Liberation Mono',monospace;font-size:11.67px;line-height:20px;color:#a9b7c6;white-space:pre">[</div>
<div style="left:1507.0px;top:485px;font-family:'Liberation Mono',monospace;font-size:11.67px;line-height:20px;color:#6a8759;white-space:pre">'price_ltrs'</div>
<div style="left:1591.0px;top:485px;font-family:'Liberation Mono',monospace;font-size:11.67px;line-height:20px;color:#a9b7c6;white-space:pre">]</div>
<div style="left:1598.0px;top:485px;font-family:'Liberation Mono',monospace;font-size:11.67px;line-height:20px;color:#cc7832;white-space:pre">;</div>
<div style="left:1360px;top:505px;font-family:'Liberation Mono',monospace;font-size:11.67px;line-height:20px;color:#9876aa;white-space:pre">$card</div>
<div style="left:1395.0px;top:505px;font-family:'Liberation Mono',monospace;font-size:11.67px;line-height:20px;color:#a9b7c6;white-space:pre"> = </div>
<div style="left:1416.0px;top:505px;font-family:'Liberation Mono',monospace;font-size:11.67px;line-height:20px;color:#9876aa;white-space:pre">$_POST</div>
<div style="left:1458.0px;top:505px;font-family:'Liberation Mono',monospace;font-size:11.67px;line-height:20px;color:#a9b7c6;white-space:pre">[</div>
<div style="left:1465.0px;top:505px;font-family:'Liberation Mono',monospace;font-size:11.67px;line-height:20px;color:#6a8759;white-space:pre">'card'</div>
<div style="left:1507.0px;top:505px;font-family:'Liberation Mono',monospace;font-size:11.67px;line-height:20px;color:#a9b7c6;white-space:pre">]</div>
<div style="left:1514.0px;top:505px;font-family:'Liberation Mono',monospace;font-size:11.67px;line-height:20px;color:#cc7832;white-space:pre">;</div>
<div style="left:1360px;top:525px;font-family:'Liberation Mono',monospace;font-size:11.67px;line-height:20px;color:#9876aa;white-space:pre">$remarks</div>
<div style="left:1416.0px;top:525px;font-family:'Liberation Mono',monospace;font-size:11.67px;line-height:20px;color:#a9b7c6;white-space:pre"> = </div>
<div style="left:1437.0px;top:525px;font-family:'Liberation Mono',monospace;font-size:11.67px;line-height:20px;color:#9876aa;white-space:pre">$_POST</div>
<div style="left:1479.0px;top:525px;font-family:'Liberation Mono',monospace;font-size:11.67px;line-height:20px;color:#a9b7c6;white-space:pre">[</div>
<div style="left:1486.0px;top:525px;font-family:'Liberation Mono',monospace;font-size:11.67px;line-height:20px;color:#6a8759;white-space:pre">'remarks'</div>
<div style="left:1549.0px;top:525px;font-family:'Liberation Mono',monospace;font-size:11.67px;line-height:20px;color:#a9b7c6;white-space:pre">]</div>
<div style="left:1556.0px;top:525px;font-family:'Liberation Mono',monospace;font-size:11.67px;line-height:20px;color:#cc7832;white-space:pre">;</div>
<div style="left:1360px;top:545px;font-family:'Liberation Mono',monospace;font-size:11.67px;line-height:20px;color:#9876aa;white-space:pre">$owner_id</div>
<div style="left:1423.0px;top:545px;font-family:'Liberation Mono',monospace;font-size:11.67px;line-height:20px;color:#a9b7c6;white-space:pre"> = </div>
<div style="left:1444.0px;top:545px;font-family:'Liberation Mono',monospace;font-size:11.67px;line-height:20px;color:#9876aa;white-space:pre">$_POST</div>
<div style="left:1486.0px;top:545px;font-family:'Liberation Mono',monospace;font-size:11.67px;line-height:20px;color:#a9b7c6;white-space:pre">[</div>
<div style="left:1493.0px;top:545px;font-family:'Liberation Mono',monospace;font-size:11.67px;line-height:20px;color:#6a8759;white-space:pre">'owner_id'</div>
<div style="left:1563.0px;top:545px;font-family:'Liberation Mono',monospace;font-size:11.67px;line-height:20px;color:#a9b7c6;white-space:pre">]</div>
<div style="left:1570.0px;top:545px;font-family:'Liberation Mono',monospace;font-size:11.67px;line-height:20px;color:#cc7832;white-space:pre">;</div>
<div style="left:1360px;top:565px;font-family:'Liberation Mono',monospace;font-size:11.67px;line-height:20px;color:#9876aa;white-space:pre">$owner_name</div>
<div style="left:1437.0px;top:565px;font-family:'Liberation Mono',monospace;font-size:11.67px;line-height:20px;color:#a9b7c6;white-space:pre"> = </div>
<div style="left:1458.0px;top:565px;font-family:'Liberation Mono',monospace;font-size:11.67px;line-height:20px;color:#9876aa;white-space:pre">$_POST</div>
<div style="left:1500.0px;top:565px;font-family:'Liberation Mono',monospace;font-size:11.67px;line-height:20px;color:#a9b7c6;white-space:pre">[</div>
<div style="left:1507.0px;top:565px;font-family:'Liberation Mono',monospace;font-size:11.67px;line-height:20px;color:#6a8759;white-space:pre">'owner_name'</div>
<div style="left:1591.0px;top:565px;font-family:'Liberation Mono',monospace;font-size:11.67px;line-height:20px;color:#a9b7c6;white-space:pre">]</div>
<div style="left:1598.0px;top:565px;font-family:'Liberation Mono',monospace;font-size:11.67px;line-height:20px;color:#cc7832;white-space:pre">;</div>
<div style="left:1360px;top:605px;font-family:'Liberation Mono',monospace;font-size:11.67px;line-height:20px;color:#9876aa;white-space:pre">$sql</div>
<div style="left:1388.0px;top:605px;font-family:'Liberation Mono',monospace;font-size:11.67px;line-height:20px;color:#a9b7c6;white-space:pre"> = </div>
<div style="left:1409.0px;top:605px;font-family:'Liberation Mono',monospace;font-size:11.67px;line-height:20px;color:#6a8759;white-space:pre">"</div>
<div style="left:1416.0px;top:605px;font-family:'Liberation Mono',monospace;font-size:11.67px;line-height:20px;color:#cc7832;white-space:pre">INSERT INTO </div>
<div style="left:1500.0px;top:605px;font-family:'Liberation Mono',monospace;font-size:11.67px;line-height:20px;color:#a9b7c6;white-space:pre">`logbook` (`date`</div>
<div style="left:1619.0px;top:605px;font-family:'Liberation Mono',monospace;font-size:11.67px;line-height:20px;color:#cc7832;white-space:pre">, </div>
<div style="left:1633.0px;top:605px;font-family:'Liberation Mono',monospace;font-size:11.67px;line-height:20px;color:#a9b7c6;white-space:pre">`name`</div>
<div style="left:1675.0px;top:605px;font-family:'Liberation Mono',monospace;font-size:11.67px;line-height:20px;color:#cc7832;white-space:pre">, </div>
<div style="left:1689.0px;top:605px;font-family:'Liberation Mono',monospace;font-size:11.67px;line-height:20px;color:#a9b7c6;white-space:pre">`departure`</div>
<div style="left:1766.0px;top:605px;font-family:'Liberation Mono',monospace;font-size:11.67px;line-height:20px;color:#cc7832;white-space:pre">, </div>
<div style="left:1780.0px;top:605px;font-family:'Liberation Mono',monospace;font-size:11.67px;line-height:20px;color:#a9b7c6;white-space:pre">`arrival`</div>
<div style="left:1843.0px;top:605px;font-family:'Liberation Mono',monospace;font-size:11.67px;line-height:20px;color:#cc7832;white-space:pre">, </div>
<div style="left:1857.0px;top:605px;font-family:'Liberation Mono',monospace;font-size:11.67px;line-height:20px;color:#a9b7c6;white-space:pre">`hobbs`</div>
<div style="left:1906.0px;top:605px;font-family:'Liberation Mono',monospace;font-size:11.67px;line-height:20px;color:#cc7832;white-space:pre">, </div>
<div style="left:1920.0px;top:605px;font-family:'Liberation Mono',monospace;font-size:11.67px;line-height:20px;color:#a9b7c6;white-space:pre">`flighttimer_after`</div>
<div style="left:2053.0px;top:605px;font-family:'Liberation Mono',monospace;font-size:11.67px;line-height:20px;color:#cc7832;white-space:pre">, </div>
<div style="left:2067.0px;top:605px;font-family:'Liberation Mono',monospace;font-size:11.67px;line-height:20px;color:#a9b7c6;white-space:pre">`flightti</div>
<div style="left:1360px;top:944px;width:49px;height:20px;background:#262626;"></div>
<div style="left:1409px;top:944px;width:711px;height:20px;background:#2a2a2a;"></div>
<div style="left:1360px;top:945px;font-family:'Liberation Mono',monospace;font-size:11.67px;line-height:20px;color:#d4d4d4;white-space:pre">header(</div>
<div style="left:1411px;top:945px;width:42px;height:18px;background:#3b3b3b;border-radius:4px"></div>
<div style="left:1414px;top:945.00px;font-size:12px;line-height:18px;color:#787878;font-family:'Liberation Sans',sans-serif;white-space:pre;transform:scaleX(1.0710);transform-origin:0 0;">string:</div>
<div style="left:1457px;top:945px;font-family:'Liberation Mono',monospace;font-size:11.67px;line-height:20px;white-space:pre"><span style="color:#6a8759">'Location: ../logbook.php'</span><span style="color:#a9b7c6">)</span><span style="color:#cc7832">;</span></div>
<div style="left:1535px;top:847px;width:1px;height:15px;background:#bbbbbb;"></div>
<svg style="left:1367.0px;top:318px;" width="77.0" height="4" viewBox="0 0 77.0 4"><path d="M0 2 L1.75 0.5 L3.50 3 L5.25 0.5 L7.00 3 L8.75 0.5 L10.50 3 L12.25 0.5 L14.00 3 L15.75 0.5 L17.50 3 L19.25 0.5 L21.00 3 L22.75 0.5 L24.50 3 L26.25 0.5 L28.00 3 L29.75 0.5 L31.50 3 L33.25 0.5 L35.00 3 L36.75 0.5 L38.50 3 L40.25 0.5 L42.00 3 L43.75 0.5 L45.50 3 L47.25 0.5 L49.00 3 L50.75 0.5 L52.50 3 L54.25 0.5 L56.00 3 L57.75 0.5 L59.50 3 L61.25 0.5 L63.00 3 L64.75 0.5 L66.50 3 L68.25 0.5 L70.00 3 L71.75 0.5 L73.50 3 L75.25 0.5 L77.00 3" stroke="#5d8a50" stroke-width="1" fill="none"/></svg>
<svg style="left:1563.0px;top:318px;" width="77.0" height="4" viewBox="0 0 77.0 4"><path d="M0 2 L1.75 0.5 L3.50 3 L5.25 0.5 L7.00 3 L8.75 0.5 L10.50 3 L12.25 0.5 L14.00 3 L15.75 0.5 L17.50 3 L19.25 0.5 L21.00 3 L22.75 0.5 L24.50 3 L26.25 0.5 L28.00 3 L29.75 0.5 L31.50 3 L33.25 0.5 L35.00 3 L36.75 0.5 L38.50 3 L40.25 0.5 L42.00 3 L43.75 0.5 L45.50 3 L47.25 0.5 L49.00 3 L50.75 0.5 L52.50 3 L54.25 0.5 L56.00 3 L57.75 0.5 L59.50 3 L61.25 0.5 L63.00 3 L64.75 0.5 L66.50 3 L68.25 0.5 L70.00 3 L71.75 0.5 L73.50 3 L75.25 0.5 L77.00 3" stroke="#5d8a50" stroke-width="1" fill="none"/></svg>
<svg style="left:1367.0px;top:338px;" width="70.0" height="4" viewBox="0 0 70.0 4"><path d="M0 2 L1.75 0.5 L3.50 3 L5.25 0.5 L7.00 3 L8.75 0.5 L10.50 3 L12.25 0.5 L14.00 3 L15.75 0.5 L17.50 3 L19.25 0.5 L21.00 3 L22.75 0.5 L24.50 3 L26.25 0.5 L28.00 3 L29.75 0.5 L31.50 3 L33.25 0.5 L35.00 3 L36.75 0.5 L38.50 3 L40.25 0.5 L42.00 3 L43.75 0.5 L45.50 3 L47.25 0.5 L49.00 3 L50.75 0.5 L52.50 3 L54.25 0.5 L56.00 3 L57.75 0.5 L59.50 3 L61.25 0.5 L63.00 3 L64.75 0.5 L66.50 3 L68.25 0.5 L70.00 3" stroke="#5d8a50" stroke-width="1" fill="none"/></svg>
<svg style="left:1514.0px;top:338px;" width="70.0" height="4" viewBox="0 0 70.0 4"><path d="M0 2 L1.75 0.5 L3.50 3 L5.25 0.5 L7.00 3 L8.75 0.5 L10.50 3 L12.25 0.5 L14.00 3 L15.75 0.5 L17.50 3 L19.25 0.5 L21.00 3 L22.75 0.5 L24.50 3 L26.25 0.5 L28.00 3 L29.75 0.5 L31.50 3 L33.25 0.5 L35.00 3 L36.75 0.5 L38.50 3 L40.25 0.5 L42.00 3 L43.75 0.5 L45.50 3 L47.25 0.5 L49.00 3 L50.75 0.5 L52.50 3 L54.25 0.5 L56.00 3 L57.75 0.5 L59.50 3 L61.25 0.5 L63.00 3 L64.75 0.5 L66.50 3 L68.25 0.5 L70.00 3" stroke="#5d8a50" stroke-width="1" fill="none"/></svg>
<svg style="left:1430.0px;top:378px;" width="28.0" height="4" viewBox="0 0 28.0 4"><path d="M0 2 L1.75 0.5 L3.50 3 L5.25 0.5 L7.00 3 L8.75 0.5 L10.50 3 L12.25 0.5 L14.00 3 L15.75 0.5 L17.50 3 L19.25 0.5 L21.00 3 L22.75 0.5 L24.50 3 L26.25 0.5 L28.00 3" stroke="#5d8a50" stroke-width="1" fill="none"/></svg>
<svg style="left:1591.0px;top:378px;" width="28.0" height="4" viewBox="0 0 28.0 4"><path d="M0 2 L1.75 0.5 L3.50 3 L5.25 0.5 L7.00 3 L8.75 0.5 L10.50 3 L12.25 0.5 L14.00 3 L15.75 0.5 L17.50 3 L19.25 0.5 L21.00 3 L22.75 0.5 L24.50 3 L26.25 0.5 L28.00 3" stroke="#5d8a50" stroke-width="1" fill="none"/></svg>
<svg style="left:1367.0px;top:398px;" width="63.0" height="4" viewBox="0 0 63.0 4"><path d="M0 2 L1.75 0.5 L3.50 3 L5.25 0.5 L7.00 3 L8.75 0.5 L10.50 3 L12.25 0.5 L14.00 3 L15.75 0.5 L17.50 3 L19.25 0.5 L21.00 3 L22.75 0.5 L24.50 3 L26.25 0.5 L28.00 3 L29.75 0.5 L31.50 3 L33.25 0.5 L35.00 3 L36.75 0.5 L38.50 3 L40.25 0.5 L42.00 3 L43.75 0.5 L45.50 3 L47.25 0.5 L49.00 3 L50.75 0.5 L52.50 3 L54.25 0.5 L56.00 3 L57.75 0.5 L59.50 3 L61.25 0.5 L63.00 3" stroke="#5d8a50" stroke-width="1" fill="none"/></svg>
<svg style="left:1507.0px;top:398px;" width="63.0" height="4" viewBox="0 0 63.0 4"><path d="M0 2 L1.75 0.5 L3.50 3 L5.25 0.5 L7.00 3 L8.75 0.5 L10.50 3 L12.25 0.5 L14.00 3 L15.75 0.5 L17.50 3 L19.25 0.5 L21.00 3 L22.75 0.5 L24.50 3 L26.25 0.5 L28.00 3 L29.75 0.5 L31.50 3 L33.25 0.5 L35.00 3 L36.75 0.5 L38.50 3 L40.25 0.5 L42.00 3 L43.75 0.5 L45.50 3 L47.25 0.5 L49.00 3 L50.75 0.5 L52.50 3 L54.25 0.5 L56.00 3 L57.75 0.5 L59.50 3 L61.25 0.5 L63.00 3" stroke="#5d8a50" stroke-width="1" fill="none"/></svg>
<svg style="left:1367.0px;top:418px;" width="77.0" height="4" viewBox="0 0 77.0 4"><path d="M0 2 L1.75 0.5 L3.50 3 L5.25 0.5 L7.00 3 L8.75 0.5 L10.50 3 L12.25 0.5 L14.00 3 L15.75 0.5 L17.50 3 L19.25 0.5 L21.00 3 L22.75 0.5 L24.50 3 L26.25 0.5 L28.00 3 L29.75 0.5 L31.50 3 L33.25 0.5 L35.00 3 L36.75 0.5 L38.50 3 L40.25 0.5 L42.00 3 L43.75 0.5 L45.50 3 L47.25 0.5 L49.00 3 L50.75 0.5 L52.50 3 L54.25 0.5 L56.00 3 L57.75 0.5 L59.50 3 L61.25 0.5 L63.00 3 L64.75 0.5 L66.50 3 L68.25 0.5 L70.00 3 L71.75 0.5 L73.50 3 L75.25 0.5 L77.00 3" stroke="#5d8a50" stroke-width="1" fill="none"/></svg>
<svg style="left:1521.0px;top:418px;" width="77.0" height="4" viewBox="0 0 77.0 4"><path d="M0 2 L1.75 0.5 L3.50 3 L5.25 0.5 L7.00 3 L8.75 0.5 L10.50 3 L12.25 0.5 L14.00 3 L15.75 0.5 L17.50 3 L19.25 0.5 L21.00 3 L22.75 0.5 L24.50 3 L26.25 0.5 L28.00 3 L29.75 0.5 L31.50 3 L33.25 0.5 L35.00 3 L36.75 0.5 L38.50 3 L40.25 0.5 L42.00 3 L43.75 0.5 L45.50 3 L47.25 0.5 L49.00 3 L50.75 0.5 L52.50 3 L54.25 0.5 L56.00 3 L57.75 0.5 L59.50 3 L61.25 0.5 L63.00 3 L64.75 0.5 L66.50 3 L68.25 0.5 L70.00 3 L71.75 0.5 L73.50 3 L75.25 0.5 L77.00 3" stroke="#5d8a50" stroke-width="1" fill="none"/></svg>
<svg style="left:1367.0px;top:458px;" width="28.0" height="4" viewBox="0 0 28.0 4"><path d="M0 2 L1.75 0.5 L3.50 3 L5.25 0.5 L7.00 3 L8.75 0.5 L10.50 3 L12.25 0.5 L14.00 3 L15.75 0.5 L17.50 3 L19.25 0.5 L21.00 3 L22.75 0.5 L24.50 3 L26.25 0.5 L28.00 3" stroke="#5d8a50" stroke-width="1" fill="none"/></svg>
<svg style="left:1472.0px;top:458px;" width="28.0" height="4" viewBox="0 0 28.0 4"><path d="M0 2 L1.75 0.5 L3.50 3 L5.25 0.5 L7.00 3 L8.75 0.5 L10.50 3 L12.25 0.5 L14.00 3 L15.75 0.5 L17.50 3 L19.25 0.5 L21.00 3 L22.75 0.5 L24.50 3 L26.25 0.5 L28.00 3" stroke="#5d8a50" stroke-width="1" fill="none"/></svg>
<svg style="left:1409.0px;top:498px;" width="28.0" height="4" viewBox="0 0 28.0 4"><path d="M0 2 L1.75 0.5 L3.50 3 L5.25 0.5 L7.00 3 L8.75 0.5 L10.50 3 L12.25 0.5 L14.00 3 L15.75 0.5 L17.50 3 L19.25 0.5 L21.00 3 L22.75 0.5 L24.50 3 L26.25 0.5 L28.00 3" stroke="#5d8a50" stroke-width="1" fill="none"/></svg>
<svg style="left:1556.0px;top:498px;" width="28.0" height="4" viewBox="0 0 28.0 4"><path d="M0 2 L1.75 0.5 L3.50 3 L5.25 0.5 L7.00 3 L8.75 0.5 L10.50 3 L12.25 0.5 L14.00 3 L15.75 0.5 L17.50 3 L19.25 0.5 L21.00 3 L22.75 0.5 L24.50 3 L26.25 0.5 L28.00 3" stroke="#5d8a50" stroke-width="1" fill="none"/></svg>
<svg style="left:1458.0px;top:258px;" width="28.0" height="4" viewBox="0 0 28.0 4"><path d="M0 2 L1.75 0.5 L3.50 3 L5.25 0.5 L7.00 3 L8.75 0.5 L10.50 3 L12.25 0.5 L14.00 3 L15.75 0.5 L17.50 3 L19.25 0.5 L21.00 3 L22.75 0.5 L24.50 3 L26.25 0.5 L28.00 3" stroke="#5d8a50" stroke-width="1" fill="none"/></svg>
<svg style="left:1423.0px;top:818px;" width="56.0" height="4" viewBox="0 0 56.0 4"><path d="M0 2 L1.75 0.5 L3.50 3 L5.25 0.5 L7.00 3 L8.75 0.5 L10.50 3 L12.25 0.5 L14.00 3 L15.75 0.5 L17.50 3 L19.25 0.5 L21.00 3 L22.75 0.5 L24.50 3 L26.25 0.5 L28.00 3 L29.75 0.5 L31.50 3 L33.25 0.5 L35.00 3 L36.75 0.5 L38.50 3 L40.25 0.5 L42.00 3 L43.75 0.5 L45.50 3 L47.25 0.5 L49.00 3 L50.75 0.5 L52.50 3 L54.25 0.5 L56.00 3" stroke="#bc3f3c" stroke-width="1" fill="none"/></svg>
<svg style="left:1507.0px;top:858px;" width="28.0" height="4" viewBox="0 0 28.0 4"><path d="M0 2 L1.75 0.5 L3.50 3 L5.25 0.5 L7.00 3 L8.75 0.5 L10.50 3 L12.25 0.5 L14.00 3 L15.75 0.5 L17.50 3 L19.25 0.5 L21.00 3 L22.75 0.5 L24.50 3 L26.25 0.5 L28.00 3" stroke="#5d8a50" stroke-width="1" fill="none"/></svg>
<svg style="left:1549px;top:858px;" width="6" height="4" viewBox="0 0 6 4"><path d="M0 1 L2 3 L4 1 L6 3" stroke="#bc3f3c" stroke-width="0.9" fill="none"/></svg>
<svg style="left:1349px;top:806px;" width="10" height="14" viewBox="0 0 10 14"><path d="M1 1 H9 V9 L5 13 L1 9Z" fill="#2b2b2b" stroke="#777" stroke-width="0.9"/><path d="M3 6 H7" stroke="#888"/></svg>
<svg style="left:1349px;top:867px;" width="10" height="14" viewBox="0 0 10 14"><path d="M1 13 H9 V5 L5 1 L1 5Z" fill="#2b2b2b" stroke="#777" stroke-width="0.9"/><path d="M3 8 H7" stroke="#888"/></svg>
<div style="left:1360px;top:964px;width:760px;height:9px;background:#2b2b2b;"></div>
<div style="left:1361px;top:964px;width:158px;height:8px;background:#4e4e4e;"></div>
<div style="left:1299px;top:973px;width:831px;height:24px;background:#313335;"></div>
<div style="left:1299px;top:973px;width:831px;height:1px;background:#2b2b2b;"></div>
<div style="left:2121px;top:141px;width:8px;height:739px;background:#474848;"></div>
<svg style="left:2117px;top:125px;" width="12" height="12" viewBox="0 0 12 12"><circle cx="6" cy="6" r="5.5" fill="#c93b3b"/><rect x="5" y="2.5" width="2" height="5" fill="#fff"/><rect x="5" y="8.5" width="2" height="1.6" fill="#fff"/></svg>
<div style="left:2116px;top:157px;width:14px;height:2px;background:#d4a72c;"></div>
<div style="left:2116px;top:174px;width:14px;height:2px;background:#d4a72c;"></div>
<div style="left:2116px;top:559px;width:14px;height:2px;background:#d4a72c;"></div>
<div style="left:2116px;top:594px;width:14px;height:2px;background:#d4a72c;"></div>
<div style="left:2116px;top:627px;width:14px;height:2px;background:#d4a72c;"></div>
<div style="left:2116px;top:697px;width:14px;height:2px;background:#d4a72c;"></div>
<div style="left:2116px;top:732px;width:14px;height:2px;background:#b3433f;"></div>
<div style="left:2116px;top:767px;width:14px;height:2px;background:#b3433f;"></div>
<div style="left:2130px;top:58px;width:1px;height:939px;background:#2b2b2b;"></div>
<div style="left:2131px;top:58px;width:406px;height:939px;background:#3c3f41;"></div>
<div style="left:2137px;top:62.50px;font-size:12.6px;line-height:18px;color:#bbbbbb;font-family:'Liberation Sans',sans-serif;white-space:pre;transform:scaleX(0.9384);transform-origin:0 0;">Remote Host</div>
<svg style="left:2231px;top:67px;" width="9" height="9" viewBox="0 0 9 9"><path d="M0.5 0.5 L8.5 8.5 M8.5 0.5 L0.5 8.5" stroke="#6e6e6e" stroke-width="1"/></svg>
<svg style="left:2490px;top:64px;" width="14" height="14" viewBox="0 0 14 14"><circle cx="7" cy="7" r="4.5" fill="none" stroke="#aeb3b7" stroke-width="3" stroke-dasharray="2.3 1.3"/><circle cx="7" cy="7" r="2.5" fill="none" stroke="#aeb3b7" stroke-width="1.5"/></svg>
<div style="left:2518px;top:70px;width:12px;height:2px;background:#aeb3b7;"></div>
<div style="left:2131px;top:84px;width:406px;height:1px;background:#323232;"></div>
<svg style="left:2141px;top:97px;" width="16" height="16" viewBox="0 0 16 16"><path d="M4 0 H11 V6 H0 V4Z" fill="#9aa7b0"/><rect x="0" y="7" width="16" height="9" fill="#4daa4d"/><text x="1" y="14.8" font-size="7.4" font-family="Liberation Sans" fill="#2b2b2b" textLength="14">FTP</text></svg>
<div style="left:2160px;top:96.50px;font-size:12.6px;line-height:18px;color:#bbbbbb;font-family:'Liberation Sans',sans-serif;white-space:pre;font-weight:700;transform:scaleX(0.9442);transform-origin:0 0;">n939pa</div>
<svg style="left:2390px;top:101px;" width="10" height="7" viewBox="0 0 10 7"><path d="M0 0 H10 L5 6Z" fill="#aeb3b7"/></svg>
<div style="left:2412px;top:94px;width:24px;height:22px;background:#4c5052;border:1px solid #5e6060;border-radius:3px;box-sizing:border-box"></div>
<div style="left:2418px;top:102.00px;font-size:10px;line-height:12px;color:#bbbbbb;font-family:'Liberation Sans',sans-serif;white-space:pre;">...</div>
<svg style="left:2451px;top:98px;" width="14" height="14" viewBox="0 0 14 14"><path d="M1 7 H13" stroke="#aeb3b7" stroke-width="1.6"/><path d="M4 1 H10 L7 4.5Z M4 13 H10 L7 9.5Z" fill="#aeb3b7"/></svg>
<svg style="left:2476px;top:98px;" width="14" height="14" viewBox="0 0 14 14"><path d="M12 7 A5 5 0 0 1 3 10 M2 7 A5 5 0 0 1 11 4" stroke="#aeb3b7" stroke-width="1.8" fill="none"/><path d="M11 1 V5 H7Z M3 13 V9 H7Z" fill="#aeb3b7"/></svg>
<svg style="left:2504px;top:99px;" width="12" height="12" viewBox="0 0 12 12"><path d="M1 1 L11 11 M11 1 L1 11" stroke="#aeb3b7" stroke-width="1.8"/></svg>
<div style="left:2131px;top:123px;width:406px;height:1px;background:#323232;"></div>
<div style="left:2131px;top:124px;width:406px;height:873px;overflow:hidden">
</div>
<svg style="left:2206px;top:126px;" width="16" height="17" viewBox="0 0 16 17"><path d="M2 5.8 L6 1.2 V5.8Z" fill="#9aa7b0"/><rect x="7" y="1" width="5.5" height="7.3" fill="#9aa7b0"/><rect x="2" y="6.6" width="10.5" height="1.7" fill="#9aa7b0"/><rect x="0" y="9" width="15.5" height="7.3" fill="#a386d6"/><text x="1" y="15.3" font-size="7" font-family="Liberation Sans" font-weight="700" fill="#3b3348" textLength="14" lengthAdjust="spacingAndGlyphs">PHP</text></svg>
<div style="left:2224px;top:126.00px;font-size:12.6px;line-height:18px;color:#bbbbbb;font-family:'Liberation Sans',sans-serif;white-space:pre;transform:scaleX(0.9300);transform-origin:0 0;">addSquawks.php</div>
<svg style="left:2206px;top:146px;" width="16" height="17" viewBox="0 0 16 17"><path d="M2 5.8 L6 1.2 V5.8Z" fill="#9aa7b0"/><rect x="7" y="1" width="5.5" height="7.3" fill="#9aa7b0"/><rect x="2" y="6.6" width="10.5" height="1.7" fill="#9aa7b0"/><rect x="0" y="9" width="15.5" height="7.3" fill="#a386d6"/><text x="1" y="15.3" font-size="7" font-family="Liberation Sans" font-weight="700" fill="#3b3348" textLength="14" lengthAdjust="spacingAndGlyphs">PHP</text></svg>
<div style="left:2224px;top:146.00px;font-size:12.6px;line-height:18px;color:#bbbbbb;font-family:'Liberation Sans',sans-serif;white-space:pre;transform:scaleX(0.9300);transform-origin:0 0;">changeFuelValue.php</div>
<svg style="left:2206px;top:166px;" width="16" height="17" viewBox="0 0 16 17"><path d="M2 5.8 L6 1.2 V5.8Z" fill="#9aa7b0"/><rect x="7" y="1" width="5.5" height="7.3" fill="#9aa7b0"/><rect x="2" y="6.6" width="10.5" height="1.7" fill="#9aa7b0"/><rect x="0" y="9" width="15.5" height="7.3" fill="#a386d6"/><text x="1" y="15.3" font-size="7" font-family="Liberation Sans" font-weight="700" fill="#3b3348" textLength="14" lengthAdjust="spacingAndGlyphs">PHP</text></svg>
<div style="left:2224px;top:166.00px;font-size:12.6px;line-height:18px;color:#bbbbbb;font-family:'Liberation Sans',sans-serif;white-space:pre;transform:scaleX(0.9300);transform-origin:0 0;">createAccount.php</div>
<svg style="left:2206px;top:186px;" width="16" height="17" viewBox="0 0 16 17"><path d="M2 5.8 L6 1.2 V5.8Z" fill="#9aa7b0"/><rect x="7" y="1" width="5.5" height="7.3" fill="#9aa7b0"/><rect x="2" y="6.6" width="10.5" height="1.7" fill="#9aa7b0"/><rect x="0" y="9" width="15.5" height="7.3" fill="#a386d6"/><text x="1" y="15.3" font-size="7" font-family="Liberation Sans" font-weight="700" fill="#3b3348" textLength="14" lengthAdjust="spacingAndGlyphs">PHP</text></svg>
<div style="left:2224px;top:186.00px;font-size:12.6px;line-height:18px;color:#bbbbbb;font-family:'Liberation Sans',sans-serif;white-space:pre;transform:scaleX(0.9300);transform-origin:0 0;">editProfileEmail.php</div>
<svg style="left:2206px;top:206px;" width="16" height="17" viewBox="0 0 16 17"><path d="M2 5.8 L6 1.2 V5.8Z" fill="#9aa7b0"/><rect x="7" y="1" width="5.5" height="7.3" fill="#9aa7b0"/><rect x="2" y="6.6" width="10.5" height="1.7" fill="#9aa7b0"/><rect x="0" y="9" width="15.5" height="7.3" fill="#a386d6"/><text x="1" y="15.3" font-size="7" font-family="Liberation Sans" font-weight="700" fill="#3b3348" textLength="14" lengthAdjust="spacingAndGlyphs">PHP</text></svg>
<div style="left:2224px;top:206.00px;font-size:12.6px;line-height:18px;color:#bbbbbb;font-family:'Liberation Sans',sans-serif;white-space:pre;transform:scaleX(0.9300);transform-origin:0 0;">editProfilePassword.php</div>
<svg style="left:2206px;top:226px;" width="16" height="17" viewBox="0 0 16 17"><path d="M2 5.8 L6 1.2 V5.8Z" fill="#9aa7b0"/><rect x="7" y="1" width="5.5" height="7.3" fill="#9aa7b0"/><rect x="2" y="6.6" width="10.5" height="1.7" fill="#9aa7b0"/><rect x="0" y="9" width="15.5" height="7.3" fill="#a386d6"/><text x="1" y="15.3" font-size="7" font-family="Liberation Sans" font-weight="700" fill="#3b3348" textLength="14" lengthAdjust="spacingAndGlyphs">PHP</text></svg>
<div style="left:2224px;top:226.00px;font-size:12.6px;line-height:18px;color:#bbbbbb;font-family:'Liberation Sans',sans-serif;white-space:pre;transform:scaleX(0.9300);transform-origin:0 0;">getAllBookings.php</div>
<svg style="left:2206px;top:246px;" width="16" height="17" viewBox="0 0 16 17"><path d="M2 5.8 L6 1.2 V5.8Z" fill="#9aa7b0"/><rect x="7" y="1" width="5.5" height="7.3" fill="#9aa7b0"/><rect x="2" y="6.6" width="10.5" height="1.7" fill="#9aa7b0"/><rect x="0" y="9" width="15.5" height="7.3" fill="#a386d6"/><text x="1" y="15.3" font-size="7" font-family="Liberation Sans" font-weight="700" fill="#3b3348" textLength="14" lengthAdjust="spacingAndGlyphs">PHP</text></svg>
<div style="left:2224px;top:246.00px;font-size:12.6px;line-height:18px;color:#bbbbbb;font-family:'Liberation Sans',sans-serif;white-space:pre;transform:scaleX(0.9300);transform-origin:0 0;">getBookingDataFromID.php</div>
<svg style="left:2206px;top:266px;" width="16" height="17" viewBox="0 0 16 17"><path d="M2 5.8 L6 1.2 V5.8Z" fill="#9aa7b0"/><rect x="7" y="1" width="5.5" height="7.3" fill="#9aa7b0"/><rect x="2" y="6.6" width="10.5" height="1.7" fill="#9aa7b0"/><rect x="0" y="9" width="15.5" height="7.3" fill="#a386d6"/><text x="1" y="15.3" font-size="7" font-family="Liberation Sans" font-weight="700" fill="#3b3348" textLength="14" lengthAdjust="spacingAndGlyphs">PHP</text></svg>
<div style="left:2224px;top:266.00px;font-size:12.6px;line-height:18px;color:#bbbbbb;font-family:'Liberation Sans',sans-serif;white-space:pre;transform:scaleX(0.9300);transform-origin:0 0;">getCharts.php</div>
<svg style="left:2206px;top:286px;" width="16" height="17" viewBox="0 0 16 17"><path d="M2 5.8 L6 1.2 V5.8Z" fill="#9aa7b0"/><rect x="7" y="1" width="5.5" height="7.3" fill="#9aa7b0"/><rect x="2" y="6.6" width="10.5" height="1.7" fill="#9aa7b0"/><rect x="0" y="9" width="15.5" height="7.3" fill="#a386d6"/><text x="1" y="15.3" font-size="7" font-family="Liberation Sans" font-weight="700" fill="#3b3348" textLength="14" lengthAdjust="spacingAndGlyphs">PHP</text></svg>
<div style="left:2224px;top:286.00px;font-size:12.6px;line-height:18px;color:#bbbbbb;font-family:'Liberation Sans',sans-serif;white-space:pre;transform:scaleX(0.9300);transform-origin:0 0;">getFileByID</div>
<svg style="left:2206px;top:306px;" width="16" height="17" viewBox="0 0 16 17"><path d="M2 5.8 L6 1.2 V5.8Z" fill="#9aa7b0"/><rect x="7" y="1" width="5.5" height="7.3" fill="#9aa7b0"/><rect x="2" y="6.6" width="10.5" height="1.7" fill="#9aa7b0"/><rect x="0" y="9" width="15.5" height="7.3" fill="#a386d6"/><text x="1" y="15.3" font-size="7" font-family="Liberation Sans" font-weight="700" fill="#3b3348" textLength="14" lengthAdjust="spacingAndGlyphs">PHP</text></svg>
<div style="left:2224px;top:306.00px;font-size:12.6px;line-height:18px;color:#bbbbbb;font-family:'Liberation Sans',sans-serif;white-space:pre;transform:scaleX(0.9300);transform-origin:0 0;">getFiles.php</div>
<svg style="left:2206px;top:326px;" width="16" height="17" viewBox="0 0 16 17"><path d="M2 5.8 L6 1.2 V5.8Z" fill="#9aa7b0"/><rect x="7" y="1" width="5.5" height="7.3" fill="#9aa7b0"/><rect x="2" y="6.6" width="10.5" height="1.7" fill="#9aa7b0"/><rect x="0" y="9" width="15.5" height="7.3" fill="#a386d6"/><text x="1" y="15.3" font-size="7" font-family="Liberation Sans" font-weight="700" fill="#3b3348" textLength="14" lengthAdjust="spacingAndGlyphs">PHP</text></svg>
<div style="left:2224px;top:326.00px;font-size:12.6px;line-height:18px;color:#bbbbbb;font-family:'Liberation Sans',sans-serif;white-space:pre;transform:scaleX(0.9300);transform-origin:0 0;">getFuelValue.php</div>
<svg style="left:2206px;top:346px;" width="16" height="17" viewBox="0 0 16 17"><path d="M2 5.8 L6 1.2 V5.8Z" fill="#9aa7b0"/><rect x="7" y="1" width="5.5" height="7.3" fill="#9aa7b0"/><rect x="2" y="6.6" width="10.5" height="1.7" fill="#9aa7b0"/><rect x="0" y="9" width="15.5" height="7.3" fill="#a386d6"/><text x="1" y="15.3" font-size="7" font-family="Liberation Sans" font-weight="700" fill="#3b3348" textLength="14" lengthAdjust="spacingAndGlyphs">PHP</text></svg>
<div style="left:2224px;top:346.00px;font-size:12.6px;line-height:18px;color:#bbbbbb;font-family:'Liberation Sans',sans-serif;white-space:pre;transform:scaleX(0.9300);transform-origin:0 0;">getLastLogbookItem.php</div>
<svg style="left:2206px;top:366px;" width="16" height="17" viewBox="0 0 16 17"><path d="M2 5.8 L6 1.2 V5.8Z" fill="#9aa7b0"/><rect x="7" y="1" width="5.5" height="7.3" fill="#9aa7b0"/><rect x="2" y="6.6" width="10.5" height="1.7" fill="#9aa7b0"/><rect x="0" y="9" width="15.5" height="7.3" fill="#a386d6"/><text x="1" y="15.3" font-size="7" font-family="Liberation Sans" font-weight="700" fill="#3b3348" textLength="14" lengthAdjust="spacingAndGlyphs">PHP</text></svg>
<div style="left:2224px;top:366.00px;font-size:12.6px;line-height:18px;color:#bbbbbb;font-family:'Liberation Sans',sans-serif;white-space:pre;transform:scaleX(0.9300);transform-origin:0 0;">getLastSquawk.php</div>
<svg style="left:2206px;top:386px;" width="16" height="17" viewBox="0 0 16 17"><path d="M2 5.8 L6 1.2 V5.8Z" fill="#9aa7b0"/><rect x="7" y="1" width="5.5" height="7.3" fill="#9aa7b0"/><rect x="2" y="6.6" width="10.5" height="1.7" fill="#9aa7b0"/><rect x="0" y="9" width="15.5" height="7.3" fill="#a386d6"/><text x="1" y="15.3" font-size="7" font-family="Liberation Sans" font-weight="700" fill="#3b3348" textLength="14" lengthAdjust="spacingAndGlyphs">PHP</text></svg>
<div style="left:2224px;top:386.00px;font-size:12.6px;line-height:18px;color:#bbbbbb;font-family:'Liberation Sans',sans-serif;white-space:pre;transform:scaleX(0.9300);transform-origin:0 0;">getLatestArrival.php</div>
<svg style="left:2206px;top:406px;" width="16" height="17" viewBox="0 0 16 17"><path d="M2 5.8 L6 1.2 V5.8Z" fill="#9aa7b0"/><rect x="7" y="1" width="5.5" height="7.3" fill="#9aa7b0"/><rect x="2" y="6.6" width="10.5" height="1.7" fill="#9aa7b0"/><rect x="0" y="9" width="15.5" height="7.3" fill="#a386d6"/><text x="1" y="15.3" font-size="7" font-family="Liberation Sans" font-weight="700" fill="#3b3348" textLength="14" lengthAdjust="spacingAndGlyphs">PHP</text></svg>
<div style="left:2224px;top:406.00px;font-size:12.6px;line-height:18px;color:#bbbbbb;font-family:'Liberation Sans',sans-serif;white-space:pre;transform:scaleX(0.9300);transform-origin:0 0;">getLogbookItems.php</div>
<svg style="left:2206px;top:426px;" width="16" height="17" viewBox="0 0 16 17"><path d="M2 5.8 L6 1.2 V5.8Z" fill="#9aa7b0"/><rect x="7" y="1" width="5.5" height="7.3" fill="#9aa7b0"/><rect x="2" y="6.6" width="10.5" height="1.7" fill="#9aa7b0"/><rect x="0" y="9" width="15.5" height="7.3" fill="#a386d6"/><text x="1" y="15.3" font-size="7" font-family="Liberation Sans" font-weight="700" fill="#3b3348" textLength="14" lengthAdjust="spacingAndGlyphs">PHP</text></svg>
<div style="left:2224px;top:426.00px;font-size:12.6px;line-height:18px;color:#bbbbbb;font-family:'Liberation Sans',sans-serif;white-space:pre;transform:scaleX(0.9300);transform-origin:0 0;">getNavData.php</div>
<svg style="left:2206px;top:446px;" width="16" height="17" viewBox="0 0 16 17"><path d="M2 5.8 L6 1.2 V5.8Z" fill="#9aa7b0"/><rect x="7" y="1" width="5.5" height="7.3" fill="#9aa7b0"/><rect x="2" y="6.6" width="10.5" height="1.7" fill="#9aa7b0"/><rect x="0" y="9" width="15.5" height="7.3" fill="#a386d6"/><text x="1" y="15.3" font-size="7" font-family="Liberation Sans" font-weight="700" fill="#3b3348" textLength="14" lengthAdjust="spacingAndGlyphs">PHP</text></svg>
<div style="left:2224px;top:446.00px;font-size:12.6px;line-height:18px;color:#bbbbbb;font-family:'Liberation Sans',sans-serif;white-space:pre;transform:scaleX(0.9300);transform-origin:0 0;">getSquawks.php</div>
<svg style="left:2206px;top:466px;" width="16" height="17" viewBox="0 0 16 17"><path d="M2 5.8 L6 1.2 V5.8Z" fill="#9aa7b0"/><rect x="7" y="1" width="5.5" height="7.3" fill="#9aa7b0"/><rect x="2" y="6.6" width="10.5" height="1.7" fill="#9aa7b0"/><rect x="0" y="9" width="15.5" height="7.3" fill="#a386d6"/><text x="1" y="15.3" font-size="7" font-family="Liberation Sans" font-weight="700" fill="#3b3348" textLength="14" lengthAdjust="spacingAndGlyphs">PHP</text></svg>
<div style="left:2224px;top:466.00px;font-size:12.6px;line-height:18px;color:#bbbbbb;font-family:'Liberation Sans',sans-serif;white-space:pre;transform:scaleX(0.9300);transform-origin:0 0;">insertNewLogbookRegister.php</div>
<svg style="left:2206px;top:486px;" width="16" height="17" viewBox="0 0 16 17"><path d="M2 5.8 L6 1.2 V5.8Z" fill="#9aa7b0"/><rect x="7" y="1" width="5.5" height="7.3" fill="#9aa7b0"/><rect x="2" y="6.6" width="10.5" height="1.7" fill="#9aa7b0"/><rect x="0" y="9" width="15.5" height="7.3" fill="#a386d6"/><text x="1" y="15.3" font-size="7" font-family="Liberation Sans" font-weight="700" fill="#3b3348" textLength="14" lengthAdjust="spacingAndGlyphs">PHP</text></svg>
<div style="left:2224px;top:486.00px;font-size:12.6px;line-height:18px;color:#bbbbbb;font-family:'Liberation Sans',sans-serif;white-space:pre;transform:scaleX(0.9300);transform-origin:0 0;">selectAllUsers.php</div>
<svg style="left:2206px;top:506px;" width="16" height="17" viewBox="0 0 16 17"><path d="M2 5.8 L6 1.2 V5.8Z" fill="#9aa7b0"/><rect x="7" y="1" width="5.5" height="7.3" fill="#9aa7b0"/><rect x="2" y="6.6" width="10.5" height="1.7" fill="#9aa7b0"/><rect x="0" y="9" width="15.5" height="7.3" fill="#a386d6"/><text x="1" y="15.3" font-size="7" font-family="Liberation Sans" font-weight="700" fill="#3b3348" textLength="14" lengthAdjust="spacingAndGlyphs">PHP</text></svg>
<div style="left:2224px;top:506.00px;font-size:12.6px;line-height:18px;color:#bbbbbb;font-family:'Liberation Sans',sans-serif;white-space:pre;transform:scaleX(0.9300);transform-origin:0 0;">selectInProgressBookingByOwnUser.php</div>
<div style="left:2131px;top:524px;width:406px;height:20px;background:#0d293e;"></div>
<svg style="left:2206px;top:526px;" width="16" height="17" viewBox="0 0 16 17"><path d="M2 5.8 L6 1.2 V5.8Z" fill="#9aa7b0"/><rect x="7" y="1" width="5.5" height="7.3" fill="#9aa7b0"/><rect x="2" y="6.6" width="10.5" height="1.7" fill="#9aa7b0"/><rect x="0" y="9" width="15.5" height="7.3" fill="#a386d6"/><text x="1" y="15.3" font-size="7" font-family="Liberation Sans" font-weight="700" fill="#3b3348" textLength="14" lengthAdjust="spacingAndGlyphs">PHP</text></svg>
<div style="left:2224px;top:526.00px;font-size:12.6px;line-height:18px;color:#bbbbbb;font-family:'Liberation Sans',sans-serif;white-space:pre;transform:scaleX(0.9300);transform-origin:0 0;">selectOwnerDetailsByName.php</div>
<svg style="left:2206px;top:546px;" width="16" height="17" viewBox="0 0 16 17"><path d="M2 5.8 L6 1.2 V5.8Z" fill="#9aa7b0"/><rect x="7" y="1" width="5.5" height="7.3" fill="#9aa7b0"/><rect x="2" y="6.6" width="10.5" height="1.7" fill="#9aa7b0"/><rect x="0" y="9" width="15.5" height="7.3" fill="#a386d6"/><text x="1" y="15.3" font-size="7" font-family="Liberation Sans" font-weight="700" fill="#3b3348" textLength="14" lengthAdjust="spacingAndGlyphs">PHP</text></svg>
<div style="left:2224px;top:546.00px;font-size:12.6px;line-height:18px;color:#bbbbbb;font-family:'Liberation Sans',sans-serif;white-space:pre;transform:scaleX(0.9300);transform-origin:0 0;">selectSelectedMailByUser.php</div>
<svg style="left:2206px;top:566px;" width="16" height="17" viewBox="0 0 16 17"><path d="M2 5.8 L6 1.2 V5.8Z" fill="#9aa7b0"/><rect x="7" y="1" width="5.5" height="7.3" fill="#9aa7b0"/><rect x="2" y="6.6" width="10.5" height="1.7" fill="#9aa7b0"/><rect x="0" y="9" width="15.5" height="7.3" fill="#a386d6"/><text x="1" y="15.3" font-size="7" font-family="Liberation Sans" font-weight="700" fill="#3b3348" textLength="14" lengthAdjust="spacingAndGlyphs">PHP</text></svg>
<div style="left:2224px;top:566.00px;font-size:12.6px;line-height:18px;color:#bbbbbb;font-family:'Liberation Sans',sans-serif;white-space:pre;transform:scaleX(0.9300);transform-origin:0 0;">selectWhoWantsLogbookMail.php</div>
<svg style="left:2188px;top:586px;" width="16" height="17" viewBox="0 0 16 17"><path d="M2 5.8 L6 1.2 V5.8Z" fill="#9aa7b0"/><rect x="7" y="1" width="5.5" height="7.3" fill="#9aa7b0"/><rect x="2" y="6.6" width="10.5" height="1.7" fill="#9aa7b0"/><rect x="0" y="9" width="15.5" height="7.3" fill="#a386d6"/><text x="1" y="15.3" font-size="7" font-family="Liberation Sans" font-weight="700" fill="#3b3348" textLength="14" lengthAdjust="spacingAndGlyphs">PHP</text></svg>
<div style="left:2206px;top:586.00px;font-size:12.6px;line-height:18px;color:#bbbbbb;font-family:'Liberation Sans',sans-serif;white-space:pre;transform:scaleX(0.9300);transform-origin:0 0;">footer.inc.php</div>
<svg style="left:2188px;top:606px;" width="16" height="17" viewBox="0 0 16 17"><path d="M2 5.8 L6 1.2 V5.8Z" fill="#9aa7b0"/><rect x="7" y="1" width="5.5" height="7.3" fill="#9aa7b0"/><rect x="2" y="6.6" width="10.5" height="1.7" fill="#9aa7b0"/><rect x="0" y="9" width="15.5" height="7.3" fill="#a386d6"/><text x="1" y="15.3" font-size="7" font-family="Liberation Sans" font-weight="700" fill="#3b3348" textLength="14" lengthAdjust="spacingAndGlyphs">PHP</text></svg>
<div style="left:2206px;top:606.00px;font-size:12.6px;line-height:18px;color:#bbbbbb;font-family:'Liberation Sans',sans-serif;white-space:pre;transform:scaleX(0.9300);transform-origin:0 0;">header.inc.php</div>
<svg style="left:2151px;top:630px;" width="10" height="8" viewBox="0 0 10 8"><path d="M0 0 H10 L5 7Z" fill="#aeb3b7"/></svg>
<svg style="left:2170px;top:627px;" width="15" height="13" viewBox="0 0 15 13"><path d="M0 0 H6 L7.5 2 H15 V13 H0Z" fill="#9aa7b0"/></svg>
<div style="left:2188px;top:626.00px;font-size:12.6px;line-height:18px;color:#bbbbbb;font-family:'Liberation Sans',sans-serif;white-space:pre;transform:scaleX(0.9300);transform-origin:0 0;">mailing</div>
<svg style="left:2188px;top:646px;" width="16" height="17" viewBox="0 0 16 17"><path d="M2 5.8 L6 1.2 V5.8Z" fill="#9aa7b0"/><rect x="7" y="1" width="5.5" height="7.3" fill="#9aa7b0"/><rect x="2" y="6.6" width="10.5" height="1.7" fill="#9aa7b0"/><rect x="0" y="9" width="15.5" height="7.3" fill="#a386d6"/><text x="1" y="15.3" font-size="7" font-family="Liberation Sans" font-weight="700" fill="#3b3348" textLength="14" lengthAdjust="spacingAndGlyphs">PHP</text></svg>
<div style="left:2206px;top:646.00px;font-size:12.6px;line-height:18px;color:#bbbbbb;font-family:'Liberation Sans',sans-serif;white-space:pre;transform:scaleX(0.9300);transform-origin:0 0;">mail1.php</div>
<svg style="left:2188px;top:666px;" width="16" height="17" viewBox="0 0 16 17"><path d="M2 5.8 L6 1.2 V5.8Z" fill="#9aa7b0"/><rect x="7" y="1" width="5.5" height="7.3" fill="#9aa7b0"/><rect x="2" y="6.6" width="10.5" height="1.7" fill="#9aa7b0"/><rect x="0" y="9" width="15.5" height="7.3" fill="#a386d6"/><text x="1" y="15.3" font-size="7" font-family="Liberation Sans" font-weight="700" fill="#3b3348" textLength="14" lengthAdjust="spacingAndGlyphs">PHP</text></svg>
<div style="left:2206px;top:666.00px;font-size:12.6px;line-height:18px;color:#bbbbbb;font-family:'Liberation Sans',sans-serif;white-space:pre;transform:scaleX(0.9300);transform-origin:0 0;">mail2.php</div>
<svg style="left:2188px;top:686px;" width="16" height="17" viewBox="0 0 16 17"><path d="M2 5.8 L6 1.2 V5.8Z" fill="#9aa7b0"/><rect x="7" y="1" width="5.5" height="7.3" fill="#9aa7b0"/><rect x="2" y="6.6" width="10.5" height="1.7" fill="#9aa7b0"/><rect x="0" y="9" width="15.5" height="7.3" fill="#a386d6"/><text x="1" y="15.3" font-size="7" font-family="Liberation Sans" font-weight="700" fill="#3b3348" textLength="14" lengthAdjust="spacingAndGlyphs">PHP</text></svg>
<div style="left:2206px;top:686.00px;font-size:12.6px;line-height:18px;color:#bbbbbb;font-family:'Liberation Sans',sans-serif;white-space:pre;transform:scaleX(0.9300);transform-origin:0 0;">mail3.php</div>
<svg style="left:2190px;top:706px;" width="12" height="16" viewBox="0 0 12 16"><path d="M3 0 H11 V15 H0 V3Z" fill="#9aa7b0"/><path d="M3 0 L0 3 H3Z" fill="#3c3f41"/><path d="M2.5 7 H8.5 M2.5 9.5 H8.5 M2.5 12 H8.5" stroke="#3c3f41" stroke-width="1"/></svg>
<div style="left:2206px;top:706.00px;font-size:12.6px;line-height:18px;color:#bbbbbb;font-family:'Liberation Sans',sans-serif;white-space:pre;transform:scaleX(0.9300);transform-origin:0 0;">notes.txt</div>
<svg style="left:2152px;top:729px;" width="8" height="10" viewBox="0 0 8 10"><path d="M0 0 V10 L7 5Z" fill="#aeb3b7"/></svg>
<svg style="left:2170px;top:727px;" width="15" height="13" viewBox="0 0 15 13"><path d="M0 0 H6 L7.5 2 H15 V13 H0Z" fill="#9aa7b0"/></svg>
<div style="left:2188px;top:726.00px;font-size:12.6px;line-height:18px;color:#bbbbbb;font-family:'Liberation Sans',sans-serif;white-space:pre;transform:scaleX(0.9300);transform-origin:0 0;">phpmailer</div>
<svg style="left:2152px;top:749px;" width="8" height="10" viewBox="0 0 8 10"><path d="M0 0 V10 L7 5Z" fill="#aeb3b7"/></svg>
<svg style="left:2170px;top:747px;" width="15" height="13" viewBox="0 0 15 13"><path d="M0 0 H6 L7.5 2 H15 V13 H0Z" fill="#9aa7b0"/></svg>
<div style="left:2188px;top:746.00px;font-size:12.6px;line-height:18px;color:#bbbbbb;font-family:'Liberation Sans',sans-serif;white-space:pre;transform:scaleX(0.9300);transform-origin:0 0;">pickerjs</div>
<svg style="left:2152px;top:769px;" width="8" height="10" viewBox="0 0 8 10"><path d="M0 0 V10 L7 5Z" fill="#aeb3b7"/></svg>
<svg style="left:2170px;top:767px;" width="15" height="13" viewBox="0 0 15 13"><path d="M0 0 H6 L7.5 2 H15 V13 H0Z" fill="#9aa7b0"/></svg>
<div style="left:2188px;top:766.00px;font-size:12.6px;line-height:18px;color:#bbbbbb;font-family:'Liberation Sans',sans-serif;white-space:pre;transform:scaleX(0.9300);transform-origin:0 0;">uploads</div>
<svg style="left:2152px;top:789px;" width="8" height="10" viewBox="0 0 8 10"><path d="M0 0 V10 L7 5Z" fill="#aeb3b7"/></svg>
<svg style="left:2170px;top:787px;" width="15" height="13" viewBox="0 0 15 13"><path d="M0 0 H6 L7.5 2 H15 V13 H0Z" fill="#9aa7b0"/></svg>
<div style="left:2188px;top:786.00px;font-size:12.6px;line-height:18px;color:#bbbbbb;font-family:'Liberation Sans',sans-serif;white-space:pre;transform:scaleX(0.9300);transform-origin:0 0;">vendor</div>
<svg style="left:2170px;top:806px;" width="16" height="17" viewBox="0 0 16 17"><path d="M2 5.8 L6 1.2 V5.8Z" fill="#9aa7b0"/><rect x="7" y="1" width="5.5" height="7.3" fill="#9aa7b0"/><rect x="2" y="6.6" width="10.5" height="1.7" fill="#9aa7b0"/><rect x="0" y="9" width="15.5" height="7.3" fill="#a386d6"/><text x="1" y="15.3" font-size="7" font-family="Liberation Sans" font-weight="700" fill="#3b3348" textLength="14" lengthAdjust="spacingAndGlyphs">PHP</text></svg>
<div style="left:2188px;top:806.00px;font-size:12.6px;line-height:18px;color:#bbbbbb;font-family:'Liberation Sans',sans-serif;white-space:pre;transform:scaleX(0.9300);transform-origin:0 0;">administration.php</div>
<svg style="left:2170px;top:826px;" width="16" height="17" viewBox="0 0 16 17"><path d="M2 5.8 L6 1.2 V5.8Z" fill="#9aa7b0"/><rect x="7" y="1" width="5.5" height="7.3" fill="#9aa7b0"/><rect x="2" y="6.6" width="10.5" height="1.7" fill="#9aa7b0"/><rect x="0" y="9" width="15.5" height="7.3" fill="#a386d6"/><text x="1" y="15.3" font-size="7" font-family="Liberation Sans" font-weight="700" fill="#3b3348" textLength="14" lengthAdjust="spacingAndGlyphs">PHP</text></svg>
<div style="left:2188px;top:826.00px;font-size:12.6px;line-height:18px;color:#bbbbbb;font-family:'Liberation Sans',sans-serif;white-space:pre;transform:scaleX(0.9300);transform-origin:0 0;">bookings.php</div>
<svg style="left:2170px;top:846px;" width="16" height="17" viewBox="0 0 16 17"><path d="M2 5.8 L6 1.2 V5.8Z" fill="#9aa7b0"/><rect x="7" y="1" width="5.5" height="7.3" fill="#9aa7b0"/><rect x="2" y="6.6" width="10.5" height="1.7" fill="#9aa7b0"/><rect x="0" y="9" width="15.5" height="7.3" fill="#a386d6"/><text x="1" y="15.3" font-size="7" font-family="Liberation Sans" font-weight="700" fill="#3b3348" textLength="14" lengthAdjust="spacingAndGlyphs">PHP</text></svg>
<div style="left:2188px;top:846.00px;font-size:12.6px;line-height:18px;color:#bbbbbb;font-family:'Liberation Sans',sans-serif;white-space:pre;transform:scaleX(0.9300);transform-origin:0 0;">bookingsbackup.php</div>
<svg style="left:2170px;top:866px;" width="16" height="17" viewBox="0 0 16 17"><path d="M2 5.8 L6 1.2 V5.8Z" fill="#9aa7b0"/><rect x="7" y="1" width="5.5" height="7.3" fill="#9aa7b0"/><rect x="2" y="6.6" width="10.5" height="1.7" fill="#9aa7b0"/><rect x="0" y="9" width="15.5" height="7.3" fill="#a386d6"/><text x="1" y="15.3" font-size="7" font-family="Liberation Sans" font-weight="700" fill="#3b3348" textLength="14" lengthAdjust="spacingAndGlyphs">PHP</text></svg>
<div style="left:2188px;top:866.00px;font-size:12.6px;line-height:18px;color:#bbbbbb;font-family:'Liberation Sans',sans-serif;white-space:pre;transform:scaleX(0.9300);transform-origin:0 0;">charts.php</div>
<svg style="left:2170px;top:886px;" width="16" height="17" viewBox="0 0 16 17"><path d="M2 5.8 L6 1.2 V5.8Z" fill="#9aa7b0"/><rect x="7" y="1" width="5.5" height="7.3" fill="#9aa7b0"/><rect x="2" y="6.6" width="10.5" height="1.7" fill="#9aa7b0"/><rect x="0" y="9" width="15.5" height="7.3" fill="#a386d6"/><text x="1" y="15.3" font-size="7" font-family="Liberation Sans" font-weight="700" fill="#3b3348" textLength="14" lengthAdjust="spacingAndGlyphs">PHP</text></svg>
<div style="left:2188px;top:886.00px;font-size:12.6px;line-height:18px;color:#bbbbbb;font-family:'Liberation Sans',sans-serif;white-space:pre;transform:scaleX(0.9300);transform-origin:0 0;">files.php</div>
<svg style="left:2170px;top:906px;" width="16" height="17" viewBox="0 0 16 17"><path d="M2 5.8 L6 1.2 V5.8Z" fill="#9aa7b0"/><rect x="7" y="1" width="5.5" height="7.3" fill="#9aa7b0"/><rect x="2" y="6.6" width="10.5" height="1.7" fill="#9aa7b0"/><rect x="0" y="9" width="15.5" height="7.3" fill="#a386d6"/><text x="1" y="15.3" font-size="7" font-family="Liberation Sans" font-weight="700" fill="#3b3348" textLength="14" lengthAdjust="spacingAndGlyphs">PHP</text></svg>
<div style="left:2188px;top:906.00px;font-size:12.6px;line-height:18px;color:#bbbbbb;font-family:'Liberation Sans',sans-serif;white-space:pre;transform:scaleX(0.9300);transform-origin:0 0;">index.php</div>
<svg style="left:2170px;top:926px;" width="16" height="17" viewBox="0 0 16 17"><path d="M2 5.8 L6 1.2 V5.8Z" fill="#9aa7b0"/><rect x="7" y="1" width="5.5" height="7.3" fill="#9aa7b0"/><rect x="2" y="6.6" width="10.5" height="1.7" fill="#9aa7b0"/><rect x="0" y="9" width="15.5" height="7.3" fill="#a386d6"/><text x="1" y="15.3" font-size="7" font-family="Liberation Sans" font-weight="700" fill="#3b3348" textLength="14" lengthAdjust="spacingAndGlyphs">PHP</text></svg>
<div style="left:2188px;top:926.00px;font-size:12.6px;line-height:18px;color:#bbbbbb;font-family:'Liberation Sans',sans-serif;white-space:pre;transform:scaleX(0.9300);transform-origin:0 0;">logbook.php</div>
<svg style="left:2170px;top:946px;" width="16" height="17" viewBox="0 0 16 17"><path d="M2 5.8 L6 1.2 V5.8Z" fill="#9aa7b0"/><rect x="7" y="1" width="5.5" height="7.3" fill="#9aa7b0"/><rect x="2" y="6.6" width="10.5" height="1.7" fill="#9aa7b0"/><rect x="0" y="9" width="15.5" height="7.3" fill="#a386d6"/><text x="1" y="15.3" font-size="7" font-family="Liberation Sans" font-weight="700" fill="#3b3348" textLength="14" lengthAdjust="spacingAndGlyphs">PHP</text></svg>
<div style="left:2188px;top:946.00px;font-size:12.6px;line-height:18px;color:#bbbbbb;font-family:'Liberation Sans',sans-serif;white-space:pre;transform:scaleX(0.9300);transform-origin:0 0;">logout.php</div>
<svg style="left:2170px;top:966px;" width="16" height="17" viewBox="0 0 16 17"><path d="M2 5.8 L6 1.2 V5.8Z" fill="#9aa7b0"/><rect x="7" y="1" width="5.5" height="7.3" fill="#9aa7b0"/><rect x="2" y="6.6" width="10.5" height="1.7" fill="#9aa7b0"/><rect x="0" y="9" width="15.5" height="7.3" fill="#a386d6"/><text x="1" y="15.3" font-size="7" font-family="Liberation Sans" font-weight="700" fill="#3b3348" textLength="14" lengthAdjust="spacingAndGlyphs">PHP</text></svg>
<div style="left:2188px;top:966.00px;font-size:12.6px;line-height:18px;color:#bbbbbb;font-family:'Liberation Sans',sans-serif;white-space:pre;transform:scaleX(0.9300);transform-origin:0 0;">mailTemplate.php</div>
<svg style="left:2170px;top:986px;" width="16" height="17" viewBox="0 0 16 17"><path d="M2 5.8 L6 1.2 V5.8Z" fill="#9aa7b0"/><rect x="7" y="1" width="5.5" height="7.3" fill="#9aa7b0"/><rect x="2" y="6.6" width="10.5" height="1.7" fill="#9aa7b0"/><rect x="0" y="9" width="15.5" height="7.3" fill="#a386d6"/><text x="1" y="15.3" font-size="7" font-family="Liberation Sans" font-weight="700" fill="#3b3348" textLength="14" lengthAdjust="spacingAndGlyphs">PHP</text></svg>
<div style="left:2188px;top:986.00px;font-size:12.6px;line-height:18px;color:#bbbbbb;font-family:'Liberation Sans',sans-serif;white-space:pre;transform:scaleX(0.9300);transform-origin:0 0;">navdata.php</div>
<div style="left:2131px;top:997px;width:406px;height:1px;background:#3c3f41;"></div>
<div style="left:2528px;top:469px;width:8px;height:467px;background:rgba(255,255,255,0.17);"></div>
<div style="left:2536px;top:58px;width:1px;height:939px;background:#2b2b2b;"></div>
<div style="left:1277px;top:997px;width:1283px;height:21px;background:#3c3f41;"></div>
<div style="left:1277px;top:997px;width:1283px;height:1px;background:#323232;"></div>
<svg style="left:1310px;top:1003px;" width="12" height="11" viewBox="0 0 12 11"><rect x="0" y="0" width="12" height="11" fill="#aeb3b7"/><path d="M2 3 L5 5.5 L2 8 M6 8.5 H10" stroke="#3c3f41" stroke-width="1.2" fill="none"/></svg>
<div style="left:1326px;top:999.50px;font-size:12.6px;line-height:18px;color:#bbbbbb;font-family:'Liberation Sans',sans-serif;white-space:pre;transform:scaleX(0.9031);transform-origin:0 0;">Terminal</div>
<svg style="left:1391px;top:1002px;" width="12" height="12" viewBox="0 0 12 12"><path d="M3 0 V11 M0 8 L3 11 L6 8 M9 12 V1 M6 4 L9 1 L12 4" stroke="#aeb3b7" stroke-width="1.5" fill="none"/></svg>
<div style="left:1408px;top:999.50px;font-size:12.6px;line-height:18px;color:#bbbbbb;font-family:'Liberation Sans',sans-serif;white-space:pre;transform:scaleX(0.8854);transform-origin:0 0;">File Transfer</div>
<svg style="left:1492px;top:1003px;" width="11" height="10" viewBox="0 0 11 10"><path d="M0 1 H2 M4 1 H11 M0 5 H2 M4 5 H11 M0 9 H2 M4 9 H11" stroke="#aeb3b7" stroke-width="1.6"/></svg>
<div style="left:1508px;top:999.50px;font-size:12.6px;line-height:18px;color:#bbbbbb;font-family:'Liberation Sans',sans-serif;white-space:pre;transform:scaleX(0.8608);transform-origin:0 0;">6: TODO</div>
<div style="left:1508px;top:1015px;width:6px;height:1px;background:#bbbbbb;"></div>
<svg style="left:2460px;top:1002px;" width="13" height="13" viewBox="0 0 13 13"><circle cx="6.5" cy="6.5" r="6.5" fill="#499c54"/><text x="4" y="10.5" font-size="9" font-weight="700" font-family="Liberation Sans" fill="#fff">1</text></svg>
<div style="left:2477px;top:999.50px;font-size:12.6px;line-height:18px;color:#bbbbbb;font-family:'Liberation Sans',sans-serif;white-space:pre;transform:scaleX(0.8811);transform-origin:0 0;">Event Log</div>
<div style="left:1277px;top:1018px;width:1283px;height:21px;background:#3c3f41;"></div>
<div style="left:1277px;top:1018px;width:1283px;height:1px;background:#323232;"></div>
<svg style="left:1283px;top:1022px;" width="13" height="13" viewBox="0 0 13 13"><rect x="3" y="0.5" width="9.5" height="9.5" fill="none" stroke="#aeb3b7"/><path d="M0.5 3 V12.5 H10" stroke="#aeb3b7" fill="none"/></svg>
<div style="left:1304px;top:1019.50px;font-size:12.6px;line-height:18px;color:#bbbbbb;font-family:'Liberation Sans',sans-serif;white-space:pre;transform:scaleX(0.9699);transform-origin:0 0;">Typo: In word 'emao'</div>
<div style="left:2324px;top:1019.50px;font-size:12.6px;line-height:18px;color:#bbbbbb;font-family:'Liberation Sans',sans-serif;white-space:pre;transform:scaleX(0.8880);transform-origin:0 0;">37:26</div>
<div style="left:2362px;top:1019.50px;font-size:12.6px;line-height:18px;color:#bbbbbb;font-family:'Liberation Sans',sans-serif;white-space:pre;transform:scaleX(0.8161);transform-origin:0 0;">LF</div>
<div style="left:2387px;top:1019.50px;font-size:12.6px;line-height:18px;color:#bbbbbb;font-family:'Liberation Sans',sans-serif;white-space:pre;transform:scaleX(0.8964);transform-origin:0 0;">UTF-8</div>
<div style="left:2431px;top:1019.50px;font-size:12.6px;line-height:18px;color:#bbbbbb;font-family:'Liberation Sans',sans-serif;white-space:pre;transform:scaleX(0.8923);transform-origin:0 0;">4 spaces</div>
<svg style="left:2485px;top:1022px;" width="12" height="12" viewBox="0 0 12 12"><path d="M3 5 V3 A2.5 2.5 0 0 1 8 3" stroke="#aeb3b7" stroke-width="1.4" fill="none"/><rect x="4" y="5.5" width="8" height="6" fill="#aeb3b7"/></svg>
<svg style="left:2510px;top:1021px;" width="13" height="13" viewBox="0 0 13 13"><path d="M2 5 H11 L9.5 1 H3.5Z" fill="#aeb3b7"/><circle cx="6.5" cy="8.5" r="3.2" fill="#aeb3b7"/><path d="M3 13 H10" stroke="#aeb3b7"/></svg>
<svg style="left:2532px;top:1021px;" width="17" height="16" viewBox="0 0 17 16"><path d="M2 9 A4 4 0 0 1 4 3 A4.5 4.5 0 0 1 12 4 A3 3 0 0 1 13 10 H3Z" fill="#aeb3b7"/><circle cx="13" cy="12" r="2.6" fill="#3c3f41" stroke="#aeb3b7" stroke-width="1.4"/></svg>
<div style="left:1277px;top:1038px;width:1283px;height:1px;background:#5a5448;"></div>
<div style="left:0px;top:1039px;width:2560px;height:41px;background:#3a3226;"></div>
<div style="left:686px;top:1039px;width:48px;height:41px;background:#5c5549;"></div>
<svg style="left:16px;top:1051px;" width="17" height="17" viewBox="0 0 17 17"><path d="M0 2.4 L7 1.4 V8 H0Z M8 1.2 L17 0 V8 H8Z M0 9 H7 V15.6 L0 14.6Z M8 9 H17 V17 L8 15.8Z" fill="#fff"/></svg>
<svg style="left:63px;top:1051px;" width="18" height="18" viewBox="0 0 18 18"><circle cx="11" cy="7" r="5.2" fill="none" stroke="#fff" stroke-width="1.3"/><path d="M7.2 10.8 L1 17" stroke="#fff" stroke-width="1.5"/></svg>
<svg style="left:111px;top:1051px;" width="17" height="15" viewBox="0 0 17 15"><path d="M1 1 H1.5 M1 1.5 H11 M1 1 V3 M11 1 V3 M1 13 V11 M11 13 V11 M1 13.5 H11 M1 3 H11 V11 H1Z M14 1 V14" stroke="#fff" stroke-width="1.2" fill="none"/><rect x="13" y="4" width="2.5" height="3" fill="#fff"/></svg>
<svg style="left:160px;top:1050px;" width="22" height="18" viewBox="0 0 22 18"><path d="M0 1 H8 L10 3 H22 V17 H0Z" fill="#f7d774"/><path d="M0 5 H22 V17 H0Z" fill="#ffe8a0"/><path d="M6 17 V11 H16 V17 H13 V13 H9 V17Z" fill="#2ea8e6"/></svg>
<svg style="left:208px;top:1049px;" width="23" height="23" viewBox="0 0 23 23"><circle cx="11.5" cy="11.5" r="11" fill="#db4437"/><path d="M11.5 11.5 L2 17 A11 11 0 0 0 16 22 Z" fill="#0f9d58"/><path d="M11.5 11.5 L16 22 A11 11 0 0 0 22.5 11.5 H11.5Z" fill="#f4c20d"/><path d="M11.5 11.5 L22.5 11.5 A11 11 0 0 0 19 3.5Z" fill="#db4437"/><circle cx="11.5" cy="11.5" r="5" fill="#fff"/><circle cx="11.5" cy="11.5" r="3.8" fill="#4285f4"/></svg>
<svg style="left:257px;top:1047px;" width="24" height="25" viewBox="0 0 24 25"><circle cx="12" cy="14" r="10.5" fill="#ff5a36"/><path d="M12 3.5 A10.5 10.5 0 0 1 22.5 14 Q22 8 17 1 Q19 6 15 5Z" fill="#ffb32e"/><path d="M2 10 Q4 5 8 4 Q6 7 8 9Z" fill="#ff9a2e"/><circle cx="12.5" cy="13.5" r="5.5" fill="#7542e5"/><path d="M6 11 Q10 8 16 10 Q12 10 11 12Z" fill="#ff8a3a"/></svg>
<svg style="left:306px;top:1049px;" width="24" height="23" viewBox="0 0 24 23"><rect x="9" y="1" width="14" height="21" fill="#0a64c9"/><rect x="14" y="1" width="9" height="8" fill="#28a8ea"/><path d="M9 12 L23 20 V22 H9Z" fill="#1490df"/><rect x="0" y="5" width="14" height="13" fill="#0078d4"/><ellipse cx="7" cy="11.5" rx="3.4" ry="4" fill="none" stroke="#fff" stroke-width="2"/></svg>
<svg style="left:355px;top:1049px;" width="25" height="24" viewBox="0 0 25 24"><circle cx="20" cy="5" r="3" fill="#7b83eb"/><rect x="14" y="9" width="10" height="10" rx="3" fill="#7b83eb"/><circle cx="13" cy="4" r="3.5" fill="#5059c9"/><rect x="0" y="5" width="14" height="14" fill="#4b53bc"/><path d="M3 8.5 H11 M7 8.5 V16" stroke="#fff" stroke-width="2"/><circle cx="20" cy="19" r="4.5" fill="#f7c325"/><path d="M20 16.5 V19.5 L21.5 20.5" stroke="#3a3226" stroke-width="1" fill="none"/></svg>
<svg style="left:403px;top:1047px;" width="25" height="25" viewBox="0 0 25 25"><path d="M12.5 1 L24 12.5 L12.5 24 L1 12.5Z" fill="#4fae74" stroke="#4fae74" stroke-width="2" stroke-linejoin="round"/><path d="M12.5 5 L20 12.5 L12.5 20 L5 12.5Z" fill="none" stroke="#c6f0d4" stroke-width="1.2"/><path d="M12.5 8 L17 12.5 L12.5 17 L8 12.5Z" fill="none" stroke="#c6f0d4" stroke-width="1"/><path d="M10 12.5 H15" stroke="#c6f0d4" stroke-width="1"/></svg>
<svg style="left:454px;top:1049px;" width="22" height="22" viewBox="0 0 22 22"><circle cx="11" cy="11" r="10.5" fill="#1a4fd6"/><circle cx="11" cy="9.5" r="3.2" fill="#fff"/><rect x="10" y="11" width="2" height="5" fill="#fff"/></svg>
<svg style="left:503px;top:1049px;" width="22" height="22" viewBox="0 0 22 22"><circle cx="11" cy="11" r="10.5" fill="#eeeeee"/><path d="M9 5 V9 M5 9 H9" stroke="#36c5f0" stroke-width="2.4" stroke-linecap="round"/><path d="M13 5 V10 M13 10 H17" stroke="#2eb67d" stroke-width="2.4" stroke-linecap="round"/><path d="M13 13 V17 M13 13 H17" stroke="#ecb22e" stroke-width="2.4" stroke-linecap="round"/><path d="M9 12 V17 M5 12 H9" stroke="#e01e5a" stroke-width="2.4" stroke-linecap="round"/></svg>
<svg style="left:552px;top:1048px;" width="23" height="23" viewBox="0 0 23 23"><circle cx="11.5" cy="11.5" r="10" fill="none" stroke="#ea4335" stroke-width="4.5"/><path d="M11.5 1.5 A10 10 0 0 1 21.5 11.5" stroke="#34a853" stroke-width="4.5" fill="none"/><path d="M21.5 11.5 A10 10 0 0 1 11.5 21.5" stroke="#fbbc05" stroke-width="4.5" fill="none"/><path d="M1.5 11.5 A10 10 0 0 1 11.5 1.5" stroke="#4285f4" stroke-width="4.5" fill="none"/></svg>
<svg style="left:600px;top:1047px;" width="25" height="25" viewBox="0 0 25 25"><rect x="6" y="10" width="12" height="11" rx="2" fill="#777"/><path d="M9 10 V6 A3 3 0 0 1 15 6 V10" stroke="#888" stroke-width="2" fill="none"/><path d="M2 7 L7 2 M2 2 V7 H7" stroke="#2b7de9" stroke-width="2.2" fill="none"/><path d="M23 24 L18 19 M23 19 V24 H18" stroke="#2bbf3a" stroke-width="2.2" fill="none"/></svg>
<svg style="left:650px;top:1049px;" width="23" height="23" viewBox="0 0 23 23"><circle cx="11.5" cy="11.5" r="11.5" fill="#1ed760"/><path d="M5 8 Q12 5.5 18.5 9 M5.5 12 Q11.5 10 17 12.8 M6.5 15.8 Q11 14.5 15.5 16.5" stroke="#191414" stroke-width="2" stroke-linecap="round" fill="none"/></svg>
<svg style="left:698px;top:1048px;" width="24" height="24" viewBox="0 0 24 24"><path d="M2 3 L14 0 L24 6 L22 20 L8 24 L0 14Z" fill="#af1df5"/><path d="M14 0 L24 6 L22 20Z" fill="#6b57ff"/><path d="M0 14 L8 24 L2 3Z" fill="#ff318c"/><rect x="4.5" y="4.5" width="15" height="15" fill="#000"/><text x="6" y="12.5" font-size="7" font-weight="700" font-family="Liberation Sans" fill="#fff">PS</text><rect x="6.5" y="15.5" width="5" height="1.3" fill="#fff"/></svg>
<svg style="left:746px;top:1048px;" width="24" height="24" viewBox="0 0 24 24"><path d="M2 3 L14 0 L24 6 L22 20 L8 24 L0 14Z" fill="#fe315d"/><path d="M14 0 L24 6 L22 20Z" fill="#f97a12"/><path d="M0 14 L8 24 L2 3Z" fill="#087cfa"/><rect x="4.5" y="4.5" width="15" height="15" fill="#000"/><text x="6" y="12.5" font-size="7" font-weight="700" font-family="Liberation Sans" fill="#fff">IJ</text><rect x="6.5" y="15.5" width="5" height="1.3" fill="#fff"/></svg>
<svg style="left:795px;top:1048px;" width="24" height="24" viewBox="0 0 24 24"><path d="M2 3 L14 0 L24 6 L22 20 L8 24 L0 14Z" fill="#22d88f"/><path d="M14 0 L24 6 L22 20Z" fill="#21d789"/><path d="M0 14 L8 24 L2 3Z" fill="#9775f8"/><rect x="4.5" y="4.5" width="15" height="15" fill="#000"/><text x="6" y="12.5" font-size="7" font-weight="700" font-family="Liberation Sans" fill="#fff">DG</text><rect x="6.5" y="15.5" width="5" height="1.3" fill="#fff"/></svg>
<svg style="left:844px;top:1048px;" width="24" height="24" viewBox="0 0 24 24"><path d="M2 3 L14 0 L24 6 L22 20 L8 24 L0 14Z" fill="#21d789"/><path d="M14 0 L24 6 L22 20Z" fill="#07c3f2"/><path d="M0 14 L8 24 L2 3Z" fill="#fcf84a"/><rect x="4.5" y="4.5" width="15" height="15" fill="#000"/><text x="6" y="12.5" font-size="7" font-weight="700" font-family="Liberation Sans" fill="#fff">PC</text><rect x="6.5" y="15.5" width="5" height="1.3" fill="#fff"/></svg>
<svg style="left:894px;top:1048px;" width="24" height="24" viewBox="0 0 24 24"><path d="M17 1 L23 4 V20 L17 23 L5 12Z" fill="#23a9f2"/><path d="M17 1 V23 L7 15 L3 18 L1 17 V7 L3 6 L7 9Z" fill="#0065a9"/><path d="M17 6 L10 12 L17 18Z" fill="#3a3226"/></svg>
<svg style="left:943px;top:1048px;" width="23" height="23" viewBox="0 0 23 23"><rect x="1" y="1" width="21" height="17" fill="#1a2a38" stroke="#8ab" stroke-width="1"/><path d="M7 5 H16 V8 H10 V11 H16 V14 H7" stroke="#cde" stroke-width="1.6" fill="none"/><path d="M8 21 H15" stroke="#8ab"/></svg>
<svg style="left:992px;top:1048px;" width="24" height="24" viewBox="0 0 24 24"><rect x="0" y="0" width="24" height="24" rx="3" fill="#fb7a24"/><path d="M5 6 Q12 10 19 6 Q15 12 19 18 Q12 14 5 18 Q9 12 5 6Z" fill="none" stroke="#fff" stroke-width="2.5"/></svg>
<svg style="left:1041px;top:1048px;" width="23" height="24" viewBox="0 0 23 24"><path d="M4 3 L20 1 L22 21 L5 23 Z" fill="#8dd0e8"/><path d="M4 3 L20 1 L20 5 L4 7Z" fill="#cfe8f0"/><path d="M2 22 L12 14" stroke="#fff" stroke-width="1"/></svg>
<div style="left:151px;top:1078px;width:40px;height:2px;background:#d9a3e8;"></div>
<div style="left:200px;top:1078px;width:40px;height:2px;background:#d9a3e8;"></div>
<div style="left:298px;top:1078px;width:40px;height:2px;background:#d9a3e8;"></div>
<div style="left:347px;top:1078px;width:40px;height:2px;background:#d9a3e8;"></div>
<div style="left:494px;top:1078px;width:40px;height:2px;background:#d9a3e8;"></div>
<div style="left:686px;top:1078px;width:48px;height:2px;background:#d9a3e8;"></div>
<div style="left:1033px;top:1078px;width:40px;height:2px;background:#d9a3e8;"></div>
<svg style="left:2304px;top:1054px;" width="14" height="9" viewBox="0 0 14 9"><path d="M1 8 L7 2 L13 8" stroke="#fff" stroke-width="1.3" fill="none"/></svg>
<svg style="left:2326px;top:1053px;" width="18" height="11" viewBox="0 0 18 11"><path d="M4 10 A3.5 3.5 0 0 1 4 3 A5 5 0 0 1 13 3.5 A3.5 3.5 0 0 1 14 10Z" fill="#3a96dd"/></svg>
<svg style="left:2351px;top:1051px;" width="16" height="15" viewBox="0 0 16 15"><rect x="5" y="1" width="10" height="8" fill="#aee" stroke="#fff"/><rect x="6" y="2" width="8" height="6" fill="#3c3"/><rect x="1" y="4" width="6" height="5" fill="#fff"/><path d="M9 10 V13 M5 13 H13" stroke="#fff" stroke-width="1.2"/></svg>
<svg style="left:2375px;top:1050px;" width="17" height="17" viewBox="0 0 17 17"><circle cx="8.5" cy="8.5" r="7" fill="none" stroke="#ea4335" stroke-width="3.2"/><path d="M8.5 1.5 A7 7 0 0 1 15.5 8.5" stroke="#34a853" stroke-width="3.2" fill="none"/><path d="M15.5 8.5 A7 7 0 0 1 8.5 15.5" stroke="#fbbc05" stroke-width="3.2" fill="none"/><path d="M1.5 8.5 A7 7 0 0 1 8.5 1.5" stroke="#4285f4" stroke-width="3.2" fill="none"/></svg>
<svg style="left:2399px;top:1052px;" width="17" height="15" viewBox="0 0 17 15"><rect x="3" y="1" width="13" height="9" fill="none" stroke="#fff" stroke-width="1.2"/><path d="M1 4 H5 V7 H1Z M8 10 V13 M4 13.5 H12" stroke="#fff" stroke-width="1.2" fill="none"/></svg>
<svg style="left:2423px;top:1051px;" width="17" height="16" viewBox="0 0 17 16"><path d="M1 5 H4 L8 1.5 V14.5 L4 11 H1Z" fill="none" stroke="#fff" stroke-width="1.2"/><path d="M10.5 5.5 Q12 8 10.5 10.5 M12.5 3.5 Q15 8 12.5 12.5 M14.5 1.5 Q18 8 14.5 14.5" stroke="#fff" stroke-width="1.1" fill="none"/></svg>
<div style="left:2460px;top:1043.50px;font-size:12.3px;line-height:16px;color:#fff;font-family:'Liberation Sans',sans-serif;white-space:pre;transform:scaleX(0.9097);transform-origin:0 0;">14:43</div>
<div style="left:2452px;top:1061.00px;font-size:12.3px;line-height:16px;color:#fff;font-family:'Liberation Sans',sans-serif;white-space:pre;transform:scaleX(0.9342);transform-origin:0 0;">7-1-2020</div>
<svg style="left:2518px;top:1051px;" width="19" height="18" viewBox="0 0 19 18"><path d="M1 1 H18 V13 H11 L8 17 V13 H1Z" fill="#fff"/><path d="M4 5 H15 M4 8 H15 M4 11 H12" stroke="#3a3226" stroke-width="1"/></svg>
<div style="left:2554px;top:1039px;width:1px;height:41px;background:#6a6358;"></div>
</body></html>
